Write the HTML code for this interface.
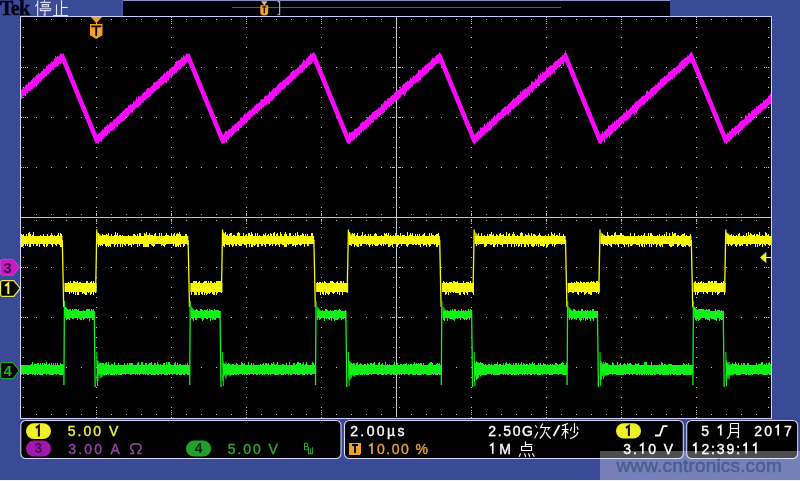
<!DOCTYPE html>
<html><head><meta charset="utf-8">
<style>
html,body{margin:0;padding:0;}
body{width:800px;height:481px;overflow:hidden;background:#3b4a96;position:relative;font-family:"Liberation Sans",sans-serif;}
svg{position:absolute;left:0;top:0;will-change:transform;}
.t{position:absolute;white-space:nowrap;font-size:14px;line-height:14px;letter-spacing:1.5px;}
</style></head><body>
<svg width="800" height="481" viewBox="0 0 800 481" shape-rendering="crispEdges">
<!-- record bar -->
<rect x="122" y="0" width="548" height="16" fill="#000"/>
<rect x="122" y="0" width="548" height="1" fill="#8890c4"/>
<rect x="122" y="0" width="1" height="16" fill="#5050a0"/>
<rect x="123" y="1" width="547" height="15" fill="#000008"/>
<rect x="232" y="7" width="329" height="1" fill="#8c3a8c"/>
<!-- graticule -->
<rect x="21" y="17" width="750" height="401" fill="#000"/>
<rect x="96" y="17" width="1" height="1" fill="#c4c4c4"/>
<rect x="96" y="27" width="1" height="1" fill="#c4c4c4"/>
<rect x="96" y="37" width="1" height="1" fill="#c4c4c4"/>
<rect x="96" y="47" width="1" height="1" fill="#c4c4c4"/>
<rect x="96" y="57" width="1" height="1" fill="#c4c4c4"/>
<rect x="96" y="67" width="1" height="1" fill="#c4c4c4"/>
<rect x="96" y="77" width="1" height="1" fill="#c4c4c4"/>
<rect x="96" y="87" width="1" height="1" fill="#c4c4c4"/>
<rect x="96" y="97" width="1" height="1" fill="#c4c4c4"/>
<rect x="96" y="107" width="1" height="1" fill="#c4c4c4"/>
<rect x="96" y="117" width="1" height="1" fill="#c4c4c4"/>
<rect x="96" y="127" width="1" height="1" fill="#c4c4c4"/>
<rect x="96" y="137" width="1" height="1" fill="#c4c4c4"/>
<rect x="96" y="147" width="1" height="1" fill="#c4c4c4"/>
<rect x="96" y="157" width="1" height="1" fill="#c4c4c4"/>
<rect x="96" y="167" width="1" height="1" fill="#c4c4c4"/>
<rect x="96" y="177" width="1" height="1" fill="#c4c4c4"/>
<rect x="96" y="187" width="1" height="1" fill="#c4c4c4"/>
<rect x="96" y="197" width="1" height="1" fill="#c4c4c4"/>
<rect x="96" y="207" width="1" height="1" fill="#c4c4c4"/>
<rect x="96" y="217" width="1" height="1" fill="#c4c4c4"/>
<rect x="96" y="227" width="1" height="1" fill="#c4c4c4"/>
<rect x="96" y="237" width="1" height="1" fill="#c4c4c4"/>
<rect x="96" y="247" width="1" height="1" fill="#c4c4c4"/>
<rect x="96" y="257" width="1" height="1" fill="#c4c4c4"/>
<rect x="96" y="267" width="1" height="1" fill="#c4c4c4"/>
<rect x="96" y="277" width="1" height="1" fill="#c4c4c4"/>
<rect x="96" y="287" width="1" height="1" fill="#c4c4c4"/>
<rect x="96" y="297" width="1" height="1" fill="#c4c4c4"/>
<rect x="96" y="307" width="1" height="1" fill="#c4c4c4"/>
<rect x="96" y="317" width="1" height="1" fill="#c4c4c4"/>
<rect x="96" y="327" width="1" height="1" fill="#c4c4c4"/>
<rect x="96" y="337" width="1" height="1" fill="#c4c4c4"/>
<rect x="96" y="347" width="1" height="1" fill="#c4c4c4"/>
<rect x="96" y="357" width="1" height="1" fill="#c4c4c4"/>
<rect x="96" y="367" width="1" height="1" fill="#c4c4c4"/>
<rect x="96" y="377" width="1" height="1" fill="#c4c4c4"/>
<rect x="96" y="387" width="1" height="1" fill="#c4c4c4"/>
<rect x="96" y="397" width="1" height="1" fill="#c4c4c4"/>
<rect x="96" y="407" width="1" height="1" fill="#c4c4c4"/>
<rect x="96" y="417" width="1" height="1" fill="#c4c4c4"/>
<rect x="171" y="17" width="1" height="1" fill="#c4c4c4"/>
<rect x="171" y="27" width="1" height="1" fill="#c4c4c4"/>
<rect x="171" y="37" width="1" height="1" fill="#c4c4c4"/>
<rect x="171" y="47" width="1" height="1" fill="#c4c4c4"/>
<rect x="171" y="57" width="1" height="1" fill="#c4c4c4"/>
<rect x="171" y="67" width="1" height="1" fill="#c4c4c4"/>
<rect x="171" y="77" width="1" height="1" fill="#c4c4c4"/>
<rect x="171" y="87" width="1" height="1" fill="#c4c4c4"/>
<rect x="171" y="97" width="1" height="1" fill="#c4c4c4"/>
<rect x="171" y="107" width="1" height="1" fill="#c4c4c4"/>
<rect x="171" y="117" width="1" height="1" fill="#c4c4c4"/>
<rect x="171" y="127" width="1" height="1" fill="#c4c4c4"/>
<rect x="171" y="137" width="1" height="1" fill="#c4c4c4"/>
<rect x="171" y="147" width="1" height="1" fill="#c4c4c4"/>
<rect x="171" y="157" width="1" height="1" fill="#c4c4c4"/>
<rect x="171" y="167" width="1" height="1" fill="#c4c4c4"/>
<rect x="171" y="177" width="1" height="1" fill="#c4c4c4"/>
<rect x="171" y="187" width="1" height="1" fill="#c4c4c4"/>
<rect x="171" y="197" width="1" height="1" fill="#c4c4c4"/>
<rect x="171" y="207" width="1" height="1" fill="#c4c4c4"/>
<rect x="171" y="217" width="1" height="1" fill="#c4c4c4"/>
<rect x="171" y="227" width="1" height="1" fill="#c4c4c4"/>
<rect x="171" y="237" width="1" height="1" fill="#c4c4c4"/>
<rect x="171" y="247" width="1" height="1" fill="#c4c4c4"/>
<rect x="171" y="257" width="1" height="1" fill="#c4c4c4"/>
<rect x="171" y="267" width="1" height="1" fill="#c4c4c4"/>
<rect x="171" y="277" width="1" height="1" fill="#c4c4c4"/>
<rect x="171" y="287" width="1" height="1" fill="#c4c4c4"/>
<rect x="171" y="297" width="1" height="1" fill="#c4c4c4"/>
<rect x="171" y="307" width="1" height="1" fill="#c4c4c4"/>
<rect x="171" y="317" width="1" height="1" fill="#c4c4c4"/>
<rect x="171" y="327" width="1" height="1" fill="#c4c4c4"/>
<rect x="171" y="337" width="1" height="1" fill="#c4c4c4"/>
<rect x="171" y="347" width="1" height="1" fill="#c4c4c4"/>
<rect x="171" y="357" width="1" height="1" fill="#c4c4c4"/>
<rect x="171" y="367" width="1" height="1" fill="#c4c4c4"/>
<rect x="171" y="377" width="1" height="1" fill="#c4c4c4"/>
<rect x="171" y="387" width="1" height="1" fill="#c4c4c4"/>
<rect x="171" y="397" width="1" height="1" fill="#c4c4c4"/>
<rect x="171" y="407" width="1" height="1" fill="#c4c4c4"/>
<rect x="171" y="417" width="1" height="1" fill="#c4c4c4"/>
<rect x="246" y="17" width="1" height="1" fill="#c4c4c4"/>
<rect x="246" y="27" width="1" height="1" fill="#c4c4c4"/>
<rect x="246" y="37" width="1" height="1" fill="#c4c4c4"/>
<rect x="246" y="47" width="1" height="1" fill="#c4c4c4"/>
<rect x="246" y="57" width="1" height="1" fill="#c4c4c4"/>
<rect x="246" y="67" width="1" height="1" fill="#c4c4c4"/>
<rect x="246" y="77" width="1" height="1" fill="#c4c4c4"/>
<rect x="246" y="87" width="1" height="1" fill="#c4c4c4"/>
<rect x="246" y="97" width="1" height="1" fill="#c4c4c4"/>
<rect x="246" y="107" width="1" height="1" fill="#c4c4c4"/>
<rect x="246" y="117" width="1" height="1" fill="#c4c4c4"/>
<rect x="246" y="127" width="1" height="1" fill="#c4c4c4"/>
<rect x="246" y="137" width="1" height="1" fill="#c4c4c4"/>
<rect x="246" y="147" width="1" height="1" fill="#c4c4c4"/>
<rect x="246" y="157" width="1" height="1" fill="#c4c4c4"/>
<rect x="246" y="167" width="1" height="1" fill="#c4c4c4"/>
<rect x="246" y="177" width="1" height="1" fill="#c4c4c4"/>
<rect x="246" y="187" width="1" height="1" fill="#c4c4c4"/>
<rect x="246" y="197" width="1" height="1" fill="#c4c4c4"/>
<rect x="246" y="207" width="1" height="1" fill="#c4c4c4"/>
<rect x="246" y="217" width="1" height="1" fill="#c4c4c4"/>
<rect x="246" y="227" width="1" height="1" fill="#c4c4c4"/>
<rect x="246" y="237" width="1" height="1" fill="#c4c4c4"/>
<rect x="246" y="247" width="1" height="1" fill="#c4c4c4"/>
<rect x="246" y="257" width="1" height="1" fill="#c4c4c4"/>
<rect x="246" y="267" width="1" height="1" fill="#c4c4c4"/>
<rect x="246" y="277" width="1" height="1" fill="#c4c4c4"/>
<rect x="246" y="287" width="1" height="1" fill="#c4c4c4"/>
<rect x="246" y="297" width="1" height="1" fill="#c4c4c4"/>
<rect x="246" y="307" width="1" height="1" fill="#c4c4c4"/>
<rect x="246" y="317" width="1" height="1" fill="#c4c4c4"/>
<rect x="246" y="327" width="1" height="1" fill="#c4c4c4"/>
<rect x="246" y="337" width="1" height="1" fill="#c4c4c4"/>
<rect x="246" y="347" width="1" height="1" fill="#c4c4c4"/>
<rect x="246" y="357" width="1" height="1" fill="#c4c4c4"/>
<rect x="246" y="367" width="1" height="1" fill="#c4c4c4"/>
<rect x="246" y="377" width="1" height="1" fill="#c4c4c4"/>
<rect x="246" y="387" width="1" height="1" fill="#c4c4c4"/>
<rect x="246" y="397" width="1" height="1" fill="#c4c4c4"/>
<rect x="246" y="407" width="1" height="1" fill="#c4c4c4"/>
<rect x="246" y="417" width="1" height="1" fill="#c4c4c4"/>
<rect x="321" y="17" width="1" height="1" fill="#c4c4c4"/>
<rect x="321" y="27" width="1" height="1" fill="#c4c4c4"/>
<rect x="321" y="37" width="1" height="1" fill="#c4c4c4"/>
<rect x="321" y="47" width="1" height="1" fill="#c4c4c4"/>
<rect x="321" y="57" width="1" height="1" fill="#c4c4c4"/>
<rect x="321" y="67" width="1" height="1" fill="#c4c4c4"/>
<rect x="321" y="77" width="1" height="1" fill="#c4c4c4"/>
<rect x="321" y="87" width="1" height="1" fill="#c4c4c4"/>
<rect x="321" y="97" width="1" height="1" fill="#c4c4c4"/>
<rect x="321" y="107" width="1" height="1" fill="#c4c4c4"/>
<rect x="321" y="117" width="1" height="1" fill="#c4c4c4"/>
<rect x="321" y="127" width="1" height="1" fill="#c4c4c4"/>
<rect x="321" y="137" width="1" height="1" fill="#c4c4c4"/>
<rect x="321" y="147" width="1" height="1" fill="#c4c4c4"/>
<rect x="321" y="157" width="1" height="1" fill="#c4c4c4"/>
<rect x="321" y="167" width="1" height="1" fill="#c4c4c4"/>
<rect x="321" y="177" width="1" height="1" fill="#c4c4c4"/>
<rect x="321" y="187" width="1" height="1" fill="#c4c4c4"/>
<rect x="321" y="197" width="1" height="1" fill="#c4c4c4"/>
<rect x="321" y="207" width="1" height="1" fill="#c4c4c4"/>
<rect x="321" y="217" width="1" height="1" fill="#c4c4c4"/>
<rect x="321" y="227" width="1" height="1" fill="#c4c4c4"/>
<rect x="321" y="237" width="1" height="1" fill="#c4c4c4"/>
<rect x="321" y="247" width="1" height="1" fill="#c4c4c4"/>
<rect x="321" y="257" width="1" height="1" fill="#c4c4c4"/>
<rect x="321" y="267" width="1" height="1" fill="#c4c4c4"/>
<rect x="321" y="277" width="1" height="1" fill="#c4c4c4"/>
<rect x="321" y="287" width="1" height="1" fill="#c4c4c4"/>
<rect x="321" y="297" width="1" height="1" fill="#c4c4c4"/>
<rect x="321" y="307" width="1" height="1" fill="#c4c4c4"/>
<rect x="321" y="317" width="1" height="1" fill="#c4c4c4"/>
<rect x="321" y="327" width="1" height="1" fill="#c4c4c4"/>
<rect x="321" y="337" width="1" height="1" fill="#c4c4c4"/>
<rect x="321" y="347" width="1" height="1" fill="#c4c4c4"/>
<rect x="321" y="357" width="1" height="1" fill="#c4c4c4"/>
<rect x="321" y="367" width="1" height="1" fill="#c4c4c4"/>
<rect x="321" y="377" width="1" height="1" fill="#c4c4c4"/>
<rect x="321" y="387" width="1" height="1" fill="#c4c4c4"/>
<rect x="321" y="397" width="1" height="1" fill="#c4c4c4"/>
<rect x="321" y="407" width="1" height="1" fill="#c4c4c4"/>
<rect x="321" y="417" width="1" height="1" fill="#c4c4c4"/>
<rect x="471" y="17" width="1" height="1" fill="#c4c4c4"/>
<rect x="471" y="27" width="1" height="1" fill="#c4c4c4"/>
<rect x="471" y="37" width="1" height="1" fill="#c4c4c4"/>
<rect x="471" y="47" width="1" height="1" fill="#c4c4c4"/>
<rect x="471" y="57" width="1" height="1" fill="#c4c4c4"/>
<rect x="471" y="67" width="1" height="1" fill="#c4c4c4"/>
<rect x="471" y="77" width="1" height="1" fill="#c4c4c4"/>
<rect x="471" y="87" width="1" height="1" fill="#c4c4c4"/>
<rect x="471" y="97" width="1" height="1" fill="#c4c4c4"/>
<rect x="471" y="107" width="1" height="1" fill="#c4c4c4"/>
<rect x="471" y="117" width="1" height="1" fill="#c4c4c4"/>
<rect x="471" y="127" width="1" height="1" fill="#c4c4c4"/>
<rect x="471" y="137" width="1" height="1" fill="#c4c4c4"/>
<rect x="471" y="147" width="1" height="1" fill="#c4c4c4"/>
<rect x="471" y="157" width="1" height="1" fill="#c4c4c4"/>
<rect x="471" y="167" width="1" height="1" fill="#c4c4c4"/>
<rect x="471" y="177" width="1" height="1" fill="#c4c4c4"/>
<rect x="471" y="187" width="1" height="1" fill="#c4c4c4"/>
<rect x="471" y="197" width="1" height="1" fill="#c4c4c4"/>
<rect x="471" y="207" width="1" height="1" fill="#c4c4c4"/>
<rect x="471" y="217" width="1" height="1" fill="#c4c4c4"/>
<rect x="471" y="227" width="1" height="1" fill="#c4c4c4"/>
<rect x="471" y="237" width="1" height="1" fill="#c4c4c4"/>
<rect x="471" y="247" width="1" height="1" fill="#c4c4c4"/>
<rect x="471" y="257" width="1" height="1" fill="#c4c4c4"/>
<rect x="471" y="267" width="1" height="1" fill="#c4c4c4"/>
<rect x="471" y="277" width="1" height="1" fill="#c4c4c4"/>
<rect x="471" y="287" width="1" height="1" fill="#c4c4c4"/>
<rect x="471" y="297" width="1" height="1" fill="#c4c4c4"/>
<rect x="471" y="307" width="1" height="1" fill="#c4c4c4"/>
<rect x="471" y="317" width="1" height="1" fill="#c4c4c4"/>
<rect x="471" y="327" width="1" height="1" fill="#c4c4c4"/>
<rect x="471" y="337" width="1" height="1" fill="#c4c4c4"/>
<rect x="471" y="347" width="1" height="1" fill="#c4c4c4"/>
<rect x="471" y="357" width="1" height="1" fill="#c4c4c4"/>
<rect x="471" y="367" width="1" height="1" fill="#c4c4c4"/>
<rect x="471" y="377" width="1" height="1" fill="#c4c4c4"/>
<rect x="471" y="387" width="1" height="1" fill="#c4c4c4"/>
<rect x="471" y="397" width="1" height="1" fill="#c4c4c4"/>
<rect x="471" y="407" width="1" height="1" fill="#c4c4c4"/>
<rect x="471" y="417" width="1" height="1" fill="#c4c4c4"/>
<rect x="546" y="17" width="1" height="1" fill="#c4c4c4"/>
<rect x="546" y="27" width="1" height="1" fill="#c4c4c4"/>
<rect x="546" y="37" width="1" height="1" fill="#c4c4c4"/>
<rect x="546" y="47" width="1" height="1" fill="#c4c4c4"/>
<rect x="546" y="57" width="1" height="1" fill="#c4c4c4"/>
<rect x="546" y="67" width="1" height="1" fill="#c4c4c4"/>
<rect x="546" y="77" width="1" height="1" fill="#c4c4c4"/>
<rect x="546" y="87" width="1" height="1" fill="#c4c4c4"/>
<rect x="546" y="97" width="1" height="1" fill="#c4c4c4"/>
<rect x="546" y="107" width="1" height="1" fill="#c4c4c4"/>
<rect x="546" y="117" width="1" height="1" fill="#c4c4c4"/>
<rect x="546" y="127" width="1" height="1" fill="#c4c4c4"/>
<rect x="546" y="137" width="1" height="1" fill="#c4c4c4"/>
<rect x="546" y="147" width="1" height="1" fill="#c4c4c4"/>
<rect x="546" y="157" width="1" height="1" fill="#c4c4c4"/>
<rect x="546" y="167" width="1" height="1" fill="#c4c4c4"/>
<rect x="546" y="177" width="1" height="1" fill="#c4c4c4"/>
<rect x="546" y="187" width="1" height="1" fill="#c4c4c4"/>
<rect x="546" y="197" width="1" height="1" fill="#c4c4c4"/>
<rect x="546" y="207" width="1" height="1" fill="#c4c4c4"/>
<rect x="546" y="217" width="1" height="1" fill="#c4c4c4"/>
<rect x="546" y="227" width="1" height="1" fill="#c4c4c4"/>
<rect x="546" y="237" width="1" height="1" fill="#c4c4c4"/>
<rect x="546" y="247" width="1" height="1" fill="#c4c4c4"/>
<rect x="546" y="257" width="1" height="1" fill="#c4c4c4"/>
<rect x="546" y="267" width="1" height="1" fill="#c4c4c4"/>
<rect x="546" y="277" width="1" height="1" fill="#c4c4c4"/>
<rect x="546" y="287" width="1" height="1" fill="#c4c4c4"/>
<rect x="546" y="297" width="1" height="1" fill="#c4c4c4"/>
<rect x="546" y="307" width="1" height="1" fill="#c4c4c4"/>
<rect x="546" y="317" width="1" height="1" fill="#c4c4c4"/>
<rect x="546" y="327" width="1" height="1" fill="#c4c4c4"/>
<rect x="546" y="337" width="1" height="1" fill="#c4c4c4"/>
<rect x="546" y="347" width="1" height="1" fill="#c4c4c4"/>
<rect x="546" y="357" width="1" height="1" fill="#c4c4c4"/>
<rect x="546" y="367" width="1" height="1" fill="#c4c4c4"/>
<rect x="546" y="377" width="1" height="1" fill="#c4c4c4"/>
<rect x="546" y="387" width="1" height="1" fill="#c4c4c4"/>
<rect x="546" y="397" width="1" height="1" fill="#c4c4c4"/>
<rect x="546" y="407" width="1" height="1" fill="#c4c4c4"/>
<rect x="546" y="417" width="1" height="1" fill="#c4c4c4"/>
<rect x="621" y="17" width="1" height="1" fill="#c4c4c4"/>
<rect x="621" y="27" width="1" height="1" fill="#c4c4c4"/>
<rect x="621" y="37" width="1" height="1" fill="#c4c4c4"/>
<rect x="621" y="47" width="1" height="1" fill="#c4c4c4"/>
<rect x="621" y="57" width="1" height="1" fill="#c4c4c4"/>
<rect x="621" y="67" width="1" height="1" fill="#c4c4c4"/>
<rect x="621" y="77" width="1" height="1" fill="#c4c4c4"/>
<rect x="621" y="87" width="1" height="1" fill="#c4c4c4"/>
<rect x="621" y="97" width="1" height="1" fill="#c4c4c4"/>
<rect x="621" y="107" width="1" height="1" fill="#c4c4c4"/>
<rect x="621" y="117" width="1" height="1" fill="#c4c4c4"/>
<rect x="621" y="127" width="1" height="1" fill="#c4c4c4"/>
<rect x="621" y="137" width="1" height="1" fill="#c4c4c4"/>
<rect x="621" y="147" width="1" height="1" fill="#c4c4c4"/>
<rect x="621" y="157" width="1" height="1" fill="#c4c4c4"/>
<rect x="621" y="167" width="1" height="1" fill="#c4c4c4"/>
<rect x="621" y="177" width="1" height="1" fill="#c4c4c4"/>
<rect x="621" y="187" width="1" height="1" fill="#c4c4c4"/>
<rect x="621" y="197" width="1" height="1" fill="#c4c4c4"/>
<rect x="621" y="207" width="1" height="1" fill="#c4c4c4"/>
<rect x="621" y="217" width="1" height="1" fill="#c4c4c4"/>
<rect x="621" y="227" width="1" height="1" fill="#c4c4c4"/>
<rect x="621" y="237" width="1" height="1" fill="#c4c4c4"/>
<rect x="621" y="247" width="1" height="1" fill="#c4c4c4"/>
<rect x="621" y="257" width="1" height="1" fill="#c4c4c4"/>
<rect x="621" y="267" width="1" height="1" fill="#c4c4c4"/>
<rect x="621" y="277" width="1" height="1" fill="#c4c4c4"/>
<rect x="621" y="287" width="1" height="1" fill="#c4c4c4"/>
<rect x="621" y="297" width="1" height="1" fill="#c4c4c4"/>
<rect x="621" y="307" width="1" height="1" fill="#c4c4c4"/>
<rect x="621" y="317" width="1" height="1" fill="#c4c4c4"/>
<rect x="621" y="327" width="1" height="1" fill="#c4c4c4"/>
<rect x="621" y="337" width="1" height="1" fill="#c4c4c4"/>
<rect x="621" y="347" width="1" height="1" fill="#c4c4c4"/>
<rect x="621" y="357" width="1" height="1" fill="#c4c4c4"/>
<rect x="621" y="367" width="1" height="1" fill="#c4c4c4"/>
<rect x="621" y="377" width="1" height="1" fill="#c4c4c4"/>
<rect x="621" y="387" width="1" height="1" fill="#c4c4c4"/>
<rect x="621" y="397" width="1" height="1" fill="#c4c4c4"/>
<rect x="621" y="407" width="1" height="1" fill="#c4c4c4"/>
<rect x="621" y="417" width="1" height="1" fill="#c4c4c4"/>
<rect x="696" y="17" width="1" height="1" fill="#c4c4c4"/>
<rect x="696" y="27" width="1" height="1" fill="#c4c4c4"/>
<rect x="696" y="37" width="1" height="1" fill="#c4c4c4"/>
<rect x="696" y="47" width="1" height="1" fill="#c4c4c4"/>
<rect x="696" y="57" width="1" height="1" fill="#c4c4c4"/>
<rect x="696" y="67" width="1" height="1" fill="#c4c4c4"/>
<rect x="696" y="77" width="1" height="1" fill="#c4c4c4"/>
<rect x="696" y="87" width="1" height="1" fill="#c4c4c4"/>
<rect x="696" y="97" width="1" height="1" fill="#c4c4c4"/>
<rect x="696" y="107" width="1" height="1" fill="#c4c4c4"/>
<rect x="696" y="117" width="1" height="1" fill="#c4c4c4"/>
<rect x="696" y="127" width="1" height="1" fill="#c4c4c4"/>
<rect x="696" y="137" width="1" height="1" fill="#c4c4c4"/>
<rect x="696" y="147" width="1" height="1" fill="#c4c4c4"/>
<rect x="696" y="157" width="1" height="1" fill="#c4c4c4"/>
<rect x="696" y="167" width="1" height="1" fill="#c4c4c4"/>
<rect x="696" y="177" width="1" height="1" fill="#c4c4c4"/>
<rect x="696" y="187" width="1" height="1" fill="#c4c4c4"/>
<rect x="696" y="197" width="1" height="1" fill="#c4c4c4"/>
<rect x="696" y="207" width="1" height="1" fill="#c4c4c4"/>
<rect x="696" y="217" width="1" height="1" fill="#c4c4c4"/>
<rect x="696" y="227" width="1" height="1" fill="#c4c4c4"/>
<rect x="696" y="237" width="1" height="1" fill="#c4c4c4"/>
<rect x="696" y="247" width="1" height="1" fill="#c4c4c4"/>
<rect x="696" y="257" width="1" height="1" fill="#c4c4c4"/>
<rect x="696" y="267" width="1" height="1" fill="#c4c4c4"/>
<rect x="696" y="277" width="1" height="1" fill="#c4c4c4"/>
<rect x="696" y="287" width="1" height="1" fill="#c4c4c4"/>
<rect x="696" y="297" width="1" height="1" fill="#c4c4c4"/>
<rect x="696" y="307" width="1" height="1" fill="#c4c4c4"/>
<rect x="696" y="317" width="1" height="1" fill="#c4c4c4"/>
<rect x="696" y="327" width="1" height="1" fill="#c4c4c4"/>
<rect x="696" y="337" width="1" height="1" fill="#c4c4c4"/>
<rect x="696" y="347" width="1" height="1" fill="#c4c4c4"/>
<rect x="696" y="357" width="1" height="1" fill="#c4c4c4"/>
<rect x="696" y="367" width="1" height="1" fill="#c4c4c4"/>
<rect x="696" y="377" width="1" height="1" fill="#c4c4c4"/>
<rect x="696" y="387" width="1" height="1" fill="#c4c4c4"/>
<rect x="696" y="397" width="1" height="1" fill="#c4c4c4"/>
<rect x="696" y="407" width="1" height="1" fill="#c4c4c4"/>
<rect x="696" y="417" width="1" height="1" fill="#c4c4c4"/>
<rect x="21" y="67" width="1" height="1" fill="#c4c4c4"/>
<rect x="36" y="67" width="1" height="1" fill="#c4c4c4"/>
<rect x="51" y="67" width="1" height="1" fill="#c4c4c4"/>
<rect x="66" y="67" width="1" height="1" fill="#c4c4c4"/>
<rect x="81" y="67" width="1" height="1" fill="#c4c4c4"/>
<rect x="96" y="67" width="1" height="1" fill="#c4c4c4"/>
<rect x="111" y="67" width="1" height="1" fill="#c4c4c4"/>
<rect x="126" y="67" width="1" height="1" fill="#c4c4c4"/>
<rect x="141" y="67" width="1" height="1" fill="#c4c4c4"/>
<rect x="156" y="67" width="1" height="1" fill="#c4c4c4"/>
<rect x="171" y="67" width="1" height="1" fill="#c4c4c4"/>
<rect x="186" y="67" width="1" height="1" fill="#c4c4c4"/>
<rect x="201" y="67" width="1" height="1" fill="#c4c4c4"/>
<rect x="216" y="67" width="1" height="1" fill="#c4c4c4"/>
<rect x="231" y="67" width="1" height="1" fill="#c4c4c4"/>
<rect x="246" y="67" width="1" height="1" fill="#c4c4c4"/>
<rect x="261" y="67" width="1" height="1" fill="#c4c4c4"/>
<rect x="276" y="67" width="1" height="1" fill="#c4c4c4"/>
<rect x="291" y="67" width="1" height="1" fill="#c4c4c4"/>
<rect x="306" y="67" width="1" height="1" fill="#c4c4c4"/>
<rect x="321" y="67" width="1" height="1" fill="#c4c4c4"/>
<rect x="336" y="67" width="1" height="1" fill="#c4c4c4"/>
<rect x="351" y="67" width="1" height="1" fill="#c4c4c4"/>
<rect x="366" y="67" width="1" height="1" fill="#c4c4c4"/>
<rect x="381" y="67" width="1" height="1" fill="#c4c4c4"/>
<rect x="396" y="67" width="1" height="1" fill="#c4c4c4"/>
<rect x="411" y="67" width="1" height="1" fill="#c4c4c4"/>
<rect x="426" y="67" width="1" height="1" fill="#c4c4c4"/>
<rect x="441" y="67" width="1" height="1" fill="#c4c4c4"/>
<rect x="456" y="67" width="1" height="1" fill="#c4c4c4"/>
<rect x="471" y="67" width="1" height="1" fill="#c4c4c4"/>
<rect x="486" y="67" width="1" height="1" fill="#c4c4c4"/>
<rect x="501" y="67" width="1" height="1" fill="#c4c4c4"/>
<rect x="516" y="67" width="1" height="1" fill="#c4c4c4"/>
<rect x="531" y="67" width="1" height="1" fill="#c4c4c4"/>
<rect x="546" y="67" width="1" height="1" fill="#c4c4c4"/>
<rect x="561" y="67" width="1" height="1" fill="#c4c4c4"/>
<rect x="576" y="67" width="1" height="1" fill="#c4c4c4"/>
<rect x="591" y="67" width="1" height="1" fill="#c4c4c4"/>
<rect x="606" y="67" width="1" height="1" fill="#c4c4c4"/>
<rect x="621" y="67" width="1" height="1" fill="#c4c4c4"/>
<rect x="636" y="67" width="1" height="1" fill="#c4c4c4"/>
<rect x="651" y="67" width="1" height="1" fill="#c4c4c4"/>
<rect x="666" y="67" width="1" height="1" fill="#c4c4c4"/>
<rect x="681" y="67" width="1" height="1" fill="#c4c4c4"/>
<rect x="696" y="67" width="1" height="1" fill="#c4c4c4"/>
<rect x="711" y="67" width="1" height="1" fill="#c4c4c4"/>
<rect x="726" y="67" width="1" height="1" fill="#c4c4c4"/>
<rect x="741" y="67" width="1" height="1" fill="#c4c4c4"/>
<rect x="756" y="67" width="1" height="1" fill="#c4c4c4"/>
<rect x="771" y="67" width="1" height="1" fill="#c4c4c4"/>
<rect x="21" y="117" width="1" height="1" fill="#c4c4c4"/>
<rect x="36" y="117" width="1" height="1" fill="#c4c4c4"/>
<rect x="51" y="117" width="1" height="1" fill="#c4c4c4"/>
<rect x="66" y="117" width="1" height="1" fill="#c4c4c4"/>
<rect x="81" y="117" width="1" height="1" fill="#c4c4c4"/>
<rect x="96" y="117" width="1" height="1" fill="#c4c4c4"/>
<rect x="111" y="117" width="1" height="1" fill="#c4c4c4"/>
<rect x="126" y="117" width="1" height="1" fill="#c4c4c4"/>
<rect x="141" y="117" width="1" height="1" fill="#c4c4c4"/>
<rect x="156" y="117" width="1" height="1" fill="#c4c4c4"/>
<rect x="171" y="117" width="1" height="1" fill="#c4c4c4"/>
<rect x="186" y="117" width="1" height="1" fill="#c4c4c4"/>
<rect x="201" y="117" width="1" height="1" fill="#c4c4c4"/>
<rect x="216" y="117" width="1" height="1" fill="#c4c4c4"/>
<rect x="231" y="117" width="1" height="1" fill="#c4c4c4"/>
<rect x="246" y="117" width="1" height="1" fill="#c4c4c4"/>
<rect x="261" y="117" width="1" height="1" fill="#c4c4c4"/>
<rect x="276" y="117" width="1" height="1" fill="#c4c4c4"/>
<rect x="291" y="117" width="1" height="1" fill="#c4c4c4"/>
<rect x="306" y="117" width="1" height="1" fill="#c4c4c4"/>
<rect x="321" y="117" width="1" height="1" fill="#c4c4c4"/>
<rect x="336" y="117" width="1" height="1" fill="#c4c4c4"/>
<rect x="351" y="117" width="1" height="1" fill="#c4c4c4"/>
<rect x="366" y="117" width="1" height="1" fill="#c4c4c4"/>
<rect x="381" y="117" width="1" height="1" fill="#c4c4c4"/>
<rect x="396" y="117" width="1" height="1" fill="#c4c4c4"/>
<rect x="411" y="117" width="1" height="1" fill="#c4c4c4"/>
<rect x="426" y="117" width="1" height="1" fill="#c4c4c4"/>
<rect x="441" y="117" width="1" height="1" fill="#c4c4c4"/>
<rect x="456" y="117" width="1" height="1" fill="#c4c4c4"/>
<rect x="471" y="117" width="1" height="1" fill="#c4c4c4"/>
<rect x="486" y="117" width="1" height="1" fill="#c4c4c4"/>
<rect x="501" y="117" width="1" height="1" fill="#c4c4c4"/>
<rect x="516" y="117" width="1" height="1" fill="#c4c4c4"/>
<rect x="531" y="117" width="1" height="1" fill="#c4c4c4"/>
<rect x="546" y="117" width="1" height="1" fill="#c4c4c4"/>
<rect x="561" y="117" width="1" height="1" fill="#c4c4c4"/>
<rect x="576" y="117" width="1" height="1" fill="#c4c4c4"/>
<rect x="591" y="117" width="1" height="1" fill="#c4c4c4"/>
<rect x="606" y="117" width="1" height="1" fill="#c4c4c4"/>
<rect x="621" y="117" width="1" height="1" fill="#c4c4c4"/>
<rect x="636" y="117" width="1" height="1" fill="#c4c4c4"/>
<rect x="651" y="117" width="1" height="1" fill="#c4c4c4"/>
<rect x="666" y="117" width="1" height="1" fill="#c4c4c4"/>
<rect x="681" y="117" width="1" height="1" fill="#c4c4c4"/>
<rect x="696" y="117" width="1" height="1" fill="#c4c4c4"/>
<rect x="711" y="117" width="1" height="1" fill="#c4c4c4"/>
<rect x="726" y="117" width="1" height="1" fill="#c4c4c4"/>
<rect x="741" y="117" width="1" height="1" fill="#c4c4c4"/>
<rect x="756" y="117" width="1" height="1" fill="#c4c4c4"/>
<rect x="771" y="117" width="1" height="1" fill="#c4c4c4"/>
<rect x="21" y="167" width="1" height="1" fill="#c4c4c4"/>
<rect x="36" y="167" width="1" height="1" fill="#c4c4c4"/>
<rect x="51" y="167" width="1" height="1" fill="#c4c4c4"/>
<rect x="66" y="167" width="1" height="1" fill="#c4c4c4"/>
<rect x="81" y="167" width="1" height="1" fill="#c4c4c4"/>
<rect x="96" y="167" width="1" height="1" fill="#c4c4c4"/>
<rect x="111" y="167" width="1" height="1" fill="#c4c4c4"/>
<rect x="126" y="167" width="1" height="1" fill="#c4c4c4"/>
<rect x="141" y="167" width="1" height="1" fill="#c4c4c4"/>
<rect x="156" y="167" width="1" height="1" fill="#c4c4c4"/>
<rect x="171" y="167" width="1" height="1" fill="#c4c4c4"/>
<rect x="186" y="167" width="1" height="1" fill="#c4c4c4"/>
<rect x="201" y="167" width="1" height="1" fill="#c4c4c4"/>
<rect x="216" y="167" width="1" height="1" fill="#c4c4c4"/>
<rect x="231" y="167" width="1" height="1" fill="#c4c4c4"/>
<rect x="246" y="167" width="1" height="1" fill="#c4c4c4"/>
<rect x="261" y="167" width="1" height="1" fill="#c4c4c4"/>
<rect x="276" y="167" width="1" height="1" fill="#c4c4c4"/>
<rect x="291" y="167" width="1" height="1" fill="#c4c4c4"/>
<rect x="306" y="167" width="1" height="1" fill="#c4c4c4"/>
<rect x="321" y="167" width="1" height="1" fill="#c4c4c4"/>
<rect x="336" y="167" width="1" height="1" fill="#c4c4c4"/>
<rect x="351" y="167" width="1" height="1" fill="#c4c4c4"/>
<rect x="366" y="167" width="1" height="1" fill="#c4c4c4"/>
<rect x="381" y="167" width="1" height="1" fill="#c4c4c4"/>
<rect x="396" y="167" width="1" height="1" fill="#c4c4c4"/>
<rect x="411" y="167" width="1" height="1" fill="#c4c4c4"/>
<rect x="426" y="167" width="1" height="1" fill="#c4c4c4"/>
<rect x="441" y="167" width="1" height="1" fill="#c4c4c4"/>
<rect x="456" y="167" width="1" height="1" fill="#c4c4c4"/>
<rect x="471" y="167" width="1" height="1" fill="#c4c4c4"/>
<rect x="486" y="167" width="1" height="1" fill="#c4c4c4"/>
<rect x="501" y="167" width="1" height="1" fill="#c4c4c4"/>
<rect x="516" y="167" width="1" height="1" fill="#c4c4c4"/>
<rect x="531" y="167" width="1" height="1" fill="#c4c4c4"/>
<rect x="546" y="167" width="1" height="1" fill="#c4c4c4"/>
<rect x="561" y="167" width="1" height="1" fill="#c4c4c4"/>
<rect x="576" y="167" width="1" height="1" fill="#c4c4c4"/>
<rect x="591" y="167" width="1" height="1" fill="#c4c4c4"/>
<rect x="606" y="167" width="1" height="1" fill="#c4c4c4"/>
<rect x="621" y="167" width="1" height="1" fill="#c4c4c4"/>
<rect x="636" y="167" width="1" height="1" fill="#c4c4c4"/>
<rect x="651" y="167" width="1" height="1" fill="#c4c4c4"/>
<rect x="666" y="167" width="1" height="1" fill="#c4c4c4"/>
<rect x="681" y="167" width="1" height="1" fill="#c4c4c4"/>
<rect x="696" y="167" width="1" height="1" fill="#c4c4c4"/>
<rect x="711" y="167" width="1" height="1" fill="#c4c4c4"/>
<rect x="726" y="167" width="1" height="1" fill="#c4c4c4"/>
<rect x="741" y="167" width="1" height="1" fill="#c4c4c4"/>
<rect x="756" y="167" width="1" height="1" fill="#c4c4c4"/>
<rect x="771" y="167" width="1" height="1" fill="#c4c4c4"/>
<rect x="21" y="267" width="1" height="1" fill="#c4c4c4"/>
<rect x="36" y="267" width="1" height="1" fill="#c4c4c4"/>
<rect x="51" y="267" width="1" height="1" fill="#c4c4c4"/>
<rect x="66" y="267" width="1" height="1" fill="#c4c4c4"/>
<rect x="81" y="267" width="1" height="1" fill="#c4c4c4"/>
<rect x="96" y="267" width="1" height="1" fill="#c4c4c4"/>
<rect x="111" y="267" width="1" height="1" fill="#c4c4c4"/>
<rect x="126" y="267" width="1" height="1" fill="#c4c4c4"/>
<rect x="141" y="267" width="1" height="1" fill="#c4c4c4"/>
<rect x="156" y="267" width="1" height="1" fill="#c4c4c4"/>
<rect x="171" y="267" width="1" height="1" fill="#c4c4c4"/>
<rect x="186" y="267" width="1" height="1" fill="#c4c4c4"/>
<rect x="201" y="267" width="1" height="1" fill="#c4c4c4"/>
<rect x="216" y="267" width="1" height="1" fill="#c4c4c4"/>
<rect x="231" y="267" width="1" height="1" fill="#c4c4c4"/>
<rect x="246" y="267" width="1" height="1" fill="#c4c4c4"/>
<rect x="261" y="267" width="1" height="1" fill="#c4c4c4"/>
<rect x="276" y="267" width="1" height="1" fill="#c4c4c4"/>
<rect x="291" y="267" width="1" height="1" fill="#c4c4c4"/>
<rect x="306" y="267" width="1" height="1" fill="#c4c4c4"/>
<rect x="321" y="267" width="1" height="1" fill="#c4c4c4"/>
<rect x="336" y="267" width="1" height="1" fill="#c4c4c4"/>
<rect x="351" y="267" width="1" height="1" fill="#c4c4c4"/>
<rect x="366" y="267" width="1" height="1" fill="#c4c4c4"/>
<rect x="381" y="267" width="1" height="1" fill="#c4c4c4"/>
<rect x="396" y="267" width="1" height="1" fill="#c4c4c4"/>
<rect x="411" y="267" width="1" height="1" fill="#c4c4c4"/>
<rect x="426" y="267" width="1" height="1" fill="#c4c4c4"/>
<rect x="441" y="267" width="1" height="1" fill="#c4c4c4"/>
<rect x="456" y="267" width="1" height="1" fill="#c4c4c4"/>
<rect x="471" y="267" width="1" height="1" fill="#c4c4c4"/>
<rect x="486" y="267" width="1" height="1" fill="#c4c4c4"/>
<rect x="501" y="267" width="1" height="1" fill="#c4c4c4"/>
<rect x="516" y="267" width="1" height="1" fill="#c4c4c4"/>
<rect x="531" y="267" width="1" height="1" fill="#c4c4c4"/>
<rect x="546" y="267" width="1" height="1" fill="#c4c4c4"/>
<rect x="561" y="267" width="1" height="1" fill="#c4c4c4"/>
<rect x="576" y="267" width="1" height="1" fill="#c4c4c4"/>
<rect x="591" y="267" width="1" height="1" fill="#c4c4c4"/>
<rect x="606" y="267" width="1" height="1" fill="#c4c4c4"/>
<rect x="621" y="267" width="1" height="1" fill="#c4c4c4"/>
<rect x="636" y="267" width="1" height="1" fill="#c4c4c4"/>
<rect x="651" y="267" width="1" height="1" fill="#c4c4c4"/>
<rect x="666" y="267" width="1" height="1" fill="#c4c4c4"/>
<rect x="681" y="267" width="1" height="1" fill="#c4c4c4"/>
<rect x="696" y="267" width="1" height="1" fill="#c4c4c4"/>
<rect x="711" y="267" width="1" height="1" fill="#c4c4c4"/>
<rect x="726" y="267" width="1" height="1" fill="#c4c4c4"/>
<rect x="741" y="267" width="1" height="1" fill="#c4c4c4"/>
<rect x="756" y="267" width="1" height="1" fill="#c4c4c4"/>
<rect x="771" y="267" width="1" height="1" fill="#c4c4c4"/>
<rect x="21" y="317" width="1" height="1" fill="#c4c4c4"/>
<rect x="36" y="317" width="1" height="1" fill="#c4c4c4"/>
<rect x="51" y="317" width="1" height="1" fill="#c4c4c4"/>
<rect x="66" y="317" width="1" height="1" fill="#c4c4c4"/>
<rect x="81" y="317" width="1" height="1" fill="#c4c4c4"/>
<rect x="96" y="317" width="1" height="1" fill="#c4c4c4"/>
<rect x="111" y="317" width="1" height="1" fill="#c4c4c4"/>
<rect x="126" y="317" width="1" height="1" fill="#c4c4c4"/>
<rect x="141" y="317" width="1" height="1" fill="#c4c4c4"/>
<rect x="156" y="317" width="1" height="1" fill="#c4c4c4"/>
<rect x="171" y="317" width="1" height="1" fill="#c4c4c4"/>
<rect x="186" y="317" width="1" height="1" fill="#c4c4c4"/>
<rect x="201" y="317" width="1" height="1" fill="#c4c4c4"/>
<rect x="216" y="317" width="1" height="1" fill="#c4c4c4"/>
<rect x="231" y="317" width="1" height="1" fill="#c4c4c4"/>
<rect x="246" y="317" width="1" height="1" fill="#c4c4c4"/>
<rect x="261" y="317" width="1" height="1" fill="#c4c4c4"/>
<rect x="276" y="317" width="1" height="1" fill="#c4c4c4"/>
<rect x="291" y="317" width="1" height="1" fill="#c4c4c4"/>
<rect x="306" y="317" width="1" height="1" fill="#c4c4c4"/>
<rect x="321" y="317" width="1" height="1" fill="#c4c4c4"/>
<rect x="336" y="317" width="1" height="1" fill="#c4c4c4"/>
<rect x="351" y="317" width="1" height="1" fill="#c4c4c4"/>
<rect x="366" y="317" width="1" height="1" fill="#c4c4c4"/>
<rect x="381" y="317" width="1" height="1" fill="#c4c4c4"/>
<rect x="396" y="317" width="1" height="1" fill="#c4c4c4"/>
<rect x="411" y="317" width="1" height="1" fill="#c4c4c4"/>
<rect x="426" y="317" width="1" height="1" fill="#c4c4c4"/>
<rect x="441" y="317" width="1" height="1" fill="#c4c4c4"/>
<rect x="456" y="317" width="1" height="1" fill="#c4c4c4"/>
<rect x="471" y="317" width="1" height="1" fill="#c4c4c4"/>
<rect x="486" y="317" width="1" height="1" fill="#c4c4c4"/>
<rect x="501" y="317" width="1" height="1" fill="#c4c4c4"/>
<rect x="516" y="317" width="1" height="1" fill="#c4c4c4"/>
<rect x="531" y="317" width="1" height="1" fill="#c4c4c4"/>
<rect x="546" y="317" width="1" height="1" fill="#c4c4c4"/>
<rect x="561" y="317" width="1" height="1" fill="#c4c4c4"/>
<rect x="576" y="317" width="1" height="1" fill="#c4c4c4"/>
<rect x="591" y="317" width="1" height="1" fill="#c4c4c4"/>
<rect x="606" y="317" width="1" height="1" fill="#c4c4c4"/>
<rect x="621" y="317" width="1" height="1" fill="#c4c4c4"/>
<rect x="636" y="317" width="1" height="1" fill="#c4c4c4"/>
<rect x="651" y="317" width="1" height="1" fill="#c4c4c4"/>
<rect x="666" y="317" width="1" height="1" fill="#c4c4c4"/>
<rect x="681" y="317" width="1" height="1" fill="#c4c4c4"/>
<rect x="696" y="317" width="1" height="1" fill="#c4c4c4"/>
<rect x="711" y="317" width="1" height="1" fill="#c4c4c4"/>
<rect x="726" y="317" width="1" height="1" fill="#c4c4c4"/>
<rect x="741" y="317" width="1" height="1" fill="#c4c4c4"/>
<rect x="756" y="317" width="1" height="1" fill="#c4c4c4"/>
<rect x="771" y="317" width="1" height="1" fill="#c4c4c4"/>
<rect x="21" y="367" width="1" height="1" fill="#c4c4c4"/>
<rect x="36" y="367" width="1" height="1" fill="#c4c4c4"/>
<rect x="51" y="367" width="1" height="1" fill="#c4c4c4"/>
<rect x="66" y="367" width="1" height="1" fill="#c4c4c4"/>
<rect x="81" y="367" width="1" height="1" fill="#c4c4c4"/>
<rect x="96" y="367" width="1" height="1" fill="#c4c4c4"/>
<rect x="111" y="367" width="1" height="1" fill="#c4c4c4"/>
<rect x="126" y="367" width="1" height="1" fill="#c4c4c4"/>
<rect x="141" y="367" width="1" height="1" fill="#c4c4c4"/>
<rect x="156" y="367" width="1" height="1" fill="#c4c4c4"/>
<rect x="171" y="367" width="1" height="1" fill="#c4c4c4"/>
<rect x="186" y="367" width="1" height="1" fill="#c4c4c4"/>
<rect x="201" y="367" width="1" height="1" fill="#c4c4c4"/>
<rect x="216" y="367" width="1" height="1" fill="#c4c4c4"/>
<rect x="231" y="367" width="1" height="1" fill="#c4c4c4"/>
<rect x="246" y="367" width="1" height="1" fill="#c4c4c4"/>
<rect x="261" y="367" width="1" height="1" fill="#c4c4c4"/>
<rect x="276" y="367" width="1" height="1" fill="#c4c4c4"/>
<rect x="291" y="367" width="1" height="1" fill="#c4c4c4"/>
<rect x="306" y="367" width="1" height="1" fill="#c4c4c4"/>
<rect x="321" y="367" width="1" height="1" fill="#c4c4c4"/>
<rect x="336" y="367" width="1" height="1" fill="#c4c4c4"/>
<rect x="351" y="367" width="1" height="1" fill="#c4c4c4"/>
<rect x="366" y="367" width="1" height="1" fill="#c4c4c4"/>
<rect x="381" y="367" width="1" height="1" fill="#c4c4c4"/>
<rect x="396" y="367" width="1" height="1" fill="#c4c4c4"/>
<rect x="411" y="367" width="1" height="1" fill="#c4c4c4"/>
<rect x="426" y="367" width="1" height="1" fill="#c4c4c4"/>
<rect x="441" y="367" width="1" height="1" fill="#c4c4c4"/>
<rect x="456" y="367" width="1" height="1" fill="#c4c4c4"/>
<rect x="471" y="367" width="1" height="1" fill="#c4c4c4"/>
<rect x="486" y="367" width="1" height="1" fill="#c4c4c4"/>
<rect x="501" y="367" width="1" height="1" fill="#c4c4c4"/>
<rect x="516" y="367" width="1" height="1" fill="#c4c4c4"/>
<rect x="531" y="367" width="1" height="1" fill="#c4c4c4"/>
<rect x="546" y="367" width="1" height="1" fill="#c4c4c4"/>
<rect x="561" y="367" width="1" height="1" fill="#c4c4c4"/>
<rect x="576" y="367" width="1" height="1" fill="#c4c4c4"/>
<rect x="591" y="367" width="1" height="1" fill="#c4c4c4"/>
<rect x="606" y="367" width="1" height="1" fill="#c4c4c4"/>
<rect x="621" y="367" width="1" height="1" fill="#c4c4c4"/>
<rect x="636" y="367" width="1" height="1" fill="#c4c4c4"/>
<rect x="651" y="367" width="1" height="1" fill="#c4c4c4"/>
<rect x="666" y="367" width="1" height="1" fill="#c4c4c4"/>
<rect x="681" y="367" width="1" height="1" fill="#c4c4c4"/>
<rect x="696" y="367" width="1" height="1" fill="#c4c4c4"/>
<rect x="711" y="367" width="1" height="1" fill="#c4c4c4"/>
<rect x="726" y="367" width="1" height="1" fill="#c4c4c4"/>
<rect x="741" y="367" width="1" height="1" fill="#c4c4c4"/>
<rect x="756" y="367" width="1" height="1" fill="#c4c4c4"/>
<rect x="771" y="367" width="1" height="1" fill="#c4c4c4"/>
<rect x="36" y="19" width="1" height="1" fill="#c4c4c4"/>
<rect x="36" y="414" width="1" height="1" fill="#c4c4c4"/>
<rect x="51" y="19" width="1" height="1" fill="#c4c4c4"/>
<rect x="51" y="414" width="1" height="1" fill="#c4c4c4"/>
<rect x="66" y="19" width="1" height="1" fill="#c4c4c4"/>
<rect x="66" y="414" width="1" height="1" fill="#c4c4c4"/>
<rect x="81" y="19" width="1" height="1" fill="#c4c4c4"/>
<rect x="81" y="414" width="1" height="1" fill="#c4c4c4"/>
<rect x="96" y="19" width="1" height="1" fill="#c4c4c4"/>
<rect x="96" y="414" width="1" height="1" fill="#c4c4c4"/>
<rect x="111" y="19" width="1" height="1" fill="#c4c4c4"/>
<rect x="111" y="414" width="1" height="1" fill="#c4c4c4"/>
<rect x="126" y="19" width="1" height="1" fill="#c4c4c4"/>
<rect x="126" y="414" width="1" height="1" fill="#c4c4c4"/>
<rect x="141" y="19" width="1" height="1" fill="#c4c4c4"/>
<rect x="141" y="414" width="1" height="1" fill="#c4c4c4"/>
<rect x="156" y="19" width="1" height="1" fill="#c4c4c4"/>
<rect x="156" y="414" width="1" height="1" fill="#c4c4c4"/>
<rect x="171" y="19" width="1" height="1" fill="#c4c4c4"/>
<rect x="171" y="414" width="1" height="1" fill="#c4c4c4"/>
<rect x="186" y="19" width="1" height="1" fill="#c4c4c4"/>
<rect x="186" y="414" width="1" height="1" fill="#c4c4c4"/>
<rect x="201" y="19" width="1" height="1" fill="#c4c4c4"/>
<rect x="201" y="414" width="1" height="1" fill="#c4c4c4"/>
<rect x="216" y="19" width="1" height="1" fill="#c4c4c4"/>
<rect x="216" y="414" width="1" height="1" fill="#c4c4c4"/>
<rect x="231" y="19" width="1" height="1" fill="#c4c4c4"/>
<rect x="231" y="414" width="1" height="1" fill="#c4c4c4"/>
<rect x="246" y="19" width="1" height="1" fill="#c4c4c4"/>
<rect x="246" y="414" width="1" height="1" fill="#c4c4c4"/>
<rect x="261" y="19" width="1" height="1" fill="#c4c4c4"/>
<rect x="261" y="414" width="1" height="1" fill="#c4c4c4"/>
<rect x="276" y="19" width="1" height="1" fill="#c4c4c4"/>
<rect x="276" y="414" width="1" height="1" fill="#c4c4c4"/>
<rect x="291" y="19" width="1" height="1" fill="#c4c4c4"/>
<rect x="291" y="414" width="1" height="1" fill="#c4c4c4"/>
<rect x="306" y="19" width="1" height="1" fill="#c4c4c4"/>
<rect x="306" y="414" width="1" height="1" fill="#c4c4c4"/>
<rect x="321" y="19" width="1" height="1" fill="#c4c4c4"/>
<rect x="321" y="414" width="1" height="1" fill="#c4c4c4"/>
<rect x="336" y="19" width="1" height="1" fill="#c4c4c4"/>
<rect x="336" y="414" width="1" height="1" fill="#c4c4c4"/>
<rect x="351" y="19" width="1" height="1" fill="#c4c4c4"/>
<rect x="351" y="414" width="1" height="1" fill="#c4c4c4"/>
<rect x="366" y="19" width="1" height="1" fill="#c4c4c4"/>
<rect x="366" y="414" width="1" height="1" fill="#c4c4c4"/>
<rect x="381" y="19" width="1" height="1" fill="#c4c4c4"/>
<rect x="381" y="414" width="1" height="1" fill="#c4c4c4"/>
<rect x="396" y="19" width="1" height="1" fill="#c4c4c4"/>
<rect x="396" y="414" width="1" height="1" fill="#c4c4c4"/>
<rect x="411" y="19" width="1" height="1" fill="#c4c4c4"/>
<rect x="411" y="414" width="1" height="1" fill="#c4c4c4"/>
<rect x="426" y="19" width="1" height="1" fill="#c4c4c4"/>
<rect x="426" y="414" width="1" height="1" fill="#c4c4c4"/>
<rect x="441" y="19" width="1" height="1" fill="#c4c4c4"/>
<rect x="441" y="414" width="1" height="1" fill="#c4c4c4"/>
<rect x="456" y="19" width="1" height="1" fill="#c4c4c4"/>
<rect x="456" y="414" width="1" height="1" fill="#c4c4c4"/>
<rect x="471" y="19" width="1" height="1" fill="#c4c4c4"/>
<rect x="471" y="414" width="1" height="1" fill="#c4c4c4"/>
<rect x="486" y="19" width="1" height="1" fill="#c4c4c4"/>
<rect x="486" y="414" width="1" height="1" fill="#c4c4c4"/>
<rect x="501" y="19" width="1" height="1" fill="#c4c4c4"/>
<rect x="501" y="414" width="1" height="1" fill="#c4c4c4"/>
<rect x="516" y="19" width="1" height="1" fill="#c4c4c4"/>
<rect x="516" y="414" width="1" height="1" fill="#c4c4c4"/>
<rect x="531" y="19" width="1" height="1" fill="#c4c4c4"/>
<rect x="531" y="414" width="1" height="1" fill="#c4c4c4"/>
<rect x="546" y="19" width="1" height="1" fill="#c4c4c4"/>
<rect x="546" y="414" width="1" height="1" fill="#c4c4c4"/>
<rect x="561" y="19" width="1" height="1" fill="#c4c4c4"/>
<rect x="561" y="414" width="1" height="1" fill="#c4c4c4"/>
<rect x="576" y="19" width="1" height="1" fill="#c4c4c4"/>
<rect x="576" y="414" width="1" height="1" fill="#c4c4c4"/>
<rect x="591" y="19" width="1" height="1" fill="#c4c4c4"/>
<rect x="591" y="414" width="1" height="1" fill="#c4c4c4"/>
<rect x="606" y="19" width="1" height="1" fill="#c4c4c4"/>
<rect x="606" y="414" width="1" height="1" fill="#c4c4c4"/>
<rect x="621" y="19" width="1" height="1" fill="#c4c4c4"/>
<rect x="621" y="414" width="1" height="1" fill="#c4c4c4"/>
<rect x="636" y="19" width="1" height="1" fill="#c4c4c4"/>
<rect x="636" y="414" width="1" height="1" fill="#c4c4c4"/>
<rect x="651" y="19" width="1" height="1" fill="#c4c4c4"/>
<rect x="651" y="414" width="1" height="1" fill="#c4c4c4"/>
<rect x="666" y="19" width="1" height="1" fill="#c4c4c4"/>
<rect x="666" y="414" width="1" height="1" fill="#c4c4c4"/>
<rect x="681" y="19" width="1" height="1" fill="#c4c4c4"/>
<rect x="681" y="414" width="1" height="1" fill="#c4c4c4"/>
<rect x="696" y="19" width="1" height="1" fill="#c4c4c4"/>
<rect x="696" y="414" width="1" height="1" fill="#c4c4c4"/>
<rect x="711" y="19" width="1" height="1" fill="#c4c4c4"/>
<rect x="711" y="414" width="1" height="1" fill="#c4c4c4"/>
<rect x="726" y="19" width="1" height="1" fill="#c4c4c4"/>
<rect x="726" y="414" width="1" height="1" fill="#c4c4c4"/>
<rect x="741" y="19" width="1" height="1" fill="#c4c4c4"/>
<rect x="741" y="414" width="1" height="1" fill="#c4c4c4"/>
<rect x="756" y="19" width="1" height="1" fill="#c4c4c4"/>
<rect x="756" y="414" width="1" height="1" fill="#c4c4c4"/>
<rect x="23" y="27" width="1" height="1" fill="#c4c4c4"/>
<rect x="768" y="27" width="1" height="1" fill="#c4c4c4"/>
<rect x="23" y="37" width="1" height="1" fill="#c4c4c4"/>
<rect x="768" y="37" width="1" height="1" fill="#c4c4c4"/>
<rect x="23" y="47" width="1" height="1" fill="#c4c4c4"/>
<rect x="768" y="47" width="1" height="1" fill="#c4c4c4"/>
<rect x="23" y="57" width="1" height="1" fill="#c4c4c4"/>
<rect x="768" y="57" width="1" height="1" fill="#c4c4c4"/>
<rect x="23" y="67" width="1" height="1" fill="#c4c4c4"/>
<rect x="768" y="67" width="1" height="1" fill="#c4c4c4"/>
<rect x="23" y="77" width="1" height="1" fill="#c4c4c4"/>
<rect x="768" y="77" width="1" height="1" fill="#c4c4c4"/>
<rect x="23" y="87" width="1" height="1" fill="#c4c4c4"/>
<rect x="768" y="87" width="1" height="1" fill="#c4c4c4"/>
<rect x="23" y="97" width="1" height="1" fill="#c4c4c4"/>
<rect x="768" y="97" width="1" height="1" fill="#c4c4c4"/>
<rect x="23" y="107" width="1" height="1" fill="#c4c4c4"/>
<rect x="768" y="107" width="1" height="1" fill="#c4c4c4"/>
<rect x="23" y="117" width="1" height="1" fill="#c4c4c4"/>
<rect x="768" y="117" width="1" height="1" fill="#c4c4c4"/>
<rect x="23" y="127" width="1" height="1" fill="#c4c4c4"/>
<rect x="768" y="127" width="1" height="1" fill="#c4c4c4"/>
<rect x="23" y="137" width="1" height="1" fill="#c4c4c4"/>
<rect x="768" y="137" width="1" height="1" fill="#c4c4c4"/>
<rect x="23" y="147" width="1" height="1" fill="#c4c4c4"/>
<rect x="768" y="147" width="1" height="1" fill="#c4c4c4"/>
<rect x="23" y="157" width="1" height="1" fill="#c4c4c4"/>
<rect x="768" y="157" width="1" height="1" fill="#c4c4c4"/>
<rect x="23" y="167" width="1" height="1" fill="#c4c4c4"/>
<rect x="768" y="167" width="1" height="1" fill="#c4c4c4"/>
<rect x="23" y="177" width="1" height="1" fill="#c4c4c4"/>
<rect x="768" y="177" width="1" height="1" fill="#c4c4c4"/>
<rect x="23" y="187" width="1" height="1" fill="#c4c4c4"/>
<rect x="768" y="187" width="1" height="1" fill="#c4c4c4"/>
<rect x="23" y="197" width="1" height="1" fill="#c4c4c4"/>
<rect x="768" y="197" width="1" height="1" fill="#c4c4c4"/>
<rect x="23" y="207" width="1" height="1" fill="#c4c4c4"/>
<rect x="768" y="207" width="1" height="1" fill="#c4c4c4"/>
<rect x="23" y="217" width="1" height="1" fill="#c4c4c4"/>
<rect x="768" y="217" width="1" height="1" fill="#c4c4c4"/>
<rect x="23" y="227" width="1" height="1" fill="#c4c4c4"/>
<rect x="768" y="227" width="1" height="1" fill="#c4c4c4"/>
<rect x="23" y="237" width="1" height="1" fill="#c4c4c4"/>
<rect x="768" y="237" width="1" height="1" fill="#c4c4c4"/>
<rect x="23" y="247" width="1" height="1" fill="#c4c4c4"/>
<rect x="768" y="247" width="1" height="1" fill="#c4c4c4"/>
<rect x="23" y="257" width="1" height="1" fill="#c4c4c4"/>
<rect x="768" y="257" width="1" height="1" fill="#c4c4c4"/>
<rect x="23" y="267" width="1" height="1" fill="#c4c4c4"/>
<rect x="768" y="267" width="1" height="1" fill="#c4c4c4"/>
<rect x="23" y="277" width="1" height="1" fill="#c4c4c4"/>
<rect x="768" y="277" width="1" height="1" fill="#c4c4c4"/>
<rect x="23" y="287" width="1" height="1" fill="#c4c4c4"/>
<rect x="768" y="287" width="1" height="1" fill="#c4c4c4"/>
<rect x="23" y="297" width="1" height="1" fill="#c4c4c4"/>
<rect x="768" y="297" width="1" height="1" fill="#c4c4c4"/>
<rect x="23" y="307" width="1" height="1" fill="#c4c4c4"/>
<rect x="768" y="307" width="1" height="1" fill="#c4c4c4"/>
<rect x="23" y="317" width="1" height="1" fill="#c4c4c4"/>
<rect x="768" y="317" width="1" height="1" fill="#c4c4c4"/>
<rect x="23" y="327" width="1" height="1" fill="#c4c4c4"/>
<rect x="768" y="327" width="1" height="1" fill="#c4c4c4"/>
<rect x="23" y="337" width="1" height="1" fill="#c4c4c4"/>
<rect x="768" y="337" width="1" height="1" fill="#c4c4c4"/>
<rect x="23" y="347" width="1" height="1" fill="#c4c4c4"/>
<rect x="768" y="347" width="1" height="1" fill="#c4c4c4"/>
<rect x="23" y="357" width="1" height="1" fill="#c4c4c4"/>
<rect x="768" y="357" width="1" height="1" fill="#c4c4c4"/>
<rect x="23" y="367" width="1" height="1" fill="#c4c4c4"/>
<rect x="768" y="367" width="1" height="1" fill="#c4c4c4"/>
<rect x="23" y="377" width="1" height="1" fill="#c4c4c4"/>
<rect x="768" y="377" width="1" height="1" fill="#c4c4c4"/>
<rect x="23" y="387" width="1" height="1" fill="#c4c4c4"/>
<rect x="768" y="387" width="1" height="1" fill="#c4c4c4"/>
<rect x="23" y="397" width="1" height="1" fill="#c4c4c4"/>
<rect x="768" y="397" width="1" height="1" fill="#c4c4c4"/>
<rect x="23" y="407" width="1" height="1" fill="#c4c4c4"/>
<rect x="768" y="407" width="1" height="1" fill="#c4c4c4"/>
<rect x="36" y="214" width="1" height="1" fill="#b0b0b0"/>
<rect x="36" y="220" width="1" height="1" fill="#b0b0b0"/>
<rect x="51" y="214" width="1" height="1" fill="#b0b0b0"/>
<rect x="51" y="220" width="1" height="1" fill="#b0b0b0"/>
<rect x="66" y="214" width="1" height="1" fill="#b0b0b0"/>
<rect x="66" y="220" width="1" height="1" fill="#b0b0b0"/>
<rect x="81" y="214" width="1" height="1" fill="#b0b0b0"/>
<rect x="81" y="220" width="1" height="1" fill="#b0b0b0"/>
<rect x="96" y="214" width="1" height="1" fill="#b0b0b0"/>
<rect x="96" y="220" width="1" height="1" fill="#b0b0b0"/>
<rect x="111" y="214" width="1" height="1" fill="#b0b0b0"/>
<rect x="111" y="220" width="1" height="1" fill="#b0b0b0"/>
<rect x="126" y="214" width="1" height="1" fill="#b0b0b0"/>
<rect x="126" y="220" width="1" height="1" fill="#b0b0b0"/>
<rect x="141" y="214" width="1" height="1" fill="#b0b0b0"/>
<rect x="141" y="220" width="1" height="1" fill="#b0b0b0"/>
<rect x="156" y="214" width="1" height="1" fill="#b0b0b0"/>
<rect x="156" y="220" width="1" height="1" fill="#b0b0b0"/>
<rect x="171" y="214" width="1" height="1" fill="#b0b0b0"/>
<rect x="171" y="220" width="1" height="1" fill="#b0b0b0"/>
<rect x="186" y="214" width="1" height="1" fill="#b0b0b0"/>
<rect x="186" y="220" width="1" height="1" fill="#b0b0b0"/>
<rect x="201" y="214" width="1" height="1" fill="#b0b0b0"/>
<rect x="201" y="220" width="1" height="1" fill="#b0b0b0"/>
<rect x="216" y="214" width="1" height="1" fill="#b0b0b0"/>
<rect x="216" y="220" width="1" height="1" fill="#b0b0b0"/>
<rect x="231" y="214" width="1" height="1" fill="#b0b0b0"/>
<rect x="231" y="220" width="1" height="1" fill="#b0b0b0"/>
<rect x="246" y="214" width="1" height="1" fill="#b0b0b0"/>
<rect x="246" y="220" width="1" height="1" fill="#b0b0b0"/>
<rect x="261" y="214" width="1" height="1" fill="#b0b0b0"/>
<rect x="261" y="220" width="1" height="1" fill="#b0b0b0"/>
<rect x="276" y="214" width="1" height="1" fill="#b0b0b0"/>
<rect x="276" y="220" width="1" height="1" fill="#b0b0b0"/>
<rect x="291" y="214" width="1" height="1" fill="#b0b0b0"/>
<rect x="291" y="220" width="1" height="1" fill="#b0b0b0"/>
<rect x="306" y="214" width="1" height="1" fill="#b0b0b0"/>
<rect x="306" y="220" width="1" height="1" fill="#b0b0b0"/>
<rect x="321" y="214" width="1" height="1" fill="#b0b0b0"/>
<rect x="321" y="220" width="1" height="1" fill="#b0b0b0"/>
<rect x="336" y="214" width="1" height="1" fill="#b0b0b0"/>
<rect x="336" y="220" width="1" height="1" fill="#b0b0b0"/>
<rect x="351" y="214" width="1" height="1" fill="#b0b0b0"/>
<rect x="351" y="220" width="1" height="1" fill="#b0b0b0"/>
<rect x="366" y="214" width="1" height="1" fill="#b0b0b0"/>
<rect x="366" y="220" width="1" height="1" fill="#b0b0b0"/>
<rect x="381" y="214" width="1" height="1" fill="#b0b0b0"/>
<rect x="381" y="220" width="1" height="1" fill="#b0b0b0"/>
<rect x="396" y="214" width="1" height="1" fill="#b0b0b0"/>
<rect x="396" y="220" width="1" height="1" fill="#b0b0b0"/>
<rect x="411" y="214" width="1" height="1" fill="#b0b0b0"/>
<rect x="411" y="220" width="1" height="1" fill="#b0b0b0"/>
<rect x="426" y="214" width="1" height="1" fill="#b0b0b0"/>
<rect x="426" y="220" width="1" height="1" fill="#b0b0b0"/>
<rect x="441" y="214" width="1" height="1" fill="#b0b0b0"/>
<rect x="441" y="220" width="1" height="1" fill="#b0b0b0"/>
<rect x="456" y="214" width="1" height="1" fill="#b0b0b0"/>
<rect x="456" y="220" width="1" height="1" fill="#b0b0b0"/>
<rect x="471" y="214" width="1" height="1" fill="#b0b0b0"/>
<rect x="471" y="220" width="1" height="1" fill="#b0b0b0"/>
<rect x="486" y="214" width="1" height="1" fill="#b0b0b0"/>
<rect x="486" y="220" width="1" height="1" fill="#b0b0b0"/>
<rect x="501" y="214" width="1" height="1" fill="#b0b0b0"/>
<rect x="501" y="220" width="1" height="1" fill="#b0b0b0"/>
<rect x="516" y="214" width="1" height="1" fill="#b0b0b0"/>
<rect x="516" y="220" width="1" height="1" fill="#b0b0b0"/>
<rect x="531" y="214" width="1" height="1" fill="#b0b0b0"/>
<rect x="531" y="220" width="1" height="1" fill="#b0b0b0"/>
<rect x="546" y="214" width="1" height="1" fill="#b0b0b0"/>
<rect x="546" y="220" width="1" height="1" fill="#b0b0b0"/>
<rect x="561" y="214" width="1" height="1" fill="#b0b0b0"/>
<rect x="561" y="220" width="1" height="1" fill="#b0b0b0"/>
<rect x="576" y="214" width="1" height="1" fill="#b0b0b0"/>
<rect x="576" y="220" width="1" height="1" fill="#b0b0b0"/>
<rect x="591" y="214" width="1" height="1" fill="#b0b0b0"/>
<rect x="591" y="220" width="1" height="1" fill="#b0b0b0"/>
<rect x="606" y="214" width="1" height="1" fill="#b0b0b0"/>
<rect x="606" y="220" width="1" height="1" fill="#b0b0b0"/>
<rect x="621" y="214" width="1" height="1" fill="#b0b0b0"/>
<rect x="621" y="220" width="1" height="1" fill="#b0b0b0"/>
<rect x="636" y="214" width="1" height="1" fill="#b0b0b0"/>
<rect x="636" y="220" width="1" height="1" fill="#b0b0b0"/>
<rect x="651" y="214" width="1" height="1" fill="#b0b0b0"/>
<rect x="651" y="220" width="1" height="1" fill="#b0b0b0"/>
<rect x="666" y="214" width="1" height="1" fill="#b0b0b0"/>
<rect x="666" y="220" width="1" height="1" fill="#b0b0b0"/>
<rect x="681" y="214" width="1" height="1" fill="#b0b0b0"/>
<rect x="681" y="220" width="1" height="1" fill="#b0b0b0"/>
<rect x="696" y="214" width="1" height="1" fill="#b0b0b0"/>
<rect x="696" y="220" width="1" height="1" fill="#b0b0b0"/>
<rect x="711" y="214" width="1" height="1" fill="#b0b0b0"/>
<rect x="711" y="220" width="1" height="1" fill="#b0b0b0"/>
<rect x="726" y="214" width="1" height="1" fill="#b0b0b0"/>
<rect x="726" y="220" width="1" height="1" fill="#b0b0b0"/>
<rect x="741" y="214" width="1" height="1" fill="#b0b0b0"/>
<rect x="741" y="220" width="1" height="1" fill="#b0b0b0"/>
<rect x="756" y="214" width="1" height="1" fill="#b0b0b0"/>
<rect x="756" y="220" width="1" height="1" fill="#b0b0b0"/>
<rect x="393" y="27" width="1" height="1" fill="#b0b0b0"/>
<rect x="399" y="27" width="1" height="1" fill="#b0b0b0"/>
<rect x="393" y="37" width="1" height="1" fill="#b0b0b0"/>
<rect x="399" y="37" width="1" height="1" fill="#b0b0b0"/>
<rect x="393" y="47" width="1" height="1" fill="#b0b0b0"/>
<rect x="399" y="47" width="1" height="1" fill="#b0b0b0"/>
<rect x="393" y="57" width="1" height="1" fill="#b0b0b0"/>
<rect x="399" y="57" width="1" height="1" fill="#b0b0b0"/>
<rect x="393" y="67" width="1" height="1" fill="#b0b0b0"/>
<rect x="399" y="67" width="1" height="1" fill="#b0b0b0"/>
<rect x="393" y="77" width="1" height="1" fill="#b0b0b0"/>
<rect x="399" y="77" width="1" height="1" fill="#b0b0b0"/>
<rect x="393" y="87" width="1" height="1" fill="#b0b0b0"/>
<rect x="399" y="87" width="1" height="1" fill="#b0b0b0"/>
<rect x="393" y="97" width="1" height="1" fill="#b0b0b0"/>
<rect x="399" y="97" width="1" height="1" fill="#b0b0b0"/>
<rect x="393" y="107" width="1" height="1" fill="#b0b0b0"/>
<rect x="399" y="107" width="1" height="1" fill="#b0b0b0"/>
<rect x="393" y="117" width="1" height="1" fill="#b0b0b0"/>
<rect x="399" y="117" width="1" height="1" fill="#b0b0b0"/>
<rect x="393" y="127" width="1" height="1" fill="#b0b0b0"/>
<rect x="399" y="127" width="1" height="1" fill="#b0b0b0"/>
<rect x="393" y="137" width="1" height="1" fill="#b0b0b0"/>
<rect x="399" y="137" width="1" height="1" fill="#b0b0b0"/>
<rect x="393" y="147" width="1" height="1" fill="#b0b0b0"/>
<rect x="399" y="147" width="1" height="1" fill="#b0b0b0"/>
<rect x="393" y="157" width="1" height="1" fill="#b0b0b0"/>
<rect x="399" y="157" width="1" height="1" fill="#b0b0b0"/>
<rect x="393" y="167" width="1" height="1" fill="#b0b0b0"/>
<rect x="399" y="167" width="1" height="1" fill="#b0b0b0"/>
<rect x="393" y="177" width="1" height="1" fill="#b0b0b0"/>
<rect x="399" y="177" width="1" height="1" fill="#b0b0b0"/>
<rect x="393" y="187" width="1" height="1" fill="#b0b0b0"/>
<rect x="399" y="187" width="1" height="1" fill="#b0b0b0"/>
<rect x="393" y="197" width="1" height="1" fill="#b0b0b0"/>
<rect x="399" y="197" width="1" height="1" fill="#b0b0b0"/>
<rect x="393" y="207" width="1" height="1" fill="#b0b0b0"/>
<rect x="399" y="207" width="1" height="1" fill="#b0b0b0"/>
<rect x="393" y="217" width="1" height="1" fill="#b0b0b0"/>
<rect x="399" y="217" width="1" height="1" fill="#b0b0b0"/>
<rect x="393" y="227" width="1" height="1" fill="#b0b0b0"/>
<rect x="399" y="227" width="1" height="1" fill="#b0b0b0"/>
<rect x="393" y="237" width="1" height="1" fill="#b0b0b0"/>
<rect x="399" y="237" width="1" height="1" fill="#b0b0b0"/>
<rect x="393" y="247" width="1" height="1" fill="#b0b0b0"/>
<rect x="399" y="247" width="1" height="1" fill="#b0b0b0"/>
<rect x="393" y="257" width="1" height="1" fill="#b0b0b0"/>
<rect x="399" y="257" width="1" height="1" fill="#b0b0b0"/>
<rect x="393" y="267" width="1" height="1" fill="#b0b0b0"/>
<rect x="399" y="267" width="1" height="1" fill="#b0b0b0"/>
<rect x="393" y="277" width="1" height="1" fill="#b0b0b0"/>
<rect x="399" y="277" width="1" height="1" fill="#b0b0b0"/>
<rect x="393" y="287" width="1" height="1" fill="#b0b0b0"/>
<rect x="399" y="287" width="1" height="1" fill="#b0b0b0"/>
<rect x="393" y="297" width="1" height="1" fill="#b0b0b0"/>
<rect x="399" y="297" width="1" height="1" fill="#b0b0b0"/>
<rect x="393" y="307" width="1" height="1" fill="#b0b0b0"/>
<rect x="399" y="307" width="1" height="1" fill="#b0b0b0"/>
<rect x="393" y="317" width="1" height="1" fill="#b0b0b0"/>
<rect x="399" y="317" width="1" height="1" fill="#b0b0b0"/>
<rect x="393" y="327" width="1" height="1" fill="#b0b0b0"/>
<rect x="399" y="327" width="1" height="1" fill="#b0b0b0"/>
<rect x="393" y="337" width="1" height="1" fill="#b0b0b0"/>
<rect x="399" y="337" width="1" height="1" fill="#b0b0b0"/>
<rect x="393" y="347" width="1" height="1" fill="#b0b0b0"/>
<rect x="399" y="347" width="1" height="1" fill="#b0b0b0"/>
<rect x="393" y="357" width="1" height="1" fill="#b0b0b0"/>
<rect x="399" y="357" width="1" height="1" fill="#b0b0b0"/>
<rect x="393" y="367" width="1" height="1" fill="#b0b0b0"/>
<rect x="399" y="367" width="1" height="1" fill="#b0b0b0"/>
<rect x="393" y="377" width="1" height="1" fill="#b0b0b0"/>
<rect x="399" y="377" width="1" height="1" fill="#b0b0b0"/>
<rect x="393" y="387" width="1" height="1" fill="#b0b0b0"/>
<rect x="399" y="387" width="1" height="1" fill="#b0b0b0"/>
<rect x="393" y="397" width="1" height="1" fill="#b0b0b0"/>
<rect x="399" y="397" width="1" height="1" fill="#b0b0b0"/>
<rect x="393" y="407" width="1" height="1" fill="#b0b0b0"/>
<rect x="399" y="407" width="1" height="1" fill="#b0b0b0"/>
<rect x="394" y="67" width="1" height="1" fill="#c4c4c4"/>
<rect x="398" y="67" width="1" height="1" fill="#c4c4c4"/>
<rect x="392" y="67" width="1" height="1" fill="#c4c4c4"/>
<rect x="400" y="67" width="1" height="1" fill="#c4c4c4"/>
<rect x="390" y="67" width="1" height="1" fill="#c4c4c4"/>
<rect x="402" y="67" width="1" height="1" fill="#c4c4c4"/>
<rect x="23" y="67" width="1" height="1" fill="#c4c4c4"/>
<rect x="25" y="67" width="1" height="1" fill="#c4c4c4"/>
<rect x="27" y="67" width="1" height="1" fill="#c4c4c4"/>
<rect x="768" y="67" width="1" height="1" fill="#c4c4c4"/>
<rect x="766" y="67" width="1" height="1" fill="#c4c4c4"/>
<rect x="764" y="67" width="1" height="1" fill="#c4c4c4"/>
<rect x="394" y="117" width="1" height="1" fill="#c4c4c4"/>
<rect x="398" y="117" width="1" height="1" fill="#c4c4c4"/>
<rect x="392" y="117" width="1" height="1" fill="#c4c4c4"/>
<rect x="400" y="117" width="1" height="1" fill="#c4c4c4"/>
<rect x="390" y="117" width="1" height="1" fill="#c4c4c4"/>
<rect x="402" y="117" width="1" height="1" fill="#c4c4c4"/>
<rect x="23" y="117" width="1" height="1" fill="#c4c4c4"/>
<rect x="25" y="117" width="1" height="1" fill="#c4c4c4"/>
<rect x="27" y="117" width="1" height="1" fill="#c4c4c4"/>
<rect x="768" y="117" width="1" height="1" fill="#c4c4c4"/>
<rect x="766" y="117" width="1" height="1" fill="#c4c4c4"/>
<rect x="764" y="117" width="1" height="1" fill="#c4c4c4"/>
<rect x="394" y="167" width="1" height="1" fill="#c4c4c4"/>
<rect x="398" y="167" width="1" height="1" fill="#c4c4c4"/>
<rect x="392" y="167" width="1" height="1" fill="#c4c4c4"/>
<rect x="400" y="167" width="1" height="1" fill="#c4c4c4"/>
<rect x="390" y="167" width="1" height="1" fill="#c4c4c4"/>
<rect x="402" y="167" width="1" height="1" fill="#c4c4c4"/>
<rect x="23" y="167" width="1" height="1" fill="#c4c4c4"/>
<rect x="25" y="167" width="1" height="1" fill="#c4c4c4"/>
<rect x="27" y="167" width="1" height="1" fill="#c4c4c4"/>
<rect x="768" y="167" width="1" height="1" fill="#c4c4c4"/>
<rect x="766" y="167" width="1" height="1" fill="#c4c4c4"/>
<rect x="764" y="167" width="1" height="1" fill="#c4c4c4"/>
<rect x="394" y="267" width="1" height="1" fill="#c4c4c4"/>
<rect x="398" y="267" width="1" height="1" fill="#c4c4c4"/>
<rect x="392" y="267" width="1" height="1" fill="#c4c4c4"/>
<rect x="400" y="267" width="1" height="1" fill="#c4c4c4"/>
<rect x="390" y="267" width="1" height="1" fill="#c4c4c4"/>
<rect x="402" y="267" width="1" height="1" fill="#c4c4c4"/>
<rect x="23" y="267" width="1" height="1" fill="#c4c4c4"/>
<rect x="25" y="267" width="1" height="1" fill="#c4c4c4"/>
<rect x="27" y="267" width="1" height="1" fill="#c4c4c4"/>
<rect x="768" y="267" width="1" height="1" fill="#c4c4c4"/>
<rect x="766" y="267" width="1" height="1" fill="#c4c4c4"/>
<rect x="764" y="267" width="1" height="1" fill="#c4c4c4"/>
<rect x="394" y="317" width="1" height="1" fill="#c4c4c4"/>
<rect x="398" y="317" width="1" height="1" fill="#c4c4c4"/>
<rect x="392" y="317" width="1" height="1" fill="#c4c4c4"/>
<rect x="400" y="317" width="1" height="1" fill="#c4c4c4"/>
<rect x="390" y="317" width="1" height="1" fill="#c4c4c4"/>
<rect x="402" y="317" width="1" height="1" fill="#c4c4c4"/>
<rect x="23" y="317" width="1" height="1" fill="#c4c4c4"/>
<rect x="25" y="317" width="1" height="1" fill="#c4c4c4"/>
<rect x="27" y="317" width="1" height="1" fill="#c4c4c4"/>
<rect x="768" y="317" width="1" height="1" fill="#c4c4c4"/>
<rect x="766" y="317" width="1" height="1" fill="#c4c4c4"/>
<rect x="764" y="317" width="1" height="1" fill="#c4c4c4"/>
<rect x="394" y="367" width="1" height="1" fill="#c4c4c4"/>
<rect x="398" y="367" width="1" height="1" fill="#c4c4c4"/>
<rect x="392" y="367" width="1" height="1" fill="#c4c4c4"/>
<rect x="400" y="367" width="1" height="1" fill="#c4c4c4"/>
<rect x="390" y="367" width="1" height="1" fill="#c4c4c4"/>
<rect x="402" y="367" width="1" height="1" fill="#c4c4c4"/>
<rect x="23" y="367" width="1" height="1" fill="#c4c4c4"/>
<rect x="25" y="367" width="1" height="1" fill="#c4c4c4"/>
<rect x="27" y="367" width="1" height="1" fill="#c4c4c4"/>
<rect x="768" y="367" width="1" height="1" fill="#c4c4c4"/>
<rect x="766" y="367" width="1" height="1" fill="#c4c4c4"/>
<rect x="764" y="367" width="1" height="1" fill="#c4c4c4"/>
<rect x="96" y="215" width="1" height="1" fill="#c4c4c4"/>
<rect x="96" y="219" width="1" height="1" fill="#c4c4c4"/>
<rect x="96" y="213" width="1" height="1" fill="#c4c4c4"/>
<rect x="96" y="221" width="1" height="1" fill="#c4c4c4"/>
<rect x="96" y="211" width="1" height="1" fill="#c4c4c4"/>
<rect x="96" y="223" width="1" height="1" fill="#c4c4c4"/>
<rect x="96" y="19" width="1" height="1" fill="#c4c4c4"/>
<rect x="96" y="21" width="1" height="1" fill="#c4c4c4"/>
<rect x="96" y="23" width="1" height="1" fill="#c4c4c4"/>
<rect x="96" y="414" width="1" height="1" fill="#c4c4c4"/>
<rect x="96" y="412" width="1" height="1" fill="#c4c4c4"/>
<rect x="96" y="410" width="1" height="1" fill="#c4c4c4"/>
<rect x="171" y="215" width="1" height="1" fill="#c4c4c4"/>
<rect x="171" y="219" width="1" height="1" fill="#c4c4c4"/>
<rect x="171" y="213" width="1" height="1" fill="#c4c4c4"/>
<rect x="171" y="221" width="1" height="1" fill="#c4c4c4"/>
<rect x="171" y="211" width="1" height="1" fill="#c4c4c4"/>
<rect x="171" y="223" width="1" height="1" fill="#c4c4c4"/>
<rect x="171" y="19" width="1" height="1" fill="#c4c4c4"/>
<rect x="171" y="21" width="1" height="1" fill="#c4c4c4"/>
<rect x="171" y="23" width="1" height="1" fill="#c4c4c4"/>
<rect x="171" y="414" width="1" height="1" fill="#c4c4c4"/>
<rect x="171" y="412" width="1" height="1" fill="#c4c4c4"/>
<rect x="171" y="410" width="1" height="1" fill="#c4c4c4"/>
<rect x="246" y="215" width="1" height="1" fill="#c4c4c4"/>
<rect x="246" y="219" width="1" height="1" fill="#c4c4c4"/>
<rect x="246" y="213" width="1" height="1" fill="#c4c4c4"/>
<rect x="246" y="221" width="1" height="1" fill="#c4c4c4"/>
<rect x="246" y="211" width="1" height="1" fill="#c4c4c4"/>
<rect x="246" y="223" width="1" height="1" fill="#c4c4c4"/>
<rect x="246" y="19" width="1" height="1" fill="#c4c4c4"/>
<rect x="246" y="21" width="1" height="1" fill="#c4c4c4"/>
<rect x="246" y="23" width="1" height="1" fill="#c4c4c4"/>
<rect x="246" y="414" width="1" height="1" fill="#c4c4c4"/>
<rect x="246" y="412" width="1" height="1" fill="#c4c4c4"/>
<rect x="246" y="410" width="1" height="1" fill="#c4c4c4"/>
<rect x="321" y="215" width="1" height="1" fill="#c4c4c4"/>
<rect x="321" y="219" width="1" height="1" fill="#c4c4c4"/>
<rect x="321" y="213" width="1" height="1" fill="#c4c4c4"/>
<rect x="321" y="221" width="1" height="1" fill="#c4c4c4"/>
<rect x="321" y="211" width="1" height="1" fill="#c4c4c4"/>
<rect x="321" y="223" width="1" height="1" fill="#c4c4c4"/>
<rect x="321" y="19" width="1" height="1" fill="#c4c4c4"/>
<rect x="321" y="21" width="1" height="1" fill="#c4c4c4"/>
<rect x="321" y="23" width="1" height="1" fill="#c4c4c4"/>
<rect x="321" y="414" width="1" height="1" fill="#c4c4c4"/>
<rect x="321" y="412" width="1" height="1" fill="#c4c4c4"/>
<rect x="321" y="410" width="1" height="1" fill="#c4c4c4"/>
<rect x="471" y="215" width="1" height="1" fill="#c4c4c4"/>
<rect x="471" y="219" width="1" height="1" fill="#c4c4c4"/>
<rect x="471" y="213" width="1" height="1" fill="#c4c4c4"/>
<rect x="471" y="221" width="1" height="1" fill="#c4c4c4"/>
<rect x="471" y="211" width="1" height="1" fill="#c4c4c4"/>
<rect x="471" y="223" width="1" height="1" fill="#c4c4c4"/>
<rect x="471" y="19" width="1" height="1" fill="#c4c4c4"/>
<rect x="471" y="21" width="1" height="1" fill="#c4c4c4"/>
<rect x="471" y="23" width="1" height="1" fill="#c4c4c4"/>
<rect x="471" y="414" width="1" height="1" fill="#c4c4c4"/>
<rect x="471" y="412" width="1" height="1" fill="#c4c4c4"/>
<rect x="471" y="410" width="1" height="1" fill="#c4c4c4"/>
<rect x="546" y="215" width="1" height="1" fill="#c4c4c4"/>
<rect x="546" y="219" width="1" height="1" fill="#c4c4c4"/>
<rect x="546" y="213" width="1" height="1" fill="#c4c4c4"/>
<rect x="546" y="221" width="1" height="1" fill="#c4c4c4"/>
<rect x="546" y="211" width="1" height="1" fill="#c4c4c4"/>
<rect x="546" y="223" width="1" height="1" fill="#c4c4c4"/>
<rect x="546" y="19" width="1" height="1" fill="#c4c4c4"/>
<rect x="546" y="21" width="1" height="1" fill="#c4c4c4"/>
<rect x="546" y="23" width="1" height="1" fill="#c4c4c4"/>
<rect x="546" y="414" width="1" height="1" fill="#c4c4c4"/>
<rect x="546" y="412" width="1" height="1" fill="#c4c4c4"/>
<rect x="546" y="410" width="1" height="1" fill="#c4c4c4"/>
<rect x="621" y="215" width="1" height="1" fill="#c4c4c4"/>
<rect x="621" y="219" width="1" height="1" fill="#c4c4c4"/>
<rect x="621" y="213" width="1" height="1" fill="#c4c4c4"/>
<rect x="621" y="221" width="1" height="1" fill="#c4c4c4"/>
<rect x="621" y="211" width="1" height="1" fill="#c4c4c4"/>
<rect x="621" y="223" width="1" height="1" fill="#c4c4c4"/>
<rect x="621" y="19" width="1" height="1" fill="#c4c4c4"/>
<rect x="621" y="21" width="1" height="1" fill="#c4c4c4"/>
<rect x="621" y="23" width="1" height="1" fill="#c4c4c4"/>
<rect x="621" y="414" width="1" height="1" fill="#c4c4c4"/>
<rect x="621" y="412" width="1" height="1" fill="#c4c4c4"/>
<rect x="621" y="410" width="1" height="1" fill="#c4c4c4"/>
<rect x="696" y="215" width="1" height="1" fill="#c4c4c4"/>
<rect x="696" y="219" width="1" height="1" fill="#c4c4c4"/>
<rect x="696" y="213" width="1" height="1" fill="#c4c4c4"/>
<rect x="696" y="221" width="1" height="1" fill="#c4c4c4"/>
<rect x="696" y="211" width="1" height="1" fill="#c4c4c4"/>
<rect x="696" y="223" width="1" height="1" fill="#c4c4c4"/>
<rect x="696" y="19" width="1" height="1" fill="#c4c4c4"/>
<rect x="696" y="21" width="1" height="1" fill="#c4c4c4"/>
<rect x="696" y="23" width="1" height="1" fill="#c4c4c4"/>
<rect x="696" y="414" width="1" height="1" fill="#c4c4c4"/>
<rect x="696" y="412" width="1" height="1" fill="#c4c4c4"/>
<rect x="696" y="410" width="1" height="1" fill="#c4c4c4"/>
<rect x="21" y="217" width="750" height="1" fill="#c8c8c8"/>
<rect x="396" y="17" width="1" height="400" fill="#c8c8c8"/>
<defs><clipPath id="gc"><rect x="21" y="17" width="750" height="400"/></clipPath></defs>
<g shape-rendering="auto" clip-path="url(#gc)">
<path d="M-189.10,56.80 L-155.00,139.80 L-63.30,56.80 L-29.20,139.80 L62.50,56.80 L96.60,139.80 L188.30,56.80 L222.40,139.80 L314.10,56.80 L348.20,139.80 L439.90,56.80 L474.00,139.80 L565.70,56.80 L599.80,139.80 L691.50,56.80 L725.60,139.80 L817.30,56.80 L851.40,139.80 L943.10,56.80 L977.20,139.80" fill="none" stroke="#fa0afa" stroke-width="4.6" stroke-linejoin="miter" stroke-miterlimit="10"/>
<rect x="21.00" y="89.69" width="1.00" height="9.41" fill="#fa0afa"/>
<rect x="22.00" y="88.71" width="1.00" height="9.16" fill="#fa0afa"/>
<rect x="23.00" y="88.37" width="1.00" height="7.51" fill="#fa0afa"/>
<rect x="24.00" y="87.36" width="1.00" height="7.86" fill="#fa0afa"/>
<rect x="25.00" y="85.59" width="1.00" height="10.84" fill="#fa0afa"/>
<rect x="26.00" y="84.27" width="1.00" height="8.99" fill="#fa0afa"/>
<rect x="27.00" y="84.54" width="1.00" height="8.65" fill="#fa0afa"/>
<rect x="28.00" y="82.12" width="1.00" height="9.17" fill="#fa0afa"/>
<rect x="29.00" y="82.26" width="1.00" height="8.61" fill="#fa0afa"/>
<rect x="30.00" y="81.59" width="1.00" height="9.28" fill="#fa0afa"/>
<rect x="31.00" y="80.17" width="1.00" height="9.29" fill="#fa0afa"/>
<rect x="32.00" y="78.68" width="1.00" height="10.74" fill="#fa0afa"/>
<rect x="33.00" y="77.66" width="1.00" height="9.92" fill="#fa0afa"/>
<rect x="34.00" y="77.45" width="1.00" height="9.95" fill="#fa0afa"/>
<rect x="35.00" y="76.51" width="1.00" height="9.43" fill="#fa0afa"/>
<rect x="36.00" y="74.94" width="1.00" height="11.45" fill="#fa0afa"/>
<rect x="37.00" y="74.60" width="1.00" height="10.32" fill="#fa0afa"/>
<rect x="38.00" y="73.00" width="1.00" height="10.40" fill="#fa0afa"/>
<rect x="39.00" y="73.80" width="1.00" height="7.53" fill="#fa0afa"/>
<rect x="40.00" y="72.64" width="1.00" height="9.59" fill="#fa0afa"/>
<rect x="41.00" y="71.16" width="1.00" height="9.92" fill="#fa0afa"/>
<rect x="42.00" y="70.77" width="1.00" height="8.52" fill="#fa0afa"/>
<rect x="43.00" y="68.58" width="1.00" height="9.31" fill="#fa0afa"/>
<rect x="44.00" y="69.05" width="1.00" height="8.56" fill="#fa0afa"/>
<rect x="45.00" y="68.58" width="1.00" height="8.00" fill="#fa0afa"/>
<rect x="46.00" y="65.87" width="1.00" height="10.32" fill="#fa0afa"/>
<rect x="47.00" y="65.49" width="1.00" height="8.59" fill="#fa0afa"/>
<rect x="48.00" y="64.21" width="1.00" height="10.38" fill="#fa0afa"/>
<rect x="49.00" y="64.17" width="1.00" height="9.20" fill="#fa0afa"/>
<rect x="50.00" y="63.25" width="1.00" height="8.65" fill="#fa0afa"/>
<rect x="51.00" y="61.15" width="1.00" height="9.90" fill="#fa0afa"/>
<rect x="52.00" y="61.97" width="1.00" height="7.96" fill="#fa0afa"/>
<rect x="53.00" y="61.11" width="1.00" height="9.05" fill="#fa0afa"/>
<rect x="54.00" y="58.51" width="1.00" height="9.30" fill="#fa0afa"/>
<rect x="55.00" y="56.03" width="1.00" height="11.01" fill="#fa0afa"/>
<rect x="56.00" y="57.06" width="1.00" height="9.80" fill="#fa0afa"/>
<rect x="57.00" y="56.09" width="1.00" height="10.16" fill="#fa0afa"/>
<rect x="58.00" y="56.50" width="1.00" height="8.98" fill="#fa0afa"/>
<rect x="59.00" y="55.29" width="1.00" height="8.25" fill="#fa0afa"/>
<rect x="60.00" y="53.39" width="1.00" height="10.35" fill="#fa0afa"/>
<rect x="61.00" y="53.67" width="1.00" height="9.16" fill="#fa0afa"/>
<rect x="97.00" y="134.85" width="1.00" height="8.22" fill="#fa0afa"/>
<rect x="98.00" y="133.63" width="1.00" height="9.83" fill="#fa0afa"/>
<rect x="99.00" y="132.88" width="1.00" height="8.31" fill="#fa0afa"/>
<rect x="100.00" y="132.28" width="1.00" height="8.77" fill="#fa0afa"/>
<rect x="101.00" y="130.85" width="1.00" height="10.84" fill="#fa0afa"/>
<rect x="102.00" y="129.13" width="1.00" height="10.41" fill="#fa0afa"/>
<rect x="103.00" y="129.62" width="1.00" height="9.04" fill="#fa0afa"/>
<rect x="104.00" y="127.20" width="1.00" height="9.80" fill="#fa0afa"/>
<rect x="105.00" y="126.77" width="1.00" height="8.90" fill="#fa0afa"/>
<rect x="106.00" y="125.52" width="1.00" height="10.45" fill="#fa0afa"/>
<rect x="107.00" y="124.47" width="1.00" height="10.31" fill="#fa0afa"/>
<rect x="108.00" y="125.18" width="1.00" height="7.48" fill="#fa0afa"/>
<rect x="109.00" y="123.52" width="1.00" height="9.97" fill="#fa0afa"/>
<rect x="110.00" y="122.05" width="1.00" height="9.17" fill="#fa0afa"/>
<rect x="111.00" y="122.26" width="1.00" height="8.77" fill="#fa0afa"/>
<rect x="112.00" y="121.56" width="1.00" height="9.18" fill="#fa0afa"/>
<rect x="113.00" y="119.80" width="1.00" height="10.03" fill="#fa0afa"/>
<rect x="114.00" y="119.05" width="1.00" height="10.32" fill="#fa0afa"/>
<rect x="115.00" y="118.75" width="1.00" height="7.56" fill="#fa0afa"/>
<rect x="116.00" y="117.29" width="1.00" height="9.48" fill="#fa0afa"/>
<rect x="117.00" y="116.30" width="1.00" height="10.58" fill="#fa0afa"/>
<rect x="118.00" y="115.91" width="1.00" height="8.20" fill="#fa0afa"/>
<rect x="119.00" y="114.41" width="1.00" height="9.71" fill="#fa0afa"/>
<rect x="120.00" y="113.40" width="1.00" height="9.32" fill="#fa0afa"/>
<rect x="121.00" y="112.80" width="1.00" height="9.07" fill="#fa0afa"/>
<rect x="122.00" y="111.43" width="1.00" height="10.19" fill="#fa0afa"/>
<rect x="123.00" y="110.79" width="1.00" height="10.06" fill="#fa0afa"/>
<rect x="124.00" y="109.85" width="1.00" height="10.64" fill="#fa0afa"/>
<rect x="125.00" y="108.55" width="1.00" height="10.39" fill="#fa0afa"/>
<rect x="126.00" y="107.88" width="1.00" height="8.73" fill="#fa0afa"/>
<rect x="127.00" y="107.81" width="1.00" height="9.43" fill="#fa0afa"/>
<rect x="128.00" y="105.45" width="1.00" height="10.66" fill="#fa0afa"/>
<rect x="129.00" y="105.44" width="1.00" height="8.82" fill="#fa0afa"/>
<rect x="130.00" y="104.14" width="1.00" height="8.61" fill="#fa0afa"/>
<rect x="131.00" y="104.58" width="1.00" height="7.86" fill="#fa0afa"/>
<rect x="132.00" y="103.58" width="1.00" height="9.19" fill="#fa0afa"/>
<rect x="133.00" y="100.93" width="1.00" height="9.57" fill="#fa0afa"/>
<rect x="134.00" y="101.65" width="1.00" height="8.25" fill="#fa0afa"/>
<rect x="135.00" y="100.50" width="1.00" height="7.98" fill="#fa0afa"/>
<rect x="136.00" y="97.22" width="1.00" height="10.23" fill="#fa0afa"/>
<rect x="137.00" y="99.04" width="1.00" height="9.12" fill="#fa0afa"/>
<rect x="138.00" y="96.32" width="1.00" height="10.78" fill="#fa0afa"/>
<rect x="139.00" y="96.73" width="1.00" height="8.90" fill="#fa0afa"/>
<rect x="140.00" y="96.22" width="1.00" height="9.19" fill="#fa0afa"/>
<rect x="141.00" y="95.46" width="1.00" height="7.68" fill="#fa0afa"/>
<rect x="142.00" y="93.21" width="1.00" height="9.19" fill="#fa0afa"/>
<rect x="143.00" y="93.09" width="1.00" height="9.49" fill="#fa0afa"/>
<rect x="144.00" y="91.80" width="1.00" height="8.61" fill="#fa0afa"/>
<rect x="145.00" y="91.74" width="1.00" height="8.96" fill="#fa0afa"/>
<rect x="146.00" y="89.45" width="1.00" height="9.53" fill="#fa0afa"/>
<rect x="147.00" y="88.26" width="1.00" height="9.72" fill="#fa0afa"/>
<rect x="148.00" y="88.02" width="1.00" height="9.87" fill="#fa0afa"/>
<rect x="149.00" y="88.18" width="1.00" height="8.74" fill="#fa0afa"/>
<rect x="150.00" y="87.25" width="1.00" height="8.96" fill="#fa0afa"/>
<rect x="151.00" y="85.97" width="1.00" height="8.20" fill="#fa0afa"/>
<rect x="152.00" y="85.30" width="1.00" height="8.35" fill="#fa0afa"/>
<rect x="153.00" y="82.85" width="1.00" height="10.09" fill="#fa0afa"/>
<rect x="154.00" y="82.13" width="1.00" height="9.54" fill="#fa0afa"/>
<rect x="155.00" y="81.93" width="1.00" height="9.43" fill="#fa0afa"/>
<rect x="156.00" y="81.28" width="1.00" height="8.66" fill="#fa0afa"/>
<rect x="157.00" y="80.64" width="1.00" height="8.75" fill="#fa0afa"/>
<rect x="158.00" y="78.92" width="1.00" height="9.81" fill="#fa0afa"/>
<rect x="159.00" y="78.65" width="1.00" height="9.69" fill="#fa0afa"/>
<rect x="160.00" y="77.14" width="1.00" height="8.51" fill="#fa0afa"/>
<rect x="161.00" y="76.27" width="1.00" height="9.79" fill="#fa0afa"/>
<rect x="162.00" y="75.56" width="1.00" height="9.15" fill="#fa0afa"/>
<rect x="163.00" y="74.08" width="1.00" height="9.88" fill="#fa0afa"/>
<rect x="164.00" y="72.73" width="1.00" height="9.65" fill="#fa0afa"/>
<rect x="165.00" y="73.64" width="1.00" height="8.99" fill="#fa0afa"/>
<rect x="166.00" y="71.74" width="1.00" height="11.38" fill="#fa0afa"/>
<rect x="167.00" y="70.60" width="1.00" height="9.58" fill="#fa0afa"/>
<rect x="168.00" y="71.00" width="1.00" height="9.62" fill="#fa0afa"/>
<rect x="169.00" y="68.83" width="1.00" height="8.98" fill="#fa0afa"/>
<rect x="170.00" y="68.37" width="1.00" height="8.87" fill="#fa0afa"/>
<rect x="171.00" y="66.95" width="1.00" height="10.55" fill="#fa0afa"/>
<rect x="172.00" y="67.02" width="1.00" height="9.09" fill="#fa0afa"/>
<rect x="173.00" y="66.57" width="1.00" height="7.34" fill="#fa0afa"/>
<rect x="174.00" y="64.38" width="1.00" height="9.80" fill="#fa0afa"/>
<rect x="175.00" y="62.06" width="1.00" height="10.81" fill="#fa0afa"/>
<rect x="176.00" y="60.83" width="1.00" height="12.03" fill="#fa0afa"/>
<rect x="177.00" y="61.14" width="1.00" height="9.89" fill="#fa0afa"/>
<rect x="178.00" y="60.27" width="1.00" height="9.40" fill="#fa0afa"/>
<rect x="179.00" y="60.17" width="1.00" height="10.01" fill="#fa0afa"/>
<rect x="180.00" y="59.29" width="1.00" height="9.85" fill="#fa0afa"/>
<rect x="181.00" y="57.14" width="1.00" height="10.33" fill="#fa0afa"/>
<rect x="182.00" y="57.59" width="1.00" height="8.63" fill="#fa0afa"/>
<rect x="183.00" y="55.32" width="1.00" height="11.02" fill="#fa0afa"/>
<rect x="184.00" y="56.41" width="1.00" height="9.19" fill="#fa0afa"/>
<rect x="185.00" y="55.18" width="1.00" height="8.46" fill="#fa0afa"/>
<rect x="186.00" y="53.71" width="1.00" height="9.00" fill="#fa0afa"/>
<rect x="187.00" y="53.83" width="1.00" height="7.48" fill="#fa0afa"/>
<rect x="222.00" y="134.33" width="1.00" height="9.45" fill="#fa0afa"/>
<rect x="223.00" y="134.84" width="1.00" height="8.27" fill="#fa0afa"/>
<rect x="224.00" y="132.76" width="1.00" height="9.94" fill="#fa0afa"/>
<rect x="225.00" y="130.75" width="1.00" height="11.21" fill="#fa0afa"/>
<rect x="226.00" y="131.06" width="1.00" height="11.74" fill="#fa0afa"/>
<rect x="227.00" y="131.34" width="1.00" height="8.34" fill="#fa0afa"/>
<rect x="228.00" y="129.27" width="1.00" height="10.46" fill="#fa0afa"/>
<rect x="229.00" y="129.20" width="1.00" height="8.83" fill="#fa0afa"/>
<rect x="230.00" y="128.56" width="1.00" height="7.90" fill="#fa0afa"/>
<rect x="231.00" y="127.55" width="1.00" height="9.34" fill="#fa0afa"/>
<rect x="232.00" y="125.78" width="1.00" height="9.70" fill="#fa0afa"/>
<rect x="233.00" y="125.66" width="1.00" height="8.77" fill="#fa0afa"/>
<rect x="234.00" y="124.46" width="1.00" height="8.77" fill="#fa0afa"/>
<rect x="235.00" y="123.70" width="1.00" height="7.96" fill="#fa0afa"/>
<rect x="236.00" y="123.20" width="1.00" height="8.40" fill="#fa0afa"/>
<rect x="237.00" y="122.12" width="1.00" height="8.13" fill="#fa0afa"/>
<rect x="238.00" y="120.78" width="1.00" height="9.86" fill="#fa0afa"/>
<rect x="239.00" y="120.68" width="1.00" height="7.30" fill="#fa0afa"/>
<rect x="240.00" y="117.83" width="1.00" height="10.30" fill="#fa0afa"/>
<rect x="241.00" y="117.34" width="1.00" height="10.39" fill="#fa0afa"/>
<rect x="242.00" y="117.80" width="1.00" height="7.70" fill="#fa0afa"/>
<rect x="243.00" y="115.31" width="1.00" height="10.36" fill="#fa0afa"/>
<rect x="244.00" y="113.65" width="1.00" height="10.79" fill="#fa0afa"/>
<rect x="245.00" y="113.54" width="1.00" height="10.17" fill="#fa0afa"/>
<rect x="246.00" y="113.91" width="1.00" height="9.49" fill="#fa0afa"/>
<rect x="247.00" y="112.48" width="1.00" height="9.30" fill="#fa0afa"/>
<rect x="248.00" y="111.43" width="1.00" height="8.36" fill="#fa0afa"/>
<rect x="249.00" y="109.85" width="1.00" height="10.25" fill="#fa0afa"/>
<rect x="250.00" y="110.32" width="1.00" height="8.12" fill="#fa0afa"/>
<rect x="251.00" y="109.28" width="1.00" height="7.83" fill="#fa0afa"/>
<rect x="252.00" y="108.16" width="1.00" height="8.49" fill="#fa0afa"/>
<rect x="253.00" y="107.62" width="1.00" height="7.70" fill="#fa0afa"/>
<rect x="254.00" y="105.85" width="1.00" height="8.87" fill="#fa0afa"/>
<rect x="255.00" y="105.28" width="1.00" height="8.55" fill="#fa0afa"/>
<rect x="256.00" y="103.78" width="1.00" height="9.20" fill="#fa0afa"/>
<rect x="257.00" y="103.87" width="1.00" height="9.57" fill="#fa0afa"/>
<rect x="258.00" y="103.10" width="1.00" height="8.42" fill="#fa0afa"/>
<rect x="259.00" y="102.34" width="1.00" height="8.23" fill="#fa0afa"/>
<rect x="260.00" y="100.36" width="1.00" height="8.66" fill="#fa0afa"/>
<rect x="261.00" y="99.13" width="1.00" height="10.27" fill="#fa0afa"/>
<rect x="262.00" y="99.28" width="1.00" height="8.18" fill="#fa0afa"/>
<rect x="263.00" y="98.94" width="1.00" height="8.52" fill="#fa0afa"/>
<rect x="264.00" y="96.54" width="1.00" height="9.07" fill="#fa0afa"/>
<rect x="265.00" y="95.37" width="1.00" height="9.25" fill="#fa0afa"/>
<rect x="266.00" y="95.61" width="1.00" height="9.44" fill="#fa0afa"/>
<rect x="267.00" y="95.29" width="1.00" height="8.19" fill="#fa0afa"/>
<rect x="268.00" y="94.11" width="1.00" height="9.38" fill="#fa0afa"/>
<rect x="269.00" y="91.47" width="1.00" height="12.63" fill="#fa0afa"/>
<rect x="270.00" y="92.18" width="1.00" height="9.11" fill="#fa0afa"/>
<rect x="271.00" y="91.24" width="1.00" height="9.54" fill="#fa0afa"/>
<rect x="272.00" y="89.49" width="1.00" height="10.80" fill="#fa0afa"/>
<rect x="273.00" y="88.21" width="1.00" height="11.00" fill="#fa0afa"/>
<rect x="274.00" y="88.14" width="1.00" height="9.92" fill="#fa0afa"/>
<rect x="275.00" y="87.66" width="1.00" height="8.49" fill="#fa0afa"/>
<rect x="276.00" y="86.89" width="1.00" height="9.07" fill="#fa0afa"/>
<rect x="277.00" y="84.86" width="1.00" height="9.82" fill="#fa0afa"/>
<rect x="278.00" y="83.94" width="1.00" height="10.17" fill="#fa0afa"/>
<rect x="279.00" y="82.72" width="1.00" height="9.12" fill="#fa0afa"/>
<rect x="280.00" y="81.75" width="1.00" height="10.74" fill="#fa0afa"/>
<rect x="281.00" y="82.55" width="1.00" height="7.54" fill="#fa0afa"/>
<rect x="282.00" y="80.95" width="1.00" height="8.49" fill="#fa0afa"/>
<rect x="283.00" y="79.62" width="1.00" height="9.90" fill="#fa0afa"/>
<rect x="284.00" y="79.76" width="1.00" height="9.03" fill="#fa0afa"/>
<rect x="285.00" y="78.38" width="1.00" height="9.31" fill="#fa0afa"/>
<rect x="286.00" y="77.72" width="1.00" height="7.96" fill="#fa0afa"/>
<rect x="287.00" y="76.66" width="1.00" height="8.57" fill="#fa0afa"/>
<rect x="288.00" y="75.93" width="1.00" height="9.18" fill="#fa0afa"/>
<rect x="289.00" y="75.27" width="1.00" height="8.30" fill="#fa0afa"/>
<rect x="290.00" y="72.82" width="1.00" height="9.80" fill="#fa0afa"/>
<rect x="291.00" y="71.81" width="1.00" height="10.16" fill="#fa0afa"/>
<rect x="292.00" y="71.11" width="1.00" height="9.70" fill="#fa0afa"/>
<rect x="293.00" y="70.05" width="1.00" height="9.20" fill="#fa0afa"/>
<rect x="294.00" y="70.53" width="1.00" height="8.31" fill="#fa0afa"/>
<rect x="295.00" y="69.55" width="1.00" height="8.82" fill="#fa0afa"/>
<rect x="296.00" y="69.11" width="1.00" height="7.84" fill="#fa0afa"/>
<rect x="297.00" y="67.63" width="1.00" height="8.18" fill="#fa0afa"/>
<rect x="298.00" y="67.20" width="1.00" height="7.51" fill="#fa0afa"/>
<rect x="299.00" y="65.20" width="1.00" height="8.59" fill="#fa0afa"/>
<rect x="300.00" y="64.73" width="1.00" height="8.52" fill="#fa0afa"/>
<rect x="301.00" y="64.01" width="1.00" height="8.87" fill="#fa0afa"/>
<rect x="302.00" y="62.06" width="1.00" height="10.74" fill="#fa0afa"/>
<rect x="303.00" y="59.56" width="1.00" height="10.82" fill="#fa0afa"/>
<rect x="304.00" y="60.33" width="1.00" height="9.53" fill="#fa0afa"/>
<rect x="305.00" y="60.68" width="1.00" height="7.54" fill="#fa0afa"/>
<rect x="306.00" y="58.35" width="1.00" height="9.10" fill="#fa0afa"/>
<rect x="307.00" y="58.22" width="1.00" height="8.44" fill="#fa0afa"/>
<rect x="308.00" y="56.51" width="1.00" height="9.17" fill="#fa0afa"/>
<rect x="309.00" y="55.53" width="1.00" height="9.41" fill="#fa0afa"/>
<rect x="310.00" y="52.72" width="1.00" height="11.86" fill="#fa0afa"/>
<rect x="311.00" y="53.84" width="1.00" height="10.10" fill="#fa0afa"/>
<rect x="312.00" y="53.16" width="1.00" height="9.12" fill="#fa0afa"/>
<rect x="313.00" y="52.17" width="1.00" height="9.12" fill="#fa0afa"/>
<rect x="348.00" y="134.94" width="1.00" height="8.91" fill="#fa0afa"/>
<rect x="349.00" y="132.30" width="1.00" height="11.63" fill="#fa0afa"/>
<rect x="350.00" y="132.65" width="1.00" height="10.26" fill="#fa0afa"/>
<rect x="351.00" y="132.02" width="1.00" height="8.97" fill="#fa0afa"/>
<rect x="352.00" y="131.50" width="1.00" height="9.26" fill="#fa0afa"/>
<rect x="353.00" y="131.36" width="1.00" height="8.42" fill="#fa0afa"/>
<rect x="354.00" y="129.05" width="1.00" height="10.13" fill="#fa0afa"/>
<rect x="355.00" y="128.69" width="1.00" height="8.30" fill="#fa0afa"/>
<rect x="356.00" y="128.51" width="1.00" height="9.67" fill="#fa0afa"/>
<rect x="357.00" y="127.63" width="1.00" height="8.75" fill="#fa0afa"/>
<rect x="358.00" y="126.77" width="1.00" height="8.26" fill="#fa0afa"/>
<rect x="359.00" y="125.71" width="1.00" height="9.09" fill="#fa0afa"/>
<rect x="360.00" y="123.52" width="1.00" height="9.12" fill="#fa0afa"/>
<rect x="361.00" y="122.34" width="1.00" height="10.76" fill="#fa0afa"/>
<rect x="362.00" y="121.49" width="1.00" height="9.09" fill="#fa0afa"/>
<rect x="363.00" y="122.05" width="1.00" height="9.21" fill="#fa0afa"/>
<rect x="364.00" y="121.17" width="1.00" height="8.43" fill="#fa0afa"/>
<rect x="365.00" y="120.04" width="1.00" height="9.43" fill="#fa0afa"/>
<rect x="366.00" y="119.33" width="1.00" height="9.29" fill="#fa0afa"/>
<rect x="367.00" y="117.11" width="1.00" height="10.31" fill="#fa0afa"/>
<rect x="368.00" y="117.14" width="1.00" height="9.54" fill="#fa0afa"/>
<rect x="369.00" y="115.24" width="1.00" height="9.08" fill="#fa0afa"/>
<rect x="370.00" y="115.27" width="1.00" height="9.46" fill="#fa0afa"/>
<rect x="371.00" y="114.01" width="1.00" height="8.98" fill="#fa0afa"/>
<rect x="372.00" y="112.14" width="1.00" height="10.68" fill="#fa0afa"/>
<rect x="373.00" y="112.09" width="1.00" height="10.28" fill="#fa0afa"/>
<rect x="374.00" y="111.08" width="1.00" height="8.52" fill="#fa0afa"/>
<rect x="375.00" y="110.67" width="1.00" height="9.00" fill="#fa0afa"/>
<rect x="376.00" y="109.65" width="1.00" height="9.38" fill="#fa0afa"/>
<rect x="377.00" y="109.48" width="1.00" height="8.08" fill="#fa0afa"/>
<rect x="378.00" y="107.66" width="1.00" height="8.71" fill="#fa0afa"/>
<rect x="379.00" y="107.61" width="1.00" height="9.24" fill="#fa0afa"/>
<rect x="380.00" y="106.78" width="1.00" height="8.59" fill="#fa0afa"/>
<rect x="381.00" y="103.83" width="1.00" height="9.93" fill="#fa0afa"/>
<rect x="382.00" y="104.49" width="1.00" height="9.09" fill="#fa0afa"/>
<rect x="383.00" y="102.86" width="1.00" height="10.36" fill="#fa0afa"/>
<rect x="384.00" y="100.90" width="1.00" height="11.42" fill="#fa0afa"/>
<rect x="385.00" y="100.65" width="1.00" height="9.26" fill="#fa0afa"/>
<rect x="386.00" y="100.57" width="1.00" height="9.38" fill="#fa0afa"/>
<rect x="387.00" y="98.21" width="1.00" height="10.19" fill="#fa0afa"/>
<rect x="388.00" y="98.36" width="1.00" height="8.57" fill="#fa0afa"/>
<rect x="389.00" y="97.93" width="1.00" height="9.49" fill="#fa0afa"/>
<rect x="390.00" y="96.71" width="1.00" height="8.84" fill="#fa0afa"/>
<rect x="391.00" y="95.69" width="1.00" height="10.13" fill="#fa0afa"/>
<rect x="392.00" y="95.05" width="1.00" height="9.08" fill="#fa0afa"/>
<rect x="393.00" y="94.69" width="1.00" height="8.92" fill="#fa0afa"/>
<rect x="394.00" y="92.62" width="1.00" height="8.90" fill="#fa0afa"/>
<rect x="395.00" y="91.97" width="1.00" height="10.41" fill="#fa0afa"/>
<rect x="396.00" y="90.81" width="1.00" height="9.50" fill="#fa0afa"/>
<rect x="397.00" y="90.38" width="1.00" height="9.71" fill="#fa0afa"/>
<rect x="398.00" y="89.78" width="1.00" height="9.69" fill="#fa0afa"/>
<rect x="399.00" y="88.94" width="1.00" height="9.41" fill="#fa0afa"/>
<rect x="400.00" y="86.59" width="1.00" height="10.65" fill="#fa0afa"/>
<rect x="401.00" y="87.91" width="1.00" height="7.45" fill="#fa0afa"/>
<rect x="402.00" y="85.24" width="1.00" height="9.06" fill="#fa0afa"/>
<rect x="403.00" y="83.44" width="1.00" height="11.31" fill="#fa0afa"/>
<rect x="404.00" y="83.69" width="1.00" height="12.11" fill="#fa0afa"/>
<rect x="405.00" y="81.79" width="1.00" height="12.09" fill="#fa0afa"/>
<rect x="406.00" y="81.82" width="1.00" height="10.35" fill="#fa0afa"/>
<rect x="407.00" y="80.68" width="1.00" height="9.59" fill="#fa0afa"/>
<rect x="408.00" y="81.23" width="1.00" height="9.08" fill="#fa0afa"/>
<rect x="409.00" y="80.18" width="1.00" height="9.10" fill="#fa0afa"/>
<rect x="410.00" y="77.98" width="1.00" height="9.99" fill="#fa0afa"/>
<rect x="411.00" y="78.85" width="1.00" height="8.04" fill="#fa0afa"/>
<rect x="412.00" y="77.34" width="1.00" height="9.20" fill="#fa0afa"/>
<rect x="413.00" y="75.46" width="1.00" height="9.01" fill="#fa0afa"/>
<rect x="414.00" y="76.19" width="1.00" height="7.59" fill="#fa0afa"/>
<rect x="415.00" y="75.28" width="1.00" height="8.14" fill="#fa0afa"/>
<rect x="416.00" y="74.03" width="1.00" height="8.49" fill="#fa0afa"/>
<rect x="417.00" y="72.98" width="1.00" height="9.49" fill="#fa0afa"/>
<rect x="418.00" y="69.79" width="1.00" height="12.61" fill="#fa0afa"/>
<rect x="419.00" y="70.34" width="1.00" height="10.02" fill="#fa0afa"/>
<rect x="420.00" y="70.00" width="1.00" height="10.54" fill="#fa0afa"/>
<rect x="421.00" y="69.81" width="1.00" height="7.64" fill="#fa0afa"/>
<rect x="422.00" y="68.00" width="1.00" height="8.87" fill="#fa0afa"/>
<rect x="423.00" y="67.17" width="1.00" height="9.09" fill="#fa0afa"/>
<rect x="424.00" y="65.91" width="1.00" height="9.09" fill="#fa0afa"/>
<rect x="425.00" y="64.63" width="1.00" height="10.06" fill="#fa0afa"/>
<rect x="426.00" y="64.49" width="1.00" height="9.50" fill="#fa0afa"/>
<rect x="427.00" y="63.55" width="1.00" height="9.76" fill="#fa0afa"/>
<rect x="428.00" y="62.95" width="1.00" height="9.11" fill="#fa0afa"/>
<rect x="429.00" y="62.32" width="1.00" height="7.97" fill="#fa0afa"/>
<rect x="430.00" y="61.40" width="1.00" height="8.13" fill="#fa0afa"/>
<rect x="431.00" y="59.42" width="1.00" height="9.85" fill="#fa0afa"/>
<rect x="432.00" y="58.03" width="1.00" height="10.58" fill="#fa0afa"/>
<rect x="433.00" y="57.81" width="1.00" height="9.59" fill="#fa0afa"/>
<rect x="434.00" y="58.02" width="1.00" height="8.02" fill="#fa0afa"/>
<rect x="435.00" y="56.23" width="1.00" height="9.35" fill="#fa0afa"/>
<rect x="436.00" y="55.13" width="1.00" height="9.12" fill="#fa0afa"/>
<rect x="437.00" y="54.56" width="1.00" height="9.11" fill="#fa0afa"/>
<rect x="438.00" y="54.03" width="1.00" height="9.01" fill="#fa0afa"/>
<rect x="439.00" y="52.23" width="1.00" height="10.15" fill="#fa0afa"/>
<rect x="474.00" y="134.89" width="1.00" height="9.79" fill="#fa0afa"/>
<rect x="475.00" y="133.36" width="1.00" height="10.04" fill="#fa0afa"/>
<rect x="476.00" y="133.13" width="1.00" height="8.87" fill="#fa0afa"/>
<rect x="477.00" y="131.75" width="1.00" height="10.25" fill="#fa0afa"/>
<rect x="478.00" y="130.65" width="1.00" height="9.42" fill="#fa0afa"/>
<rect x="479.00" y="131.15" width="1.00" height="8.30" fill="#fa0afa"/>
<rect x="480.00" y="127.17" width="1.00" height="11.34" fill="#fa0afa"/>
<rect x="481.00" y="128.05" width="1.00" height="9.54" fill="#fa0afa"/>
<rect x="482.00" y="127.52" width="1.00" height="8.97" fill="#fa0afa"/>
<rect x="483.00" y="126.30" width="1.00" height="9.25" fill="#fa0afa"/>
<rect x="484.00" y="123.91" width="1.00" height="10.66" fill="#fa0afa"/>
<rect x="485.00" y="125.77" width="1.00" height="8.02" fill="#fa0afa"/>
<rect x="486.00" y="124.22" width="1.00" height="8.37" fill="#fa0afa"/>
<rect x="487.00" y="122.19" width="1.00" height="9.99" fill="#fa0afa"/>
<rect x="488.00" y="122.33" width="1.00" height="8.35" fill="#fa0afa"/>
<rect x="489.00" y="120.63" width="1.00" height="9.94" fill="#fa0afa"/>
<rect x="490.00" y="120.84" width="1.00" height="9.46" fill="#fa0afa"/>
<rect x="491.00" y="118.80" width="1.00" height="10.31" fill="#fa0afa"/>
<rect x="492.00" y="118.41" width="1.00" height="8.48" fill="#fa0afa"/>
<rect x="493.00" y="116.93" width="1.00" height="9.32" fill="#fa0afa"/>
<rect x="494.00" y="115.25" width="1.00" height="9.95" fill="#fa0afa"/>
<rect x="495.00" y="116.27" width="1.00" height="8.24" fill="#fa0afa"/>
<rect x="496.00" y="114.62" width="1.00" height="9.66" fill="#fa0afa"/>
<rect x="497.00" y="113.31" width="1.00" height="8.93" fill="#fa0afa"/>
<rect x="498.00" y="112.53" width="1.00" height="8.96" fill="#fa0afa"/>
<rect x="499.00" y="113.09" width="1.00" height="7.25" fill="#fa0afa"/>
<rect x="500.00" y="111.74" width="1.00" height="7.87" fill="#fa0afa"/>
<rect x="501.00" y="109.83" width="1.00" height="9.33" fill="#fa0afa"/>
<rect x="502.00" y="108.90" width="1.00" height="9.02" fill="#fa0afa"/>
<rect x="503.00" y="108.01" width="1.00" height="9.95" fill="#fa0afa"/>
<rect x="504.00" y="107.00" width="1.00" height="9.17" fill="#fa0afa"/>
<rect x="505.00" y="106.28" width="1.00" height="9.44" fill="#fa0afa"/>
<rect x="506.00" y="106.28" width="1.00" height="8.15" fill="#fa0afa"/>
<rect x="507.00" y="105.77" width="1.00" height="8.20" fill="#fa0afa"/>
<rect x="508.00" y="104.03" width="1.00" height="10.93" fill="#fa0afa"/>
<rect x="509.00" y="103.18" width="1.00" height="9.16" fill="#fa0afa"/>
<rect x="510.00" y="102.45" width="1.00" height="10.16" fill="#fa0afa"/>
<rect x="511.00" y="101.05" width="1.00" height="8.46" fill="#fa0afa"/>
<rect x="512.00" y="99.58" width="1.00" height="9.60" fill="#fa0afa"/>
<rect x="513.00" y="97.95" width="1.00" height="11.40" fill="#fa0afa"/>
<rect x="514.00" y="98.90" width="1.00" height="9.48" fill="#fa0afa"/>
<rect x="515.00" y="97.64" width="1.00" height="9.66" fill="#fa0afa"/>
<rect x="516.00" y="96.93" width="1.00" height="9.06" fill="#fa0afa"/>
<rect x="517.00" y="95.25" width="1.00" height="9.54" fill="#fa0afa"/>
<rect x="518.00" y="94.96" width="1.00" height="10.01" fill="#fa0afa"/>
<rect x="519.00" y="94.39" width="1.00" height="8.43" fill="#fa0afa"/>
<rect x="520.00" y="91.32" width="1.00" height="11.48" fill="#fa0afa"/>
<rect x="521.00" y="92.17" width="1.00" height="9.12" fill="#fa0afa"/>
<rect x="522.00" y="90.55" width="1.00" height="10.11" fill="#fa0afa"/>
<rect x="523.00" y="89.67" width="1.00" height="10.09" fill="#fa0afa"/>
<rect x="524.00" y="89.17" width="1.00" height="9.66" fill="#fa0afa"/>
<rect x="525.00" y="88.32" width="1.00" height="10.11" fill="#fa0afa"/>
<rect x="526.00" y="88.61" width="1.00" height="8.74" fill="#fa0afa"/>
<rect x="527.00" y="87.07" width="1.00" height="9.46" fill="#fa0afa"/>
<rect x="528.00" y="86.38" width="1.00" height="8.26" fill="#fa0afa"/>
<rect x="529.00" y="85.15" width="1.00" height="10.59" fill="#fa0afa"/>
<rect x="530.00" y="84.99" width="1.00" height="7.50" fill="#fa0afa"/>
<rect x="531.00" y="81.33" width="1.00" height="10.87" fill="#fa0afa"/>
<rect x="532.00" y="81.47" width="1.00" height="10.85" fill="#fa0afa"/>
<rect x="533.00" y="82.15" width="1.00" height="8.62" fill="#fa0afa"/>
<rect x="534.00" y="81.41" width="1.00" height="7.24" fill="#fa0afa"/>
<rect x="535.00" y="78.70" width="1.00" height="9.20" fill="#fa0afa"/>
<rect x="536.00" y="79.60" width="1.00" height="8.60" fill="#fa0afa"/>
<rect x="537.00" y="78.37" width="1.00" height="7.65" fill="#fa0afa"/>
<rect x="538.00" y="74.75" width="1.00" height="11.65" fill="#fa0afa"/>
<rect x="539.00" y="76.04" width="1.00" height="9.85" fill="#fa0afa"/>
<rect x="540.00" y="73.17" width="1.00" height="10.06" fill="#fa0afa"/>
<rect x="541.00" y="74.95" width="1.00" height="7.94" fill="#fa0afa"/>
<rect x="542.00" y="71.51" width="1.00" height="10.81" fill="#fa0afa"/>
<rect x="543.00" y="72.46" width="1.00" height="9.32" fill="#fa0afa"/>
<rect x="544.00" y="71.70" width="1.00" height="9.12" fill="#fa0afa"/>
<rect x="545.00" y="70.75" width="1.00" height="9.43" fill="#fa0afa"/>
<rect x="546.00" y="67.54" width="1.00" height="10.79" fill="#fa0afa"/>
<rect x="547.00" y="68.10" width="1.00" height="9.40" fill="#fa0afa"/>
<rect x="548.00" y="67.19" width="1.00" height="9.92" fill="#fa0afa"/>
<rect x="549.00" y="66.18" width="1.00" height="9.60" fill="#fa0afa"/>
<rect x="550.00" y="65.26" width="1.00" height="11.33" fill="#fa0afa"/>
<rect x="551.00" y="65.25" width="1.00" height="9.12" fill="#fa0afa"/>
<rect x="552.00" y="65.07" width="1.00" height="8.86" fill="#fa0afa"/>
<rect x="553.00" y="63.16" width="1.00" height="8.81" fill="#fa0afa"/>
<rect x="554.00" y="62.04" width="1.00" height="11.57" fill="#fa0afa"/>
<rect x="555.00" y="60.92" width="1.00" height="9.10" fill="#fa0afa"/>
<rect x="556.00" y="61.08" width="1.00" height="8.80" fill="#fa0afa"/>
<rect x="557.00" y="60.23" width="1.00" height="8.08" fill="#fa0afa"/>
<rect x="558.00" y="58.84" width="1.00" height="8.24" fill="#fa0afa"/>
<rect x="559.00" y="58.37" width="1.00" height="8.74" fill="#fa0afa"/>
<rect x="560.00" y="56.92" width="1.00" height="9.10" fill="#fa0afa"/>
<rect x="561.00" y="56.64" width="1.00" height="7.91" fill="#fa0afa"/>
<rect x="562.00" y="55.02" width="1.00" height="9.04" fill="#fa0afa"/>
<rect x="563.00" y="55.11" width="1.00" height="10.63" fill="#fa0afa"/>
<rect x="564.00" y="52.79" width="1.00" height="8.99" fill="#fa0afa"/>
<rect x="565.00" y="50.41" width="1.00" height="10.21" fill="#fa0afa"/>
<rect x="600.00" y="134.64" width="1.00" height="9.20" fill="#fa0afa"/>
<rect x="601.00" y="133.85" width="1.00" height="9.81" fill="#fa0afa"/>
<rect x="602.00" y="131.12" width="1.00" height="10.31" fill="#fa0afa"/>
<rect x="603.00" y="132.69" width="1.00" height="7.46" fill="#fa0afa"/>
<rect x="604.00" y="131.08" width="1.00" height="11.27" fill="#fa0afa"/>
<rect x="605.00" y="130.29" width="1.00" height="8.18" fill="#fa0afa"/>
<rect x="606.00" y="129.06" width="1.00" height="9.49" fill="#fa0afa"/>
<rect x="607.00" y="128.48" width="1.00" height="8.80" fill="#fa0afa"/>
<rect x="608.00" y="125.56" width="1.00" height="10.39" fill="#fa0afa"/>
<rect x="609.00" y="125.71" width="1.00" height="12.31" fill="#fa0afa"/>
<rect x="610.00" y="125.17" width="1.00" height="10.49" fill="#fa0afa"/>
<rect x="611.00" y="124.18" width="1.00" height="10.42" fill="#fa0afa"/>
<rect x="612.00" y="122.60" width="1.00" height="10.75" fill="#fa0afa"/>
<rect x="613.00" y="123.56" width="1.00" height="8.35" fill="#fa0afa"/>
<rect x="614.00" y="121.05" width="1.00" height="10.34" fill="#fa0afa"/>
<rect x="615.00" y="121.92" width="1.00" height="9.03" fill="#fa0afa"/>
<rect x="616.00" y="119.44" width="1.00" height="10.54" fill="#fa0afa"/>
<rect x="617.00" y="120.00" width="1.00" height="9.15" fill="#fa0afa"/>
<rect x="618.00" y="118.41" width="1.00" height="8.71" fill="#fa0afa"/>
<rect x="619.00" y="117.18" width="1.00" height="10.24" fill="#fa0afa"/>
<rect x="620.00" y="116.41" width="1.00" height="8.53" fill="#fa0afa"/>
<rect x="621.00" y="115.78" width="1.00" height="8.28" fill="#fa0afa"/>
<rect x="622.00" y="115.02" width="1.00" height="8.15" fill="#fa0afa"/>
<rect x="623.00" y="113.03" width="1.00" height="10.98" fill="#fa0afa"/>
<rect x="624.00" y="112.57" width="1.00" height="8.87" fill="#fa0afa"/>
<rect x="625.00" y="112.45" width="1.00" height="8.07" fill="#fa0afa"/>
<rect x="626.00" y="109.20" width="1.00" height="11.79" fill="#fa0afa"/>
<rect x="627.00" y="111.02" width="1.00" height="8.69" fill="#fa0afa"/>
<rect x="628.00" y="110.19" width="1.00" height="8.76" fill="#fa0afa"/>
<rect x="629.00" y="109.31" width="1.00" height="8.78" fill="#fa0afa"/>
<rect x="630.00" y="107.59" width="1.00" height="9.76" fill="#fa0afa"/>
<rect x="631.00" y="107.25" width="1.00" height="7.80" fill="#fa0afa"/>
<rect x="632.00" y="104.82" width="1.00" height="9.14" fill="#fa0afa"/>
<rect x="633.00" y="105.18" width="1.00" height="8.11" fill="#fa0afa"/>
<rect x="634.00" y="103.25" width="1.00" height="11.45" fill="#fa0afa"/>
<rect x="635.00" y="101.40" width="1.00" height="11.06" fill="#fa0afa"/>
<rect x="636.00" y="101.38" width="1.00" height="12.31" fill="#fa0afa"/>
<rect x="637.00" y="101.17" width="1.00" height="9.76" fill="#fa0afa"/>
<rect x="638.00" y="99.59" width="1.00" height="9.48" fill="#fa0afa"/>
<rect x="639.00" y="99.14" width="1.00" height="8.34" fill="#fa0afa"/>
<rect x="640.00" y="98.38" width="1.00" height="8.41" fill="#fa0afa"/>
<rect x="641.00" y="96.81" width="1.00" height="9.45" fill="#fa0afa"/>
<rect x="642.00" y="96.12" width="1.00" height="8.74" fill="#fa0afa"/>
<rect x="643.00" y="95.71" width="1.00" height="9.12" fill="#fa0afa"/>
<rect x="644.00" y="95.70" width="1.00" height="9.08" fill="#fa0afa"/>
<rect x="645.00" y="94.64" width="1.00" height="8.52" fill="#fa0afa"/>
<rect x="646.00" y="91.20" width="1.00" height="10.30" fill="#fa0afa"/>
<rect x="647.00" y="90.23" width="1.00" height="11.33" fill="#fa0afa"/>
<rect x="648.00" y="92.03" width="1.00" height="7.52" fill="#fa0afa"/>
<rect x="649.00" y="90.68" width="1.00" height="7.96" fill="#fa0afa"/>
<rect x="650.00" y="89.19" width="1.00" height="9.96" fill="#fa0afa"/>
<rect x="651.00" y="87.99" width="1.00" height="8.93" fill="#fa0afa"/>
<rect x="652.00" y="87.76" width="1.00" height="8.74" fill="#fa0afa"/>
<rect x="653.00" y="86.84" width="1.00" height="9.74" fill="#fa0afa"/>
<rect x="654.00" y="86.23" width="1.00" height="8.29" fill="#fa0afa"/>
<rect x="655.00" y="84.26" width="1.00" height="10.46" fill="#fa0afa"/>
<rect x="656.00" y="84.78" width="1.00" height="8.28" fill="#fa0afa"/>
<rect x="657.00" y="83.50" width="1.00" height="8.48" fill="#fa0afa"/>
<rect x="658.00" y="82.06" width="1.00" height="8.34" fill="#fa0afa"/>
<rect x="659.00" y="82.12" width="1.00" height="7.50" fill="#fa0afa"/>
<rect x="660.00" y="79.48" width="1.00" height="10.18" fill="#fa0afa"/>
<rect x="661.00" y="78.67" width="1.00" height="8.95" fill="#fa0afa"/>
<rect x="662.00" y="78.16" width="1.00" height="9.01" fill="#fa0afa"/>
<rect x="663.00" y="77.36" width="1.00" height="8.86" fill="#fa0afa"/>
<rect x="664.00" y="75.83" width="1.00" height="9.55" fill="#fa0afa"/>
<rect x="665.00" y="76.50" width="1.00" height="8.56" fill="#fa0afa"/>
<rect x="666.00" y="75.32" width="1.00" height="8.60" fill="#fa0afa"/>
<rect x="667.00" y="74.69" width="1.00" height="7.69" fill="#fa0afa"/>
<rect x="668.00" y="72.15" width="1.00" height="9.53" fill="#fa0afa"/>
<rect x="669.00" y="71.95" width="1.00" height="9.44" fill="#fa0afa"/>
<rect x="670.00" y="70.86" width="1.00" height="9.43" fill="#fa0afa"/>
<rect x="671.00" y="70.41" width="1.00" height="8.68" fill="#fa0afa"/>
<rect x="672.00" y="69.42" width="1.00" height="9.93" fill="#fa0afa"/>
<rect x="673.00" y="67.85" width="1.00" height="9.29" fill="#fa0afa"/>
<rect x="674.00" y="68.05" width="1.00" height="9.62" fill="#fa0afa"/>
<rect x="675.00" y="67.38" width="1.00" height="7.63" fill="#fa0afa"/>
<rect x="676.00" y="66.66" width="1.00" height="8.05" fill="#fa0afa"/>
<rect x="677.00" y="65.66" width="1.00" height="7.84" fill="#fa0afa"/>
<rect x="678.00" y="64.67" width="1.00" height="8.13" fill="#fa0afa"/>
<rect x="679.00" y="62.89" width="1.00" height="9.99" fill="#fa0afa"/>
<rect x="680.00" y="61.75" width="1.00" height="10.02" fill="#fa0afa"/>
<rect x="681.00" y="60.76" width="1.00" height="10.04" fill="#fa0afa"/>
<rect x="682.00" y="59.69" width="1.00" height="8.86" fill="#fa0afa"/>
<rect x="683.00" y="59.50" width="1.00" height="9.98" fill="#fa0afa"/>
<rect x="684.00" y="58.05" width="1.00" height="10.35" fill="#fa0afa"/>
<rect x="685.00" y="57.77" width="1.00" height="8.93" fill="#fa0afa"/>
<rect x="686.00" y="56.98" width="1.00" height="9.00" fill="#fa0afa"/>
<rect x="687.00" y="55.33" width="1.00" height="10.31" fill="#fa0afa"/>
<rect x="688.00" y="55.57" width="1.00" height="8.13" fill="#fa0afa"/>
<rect x="689.00" y="53.91" width="1.00" height="8.47" fill="#fa0afa"/>
<rect x="690.00" y="52.50" width="1.00" height="10.39" fill="#fa0afa"/>
<rect x="691.00" y="51.82" width="1.00" height="10.31" fill="#fa0afa"/>
<rect x="726.00" y="134.44" width="1.00" height="9.89" fill="#fa0afa"/>
<rect x="727.00" y="132.58" width="1.00" height="10.08" fill="#fa0afa"/>
<rect x="728.00" y="132.84" width="1.00" height="8.62" fill="#fa0afa"/>
<rect x="729.00" y="130.87" width="1.00" height="11.35" fill="#fa0afa"/>
<rect x="730.00" y="131.00" width="1.00" height="9.03" fill="#fa0afa"/>
<rect x="731.00" y="129.03" width="1.00" height="9.96" fill="#fa0afa"/>
<rect x="732.00" y="128.06" width="1.00" height="9.74" fill="#fa0afa"/>
<rect x="733.00" y="128.73" width="1.00" height="8.13" fill="#fa0afa"/>
<rect x="734.00" y="127.17" width="1.00" height="8.38" fill="#fa0afa"/>
<rect x="735.00" y="125.68" width="1.00" height="10.64" fill="#fa0afa"/>
<rect x="736.00" y="126.04" width="1.00" height="8.05" fill="#fa0afa"/>
<rect x="737.00" y="125.07" width="1.00" height="7.90" fill="#fa0afa"/>
<rect x="738.00" y="123.85" width="1.00" height="10.88" fill="#fa0afa"/>
<rect x="739.00" y="122.12" width="1.00" height="10.24" fill="#fa0afa"/>
<rect x="740.00" y="121.11" width="1.00" height="9.91" fill="#fa0afa"/>
<rect x="741.00" y="120.86" width="1.00" height="9.20" fill="#fa0afa"/>
<rect x="742.00" y="119.89" width="1.00" height="10.10" fill="#fa0afa"/>
<rect x="743.00" y="119.77" width="1.00" height="8.38" fill="#fa0afa"/>
<rect x="744.00" y="118.77" width="1.00" height="8.52" fill="#fa0afa"/>
<rect x="745.00" y="115.00" width="1.00" height="10.51" fill="#fa0afa"/>
<rect x="746.00" y="115.92" width="1.00" height="9.23" fill="#fa0afa"/>
<rect x="747.00" y="116.19" width="1.00" height="9.11" fill="#fa0afa"/>
<rect x="748.00" y="112.78" width="1.00" height="10.62" fill="#fa0afa"/>
<rect x="749.00" y="112.74" width="1.00" height="9.86" fill="#fa0afa"/>
<rect x="750.00" y="113.58" width="1.00" height="9.05" fill="#fa0afa"/>
<rect x="751.00" y="111.05" width="1.00" height="10.46" fill="#fa0afa"/>
<rect x="752.00" y="110.03" width="1.00" height="9.97" fill="#fa0afa"/>
<rect x="753.00" y="110.21" width="1.00" height="9.31" fill="#fa0afa"/>
<rect x="754.00" y="108.38" width="1.00" height="9.78" fill="#fa0afa"/>
<rect x="755.00" y="108.81" width="1.00" height="8.21" fill="#fa0afa"/>
<rect x="756.00" y="106.38" width="1.00" height="10.12" fill="#fa0afa"/>
<rect x="757.00" y="106.56" width="1.00" height="8.09" fill="#fa0afa"/>
<rect x="758.00" y="105.75" width="1.00" height="8.33" fill="#fa0afa"/>
<rect x="759.00" y="105.07" width="1.00" height="7.72" fill="#fa0afa"/>
<rect x="760.00" y="103.41" width="1.00" height="9.74" fill="#fa0afa"/>
<rect x="761.00" y="103.46" width="1.00" height="8.29" fill="#fa0afa"/>
<rect x="762.00" y="102.50" width="1.00" height="8.17" fill="#fa0afa"/>
<rect x="763.00" y="100.07" width="1.00" height="9.42" fill="#fa0afa"/>
<rect x="764.00" y="100.56" width="1.00" height="8.49" fill="#fa0afa"/>
<rect x="765.00" y="99.59" width="1.00" height="9.40" fill="#fa0afa"/>
<rect x="766.00" y="98.71" width="1.00" height="8.82" fill="#fa0afa"/>
<rect x="767.00" y="98.04" width="1.00" height="8.41" fill="#fa0afa"/>
<rect x="768.00" y="95.90" width="1.00" height="9.40" fill="#fa0afa"/>
<rect x="769.00" y="95.11" width="1.00" height="9.30" fill="#fa0afa"/>
<rect x="770.00" y="93.61" width="1.00" height="10.41" fill="#fa0afa"/>
<rect x="21.00" y="236.00" width="41.50" height="8.00" fill="#f8f808"/>
<rect x="21.00" y="234.00" width="1.00" height="2.00" fill="#f8f808"/>
<rect x="21.00" y="244.00" width="1.00" height="3.00" fill="#f8f808"/>
<rect x="22.00" y="235.00" width="1.00" height="1.00" fill="#f8f808"/>
<rect x="22.00" y="244.00" width="1.00" height="3.00" fill="#f8f808"/>
<rect x="23.00" y="234.00" width="1.00" height="2.00" fill="#f8f808"/>
<rect x="23.00" y="244.00" width="1.00" height="2.00" fill="#f8f808"/>
<rect x="25.00" y="244.00" width="1.00" height="2.00" fill="#f8f808"/>
<rect x="26.00" y="234.00" width="1.00" height="2.00" fill="#f8f808"/>
<rect x="27.00" y="244.00" width="1.00" height="2.00" fill="#f8f808"/>
<rect x="28.00" y="233.00" width="1.00" height="3.00" fill="#f8f808"/>
<rect x="29.00" y="232.00" width="1.00" height="4.00" fill="#f8f808"/>
<rect x="29.00" y="244.00" width="1.00" height="3.00" fill="#f8f808"/>
<rect x="30.00" y="234.00" width="1.00" height="2.00" fill="#f8f808"/>
<rect x="30.00" y="244.00" width="1.00" height="3.00" fill="#f8f808"/>
<rect x="32.00" y="235.00" width="1.00" height="1.00" fill="#f8f808"/>
<rect x="33.00" y="232.00" width="1.00" height="4.00" fill="#f8f808"/>
<rect x="33.00" y="244.00" width="1.00" height="2.00" fill="#f8f808"/>
<rect x="36.00" y="244.00" width="1.00" height="2.00" fill="#f8f808"/>
<rect x="37.00" y="244.00" width="1.00" height="2.00" fill="#f8f808"/>
<rect x="39.00" y="244.00" width="1.00" height="3.00" fill="#f8f808"/>
<rect x="40.00" y="235.00" width="1.00" height="1.00" fill="#f8f808"/>
<rect x="43.00" y="234.00" width="1.00" height="2.00" fill="#f8f808"/>
<rect x="43.00" y="244.00" width="1.00" height="2.00" fill="#f8f808"/>
<rect x="44.00" y="244.00" width="1.00" height="3.00" fill="#f8f808"/>
<rect x="46.00" y="244.00" width="1.00" height="3.00" fill="#f8f808"/>
<rect x="47.00" y="234.00" width="1.00" height="2.00" fill="#f8f808"/>
<rect x="47.00" y="244.00" width="1.00" height="2.00" fill="#f8f808"/>
<rect x="50.00" y="235.00" width="1.00" height="1.00" fill="#f8f808"/>
<rect x="51.00" y="233.00" width="1.00" height="3.00" fill="#f8f808"/>
<rect x="51.00" y="244.00" width="1.00" height="1.00" fill="#f8f808"/>
<rect x="52.00" y="235.00" width="1.00" height="1.00" fill="#f8f808"/>
<rect x="52.00" y="244.00" width="1.00" height="3.00" fill="#f8f808"/>
<rect x="54.00" y="235.00" width="1.00" height="1.00" fill="#f8f808"/>
<rect x="55.00" y="244.00" width="1.00" height="1.00" fill="#f8f808"/>
<rect x="56.00" y="244.00" width="1.00" height="2.00" fill="#f8f808"/>
<rect x="57.00" y="235.00" width="1.00" height="1.00" fill="#f8f808"/>
<rect x="58.00" y="233.00" width="1.00" height="3.00" fill="#f8f808"/>
<rect x="59.00" y="244.00" width="1.00" height="1.00" fill="#f8f808"/>
<rect x="60.00" y="233.00" width="1.00" height="3.00" fill="#f8f808"/>
<rect x="60.00" y="244.00" width="1.00" height="3.00" fill="#f8f808"/>
<rect x="61.00" y="234.00" width="1.00" height="2.00" fill="#f8f808"/>
<rect x="61.00" y="244.00" width="1.00" height="3.00" fill="#f8f808"/>
<rect x="97.20" y="236.00" width="91.10" height="8.00" fill="#f8f808"/>
<rect x="98.00" y="233.00" width="1.00" height="3.00" fill="#f8f808"/>
<rect x="98.00" y="244.00" width="1.00" height="3.00" fill="#f8f808"/>
<rect x="99.00" y="244.00" width="1.00" height="1.00" fill="#f8f808"/>
<rect x="100.00" y="244.00" width="1.00" height="2.00" fill="#f8f808"/>
<rect x="101.00" y="244.00" width="1.00" height="1.00" fill="#f8f808"/>
<rect x="102.00" y="234.00" width="1.00" height="2.00" fill="#f8f808"/>
<rect x="102.00" y="244.00" width="1.00" height="2.00" fill="#f8f808"/>
<rect x="103.00" y="235.00" width="1.00" height="1.00" fill="#f8f808"/>
<rect x="104.00" y="235.00" width="1.00" height="1.00" fill="#f8f808"/>
<rect x="105.00" y="235.00" width="1.00" height="1.00" fill="#f8f808"/>
<rect x="105.00" y="244.00" width="1.00" height="2.00" fill="#f8f808"/>
<rect x="106.00" y="234.00" width="1.00" height="2.00" fill="#f8f808"/>
<rect x="106.00" y="244.00" width="1.00" height="3.00" fill="#f8f808"/>
<rect x="107.00" y="235.00" width="1.00" height="1.00" fill="#f8f808"/>
<rect x="107.00" y="244.00" width="1.00" height="2.00" fill="#f8f808"/>
<rect x="108.00" y="233.00" width="1.00" height="3.00" fill="#f8f808"/>
<rect x="108.00" y="244.00" width="1.00" height="3.00" fill="#f8f808"/>
<rect x="109.00" y="244.00" width="1.00" height="2.00" fill="#f8f808"/>
<rect x="110.00" y="244.00" width="1.00" height="3.00" fill="#f8f808"/>
<rect x="111.00" y="234.00" width="1.00" height="2.00" fill="#f8f808"/>
<rect x="114.00" y="235.00" width="1.00" height="1.00" fill="#f8f808"/>
<rect x="114.00" y="244.00" width="1.00" height="3.00" fill="#f8f808"/>
<rect x="115.00" y="232.00" width="1.00" height="4.00" fill="#f8f808"/>
<rect x="115.00" y="244.00" width="1.00" height="1.00" fill="#f8f808"/>
<rect x="116.00" y="235.00" width="1.00" height="1.00" fill="#f8f808"/>
<rect x="117.00" y="233.00" width="1.00" height="3.00" fill="#f8f808"/>
<rect x="117.00" y="244.00" width="1.00" height="3.00" fill="#f8f808"/>
<rect x="119.00" y="235.00" width="1.00" height="1.00" fill="#f8f808"/>
<rect x="120.00" y="235.00" width="1.00" height="1.00" fill="#f8f808"/>
<rect x="120.00" y="244.00" width="1.00" height="3.00" fill="#f8f808"/>
<rect x="122.00" y="235.00" width="1.00" height="1.00" fill="#f8f808"/>
<rect x="122.00" y="244.00" width="1.00" height="3.00" fill="#f8f808"/>
<rect x="124.00" y="244.00" width="1.00" height="1.00" fill="#f8f808"/>
<rect x="125.00" y="244.00" width="1.00" height="2.00" fill="#f8f808"/>
<rect x="128.00" y="235.00" width="1.00" height="1.00" fill="#f8f808"/>
<rect x="128.00" y="244.00" width="1.00" height="2.00" fill="#f8f808"/>
<rect x="129.00" y="244.00" width="1.00" height="1.00" fill="#f8f808"/>
<rect x="130.00" y="244.00" width="1.00" height="1.00" fill="#f8f808"/>
<rect x="131.00" y="244.00" width="1.00" height="3.00" fill="#f8f808"/>
<rect x="133.00" y="234.00" width="1.00" height="2.00" fill="#f8f808"/>
<rect x="133.00" y="244.00" width="1.00" height="1.00" fill="#f8f808"/>
<rect x="134.00" y="234.00" width="1.00" height="2.00" fill="#f8f808"/>
<rect x="135.00" y="235.00" width="1.00" height="1.00" fill="#f8f808"/>
<rect x="137.00" y="234.00" width="1.00" height="2.00" fill="#f8f808"/>
<rect x="137.00" y="244.00" width="1.00" height="3.00" fill="#f8f808"/>
<rect x="139.00" y="233.00" width="1.00" height="3.00" fill="#f8f808"/>
<rect x="139.00" y="244.00" width="1.00" height="2.00" fill="#f8f808"/>
<rect x="140.00" y="233.00" width="1.00" height="3.00" fill="#f8f808"/>
<rect x="143.00" y="244.00" width="1.00" height="3.00" fill="#f8f808"/>
<rect x="144.00" y="233.00" width="1.00" height="3.00" fill="#f8f808"/>
<rect x="144.00" y="244.00" width="1.00" height="3.00" fill="#f8f808"/>
<rect x="145.00" y="234.00" width="1.00" height="2.00" fill="#f8f808"/>
<rect x="145.00" y="244.00" width="1.00" height="3.00" fill="#f8f808"/>
<rect x="146.00" y="232.00" width="1.00" height="4.00" fill="#f8f808"/>
<rect x="146.00" y="244.00" width="1.00" height="3.00" fill="#f8f808"/>
<rect x="147.00" y="235.00" width="1.00" height="1.00" fill="#f8f808"/>
<rect x="147.00" y="244.00" width="1.00" height="3.00" fill="#f8f808"/>
<rect x="148.00" y="235.00" width="1.00" height="1.00" fill="#f8f808"/>
<rect x="148.00" y="244.00" width="1.00" height="3.00" fill="#f8f808"/>
<rect x="149.00" y="233.00" width="1.00" height="3.00" fill="#f8f808"/>
<rect x="150.00" y="235.00" width="1.00" height="1.00" fill="#f8f808"/>
<rect x="151.00" y="235.00" width="1.00" height="1.00" fill="#f8f808"/>
<rect x="151.00" y="244.00" width="1.00" height="1.00" fill="#f8f808"/>
<rect x="152.00" y="235.00" width="1.00" height="1.00" fill="#f8f808"/>
<rect x="152.00" y="244.00" width="1.00" height="2.00" fill="#f8f808"/>
<rect x="153.00" y="244.00" width="1.00" height="3.00" fill="#f8f808"/>
<rect x="154.00" y="234.00" width="1.00" height="2.00" fill="#f8f808"/>
<rect x="154.00" y="244.00" width="1.00" height="2.00" fill="#f8f808"/>
<rect x="155.00" y="233.00" width="1.00" height="3.00" fill="#f8f808"/>
<rect x="159.00" y="233.00" width="1.00" height="3.00" fill="#f8f808"/>
<rect x="161.00" y="233.00" width="1.00" height="3.00" fill="#f8f808"/>
<rect x="161.00" y="244.00" width="1.00" height="2.00" fill="#f8f808"/>
<rect x="162.00" y="244.00" width="1.00" height="1.00" fill="#f8f808"/>
<rect x="163.00" y="244.00" width="1.00" height="2.00" fill="#f8f808"/>
<rect x="164.00" y="244.00" width="1.00" height="3.00" fill="#f8f808"/>
<rect x="165.00" y="235.00" width="1.00" height="1.00" fill="#f8f808"/>
<rect x="165.00" y="244.00" width="1.00" height="1.00" fill="#f8f808"/>
<rect x="166.00" y="233.00" width="1.00" height="3.00" fill="#f8f808"/>
<rect x="167.00" y="235.00" width="1.00" height="1.00" fill="#f8f808"/>
<rect x="168.00" y="235.00" width="1.00" height="1.00" fill="#f8f808"/>
<rect x="171.00" y="233.00" width="1.00" height="3.00" fill="#f8f808"/>
<rect x="173.00" y="234.00" width="1.00" height="2.00" fill="#f8f808"/>
<rect x="173.00" y="244.00" width="1.00" height="2.00" fill="#f8f808"/>
<rect x="174.00" y="233.00" width="1.00" height="3.00" fill="#f8f808"/>
<rect x="175.00" y="244.00" width="1.00" height="3.00" fill="#f8f808"/>
<rect x="176.00" y="234.00" width="1.00" height="2.00" fill="#f8f808"/>
<rect x="176.00" y="244.00" width="1.00" height="3.00" fill="#f8f808"/>
<rect x="177.00" y="233.00" width="1.00" height="3.00" fill="#f8f808"/>
<rect x="177.00" y="244.00" width="1.00" height="2.00" fill="#f8f808"/>
<rect x="178.00" y="234.00" width="1.00" height="2.00" fill="#f8f808"/>
<rect x="178.00" y="244.00" width="1.00" height="3.00" fill="#f8f808"/>
<rect x="179.00" y="232.00" width="1.00" height="4.00" fill="#f8f808"/>
<rect x="179.00" y="244.00" width="1.00" height="1.00" fill="#f8f808"/>
<rect x="180.00" y="234.00" width="1.00" height="2.00" fill="#f8f808"/>
<rect x="180.00" y="244.00" width="1.00" height="3.00" fill="#f8f808"/>
<rect x="183.00" y="244.00" width="1.00" height="3.00" fill="#f8f808"/>
<rect x="184.00" y="244.00" width="1.00" height="2.00" fill="#f8f808"/>
<rect x="185.00" y="234.00" width="1.00" height="2.00" fill="#f8f808"/>
<rect x="186.00" y="234.00" width="1.00" height="2.00" fill="#f8f808"/>
<rect x="187.00" y="244.00" width="1.00" height="1.00" fill="#f8f808"/>
<rect x="64.50" y="283.00" width="32.10" height="9.00" fill="#f8f808"/>
<rect x="68.00" y="282.00" width="1.00" height="1.00" fill="#f8f808"/>
<rect x="69.00" y="292.00" width="1.00" height="2.00" fill="#f8f808"/>
<rect x="70.00" y="281.00" width="1.00" height="2.00" fill="#f8f808"/>
<rect x="71.00" y="292.00" width="1.00" height="1.00" fill="#f8f808"/>
<rect x="73.00" y="281.00" width="1.00" height="2.00" fill="#f8f808"/>
<rect x="73.00" y="292.00" width="1.00" height="2.00" fill="#f8f808"/>
<rect x="74.00" y="281.00" width="1.00" height="2.00" fill="#f8f808"/>
<rect x="75.00" y="282.00" width="1.00" height="1.00" fill="#f8f808"/>
<rect x="75.00" y="292.00" width="1.00" height="3.00" fill="#f8f808"/>
<rect x="76.00" y="282.00" width="1.00" height="1.00" fill="#f8f808"/>
<rect x="77.00" y="281.00" width="1.00" height="2.00" fill="#f8f808"/>
<rect x="77.00" y="292.00" width="1.00" height="3.00" fill="#f8f808"/>
<rect x="78.00" y="292.00" width="1.00" height="3.00" fill="#f8f808"/>
<rect x="79.00" y="282.00" width="1.00" height="1.00" fill="#f8f808"/>
<rect x="80.00" y="282.00" width="1.00" height="1.00" fill="#f8f808"/>
<rect x="82.00" y="292.00" width="1.00" height="2.00" fill="#f8f808"/>
<rect x="83.00" y="292.00" width="1.00" height="1.00" fill="#f8f808"/>
<rect x="84.00" y="292.00" width="1.00" height="2.00" fill="#f8f808"/>
<rect x="85.00" y="292.00" width="1.00" height="3.00" fill="#f8f808"/>
<rect x="86.00" y="281.00" width="1.00" height="2.00" fill="#f8f808"/>
<rect x="86.00" y="292.00" width="1.00" height="3.00" fill="#f8f808"/>
<rect x="87.00" y="281.00" width="1.00" height="2.00" fill="#f8f808"/>
<rect x="88.00" y="292.00" width="1.00" height="1.00" fill="#f8f808"/>
<rect x="90.00" y="282.00" width="1.00" height="1.00" fill="#f8f808"/>
<rect x="90.00" y="292.00" width="1.00" height="3.00" fill="#f8f808"/>
<rect x="91.00" y="281.00" width="1.00" height="2.00" fill="#f8f808"/>
<rect x="91.00" y="292.00" width="1.00" height="2.00" fill="#f8f808"/>
<rect x="93.00" y="281.00" width="1.00" height="2.00" fill="#f8f808"/>
<rect x="93.00" y="292.00" width="1.00" height="3.00" fill="#f8f808"/>
<rect x="95.00" y="282.00" width="1.00" height="1.00" fill="#f8f808"/>
<rect x="223.00" y="236.00" width="91.10" height="8.00" fill="#f8f808"/>
<rect x="223.00" y="235.00" width="1.00" height="1.00" fill="#f8f808"/>
<rect x="223.00" y="244.00" width="1.00" height="2.00" fill="#f8f808"/>
<rect x="224.00" y="244.00" width="1.00" height="3.00" fill="#f8f808"/>
<rect x="225.00" y="232.00" width="1.00" height="4.00" fill="#f8f808"/>
<rect x="226.00" y="244.00" width="1.00" height="1.00" fill="#f8f808"/>
<rect x="227.00" y="234.00" width="1.00" height="2.00" fill="#f8f808"/>
<rect x="227.00" y="244.00" width="1.00" height="1.00" fill="#f8f808"/>
<rect x="228.00" y="244.00" width="1.00" height="1.00" fill="#f8f808"/>
<rect x="229.00" y="234.00" width="1.00" height="2.00" fill="#f8f808"/>
<rect x="229.00" y="244.00" width="1.00" height="3.00" fill="#f8f808"/>
<rect x="230.00" y="233.00" width="1.00" height="3.00" fill="#f8f808"/>
<rect x="231.00" y="233.00" width="1.00" height="3.00" fill="#f8f808"/>
<rect x="231.00" y="244.00" width="1.00" height="1.00" fill="#f8f808"/>
<rect x="232.00" y="244.00" width="1.00" height="3.00" fill="#f8f808"/>
<rect x="233.00" y="235.00" width="1.00" height="1.00" fill="#f8f808"/>
<rect x="233.00" y="244.00" width="1.00" height="2.00" fill="#f8f808"/>
<rect x="234.00" y="235.00" width="1.00" height="1.00" fill="#f8f808"/>
<rect x="235.00" y="244.00" width="1.00" height="2.00" fill="#f8f808"/>
<rect x="236.00" y="244.00" width="1.00" height="2.00" fill="#f8f808"/>
<rect x="237.00" y="233.00" width="1.00" height="3.00" fill="#f8f808"/>
<rect x="238.00" y="232.00" width="1.00" height="4.00" fill="#f8f808"/>
<rect x="238.00" y="244.00" width="1.00" height="1.00" fill="#f8f808"/>
<rect x="239.00" y="233.00" width="1.00" height="3.00" fill="#f8f808"/>
<rect x="239.00" y="244.00" width="1.00" height="2.00" fill="#f8f808"/>
<rect x="240.00" y="244.00" width="1.00" height="2.00" fill="#f8f808"/>
<rect x="241.00" y="244.00" width="1.00" height="2.00" fill="#f8f808"/>
<rect x="243.00" y="233.00" width="1.00" height="3.00" fill="#f8f808"/>
<rect x="244.00" y="244.00" width="1.00" height="1.00" fill="#f8f808"/>
<rect x="245.00" y="235.00" width="1.00" height="1.00" fill="#f8f808"/>
<rect x="245.00" y="244.00" width="1.00" height="1.00" fill="#f8f808"/>
<rect x="246.00" y="234.00" width="1.00" height="2.00" fill="#f8f808"/>
<rect x="246.00" y="244.00" width="1.00" height="3.00" fill="#f8f808"/>
<rect x="248.00" y="233.00" width="1.00" height="3.00" fill="#f8f808"/>
<rect x="249.00" y="233.00" width="1.00" height="3.00" fill="#f8f808"/>
<rect x="249.00" y="244.00" width="1.00" height="3.00" fill="#f8f808"/>
<rect x="250.00" y="235.00" width="1.00" height="1.00" fill="#f8f808"/>
<rect x="251.00" y="232.00" width="1.00" height="4.00" fill="#f8f808"/>
<rect x="251.00" y="244.00" width="1.00" height="3.00" fill="#f8f808"/>
<rect x="252.00" y="234.00" width="1.00" height="2.00" fill="#f8f808"/>
<rect x="252.00" y="244.00" width="1.00" height="3.00" fill="#f8f808"/>
<rect x="253.00" y="244.00" width="1.00" height="1.00" fill="#f8f808"/>
<rect x="254.00" y="244.00" width="1.00" height="2.00" fill="#f8f808"/>
<rect x="255.00" y="233.00" width="1.00" height="3.00" fill="#f8f808"/>
<rect x="255.00" y="244.00" width="1.00" height="1.00" fill="#f8f808"/>
<rect x="257.00" y="233.00" width="1.00" height="3.00" fill="#f8f808"/>
<rect x="257.00" y="244.00" width="1.00" height="3.00" fill="#f8f808"/>
<rect x="258.00" y="244.00" width="1.00" height="3.00" fill="#f8f808"/>
<rect x="259.00" y="235.00" width="1.00" height="1.00" fill="#f8f808"/>
<rect x="261.00" y="244.00" width="1.00" height="2.00" fill="#f8f808"/>
<rect x="262.00" y="244.00" width="1.00" height="2.00" fill="#f8f808"/>
<rect x="263.00" y="234.00" width="1.00" height="2.00" fill="#f8f808"/>
<rect x="264.00" y="235.00" width="1.00" height="1.00" fill="#f8f808"/>
<rect x="264.00" y="244.00" width="1.00" height="1.00" fill="#f8f808"/>
<rect x="265.00" y="233.00" width="1.00" height="3.00" fill="#f8f808"/>
<rect x="265.00" y="244.00" width="1.00" height="3.00" fill="#f8f808"/>
<rect x="267.00" y="235.00" width="1.00" height="1.00" fill="#f8f808"/>
<rect x="268.00" y="234.00" width="1.00" height="2.00" fill="#f8f808"/>
<rect x="269.00" y="244.00" width="1.00" height="2.00" fill="#f8f808"/>
<rect x="270.00" y="233.00" width="1.00" height="3.00" fill="#f8f808"/>
<rect x="270.00" y="244.00" width="1.00" height="1.00" fill="#f8f808"/>
<rect x="271.00" y="234.00" width="1.00" height="2.00" fill="#f8f808"/>
<rect x="272.00" y="244.00" width="1.00" height="2.00" fill="#f8f808"/>
<rect x="273.00" y="233.00" width="1.00" height="3.00" fill="#f8f808"/>
<rect x="274.00" y="232.00" width="1.00" height="4.00" fill="#f8f808"/>
<rect x="275.00" y="244.00" width="1.00" height="2.00" fill="#f8f808"/>
<rect x="276.00" y="234.00" width="1.00" height="2.00" fill="#f8f808"/>
<rect x="276.00" y="244.00" width="1.00" height="1.00" fill="#f8f808"/>
<rect x="277.00" y="233.00" width="1.00" height="3.00" fill="#f8f808"/>
<rect x="278.00" y="244.00" width="1.00" height="1.00" fill="#f8f808"/>
<rect x="279.00" y="244.00" width="1.00" height="3.00" fill="#f8f808"/>
<rect x="280.00" y="232.00" width="1.00" height="4.00" fill="#f8f808"/>
<rect x="281.00" y="234.00" width="1.00" height="2.00" fill="#f8f808"/>
<rect x="282.00" y="244.00" width="1.00" height="1.00" fill="#f8f808"/>
<rect x="283.00" y="244.00" width="1.00" height="1.00" fill="#f8f808"/>
<rect x="284.00" y="234.00" width="1.00" height="2.00" fill="#f8f808"/>
<rect x="284.00" y="244.00" width="1.00" height="3.00" fill="#f8f808"/>
<rect x="285.00" y="232.00" width="1.00" height="4.00" fill="#f8f808"/>
<rect x="285.00" y="244.00" width="1.00" height="3.00" fill="#f8f808"/>
<rect x="286.00" y="234.00" width="1.00" height="2.00" fill="#f8f808"/>
<rect x="286.00" y="244.00" width="1.00" height="3.00" fill="#f8f808"/>
<rect x="288.00" y="244.00" width="1.00" height="1.00" fill="#f8f808"/>
<rect x="289.00" y="233.00" width="1.00" height="3.00" fill="#f8f808"/>
<rect x="290.00" y="233.00" width="1.00" height="3.00" fill="#f8f808"/>
<rect x="292.00" y="244.00" width="1.00" height="2.00" fill="#f8f808"/>
<rect x="293.00" y="235.00" width="1.00" height="1.00" fill="#f8f808"/>
<rect x="293.00" y="244.00" width="1.00" height="2.00" fill="#f8f808"/>
<rect x="294.00" y="244.00" width="1.00" height="1.00" fill="#f8f808"/>
<rect x="295.00" y="233.00" width="1.00" height="3.00" fill="#f8f808"/>
<rect x="295.00" y="244.00" width="1.00" height="3.00" fill="#f8f808"/>
<rect x="296.00" y="244.00" width="1.00" height="1.00" fill="#f8f808"/>
<rect x="297.00" y="232.00" width="1.00" height="4.00" fill="#f8f808"/>
<rect x="297.00" y="244.00" width="1.00" height="1.00" fill="#f8f808"/>
<rect x="298.00" y="235.00" width="1.00" height="1.00" fill="#f8f808"/>
<rect x="299.00" y="244.00" width="1.00" height="1.00" fill="#f8f808"/>
<rect x="300.00" y="235.00" width="1.00" height="1.00" fill="#f8f808"/>
<rect x="300.00" y="244.00" width="1.00" height="2.00" fill="#f8f808"/>
<rect x="301.00" y="235.00" width="1.00" height="1.00" fill="#f8f808"/>
<rect x="301.00" y="244.00" width="1.00" height="1.00" fill="#f8f808"/>
<rect x="302.00" y="233.00" width="1.00" height="3.00" fill="#f8f808"/>
<rect x="303.00" y="234.00" width="1.00" height="2.00" fill="#f8f808"/>
<rect x="304.00" y="244.00" width="1.00" height="3.00" fill="#f8f808"/>
<rect x="305.00" y="234.00" width="1.00" height="2.00" fill="#f8f808"/>
<rect x="307.00" y="234.00" width="1.00" height="2.00" fill="#f8f808"/>
<rect x="307.00" y="244.00" width="1.00" height="2.00" fill="#f8f808"/>
<rect x="308.00" y="244.00" width="1.00" height="2.00" fill="#f8f808"/>
<rect x="311.00" y="233.00" width="1.00" height="3.00" fill="#f8f808"/>
<rect x="312.00" y="233.00" width="1.00" height="3.00" fill="#f8f808"/>
<rect x="190.30" y="283.00" width="32.10" height="9.00" fill="#f8f808"/>
<rect x="191.00" y="292.00" width="1.00" height="3.00" fill="#f8f808"/>
<rect x="193.00" y="281.00" width="1.00" height="2.00" fill="#f8f808"/>
<rect x="194.00" y="281.00" width="1.00" height="2.00" fill="#f8f808"/>
<rect x="194.00" y="292.00" width="1.00" height="3.00" fill="#f8f808"/>
<rect x="195.00" y="281.00" width="1.00" height="2.00" fill="#f8f808"/>
<rect x="195.00" y="292.00" width="1.00" height="3.00" fill="#f8f808"/>
<rect x="196.00" y="281.00" width="1.00" height="2.00" fill="#f8f808"/>
<rect x="196.00" y="292.00" width="1.00" height="3.00" fill="#f8f808"/>
<rect x="198.00" y="282.00" width="1.00" height="1.00" fill="#f8f808"/>
<rect x="198.00" y="292.00" width="1.00" height="3.00" fill="#f8f808"/>
<rect x="199.00" y="281.00" width="1.00" height="2.00" fill="#f8f808"/>
<rect x="199.00" y="292.00" width="1.00" height="3.00" fill="#f8f808"/>
<rect x="201.00" y="292.00" width="1.00" height="2.00" fill="#f8f808"/>
<rect x="202.00" y="292.00" width="1.00" height="3.00" fill="#f8f808"/>
<rect x="203.00" y="282.00" width="1.00" height="1.00" fill="#f8f808"/>
<rect x="204.00" y="281.00" width="1.00" height="2.00" fill="#f8f808"/>
<rect x="204.00" y="292.00" width="1.00" height="3.00" fill="#f8f808"/>
<rect x="205.00" y="281.00" width="1.00" height="2.00" fill="#f8f808"/>
<rect x="205.00" y="292.00" width="1.00" height="1.00" fill="#f8f808"/>
<rect x="206.00" y="281.00" width="1.00" height="2.00" fill="#f8f808"/>
<rect x="206.00" y="292.00" width="1.00" height="3.00" fill="#f8f808"/>
<rect x="207.00" y="292.00" width="1.00" height="2.00" fill="#f8f808"/>
<rect x="208.00" y="281.00" width="1.00" height="2.00" fill="#f8f808"/>
<rect x="208.00" y="292.00" width="1.00" height="1.00" fill="#f8f808"/>
<rect x="209.00" y="292.00" width="1.00" height="2.00" fill="#f8f808"/>
<rect x="210.00" y="281.00" width="1.00" height="2.00" fill="#f8f808"/>
<rect x="210.00" y="292.00" width="1.00" height="1.00" fill="#f8f808"/>
<rect x="211.00" y="281.00" width="1.00" height="2.00" fill="#f8f808"/>
<rect x="212.00" y="292.00" width="1.00" height="2.00" fill="#f8f808"/>
<rect x="213.00" y="292.00" width="1.00" height="3.00" fill="#f8f808"/>
<rect x="214.00" y="282.00" width="1.00" height="1.00" fill="#f8f808"/>
<rect x="214.00" y="292.00" width="1.00" height="3.00" fill="#f8f808"/>
<rect x="216.00" y="281.00" width="1.00" height="2.00" fill="#f8f808"/>
<rect x="216.00" y="292.00" width="1.00" height="3.00" fill="#f8f808"/>
<rect x="217.00" y="281.00" width="1.00" height="2.00" fill="#f8f808"/>
<rect x="217.00" y="292.00" width="1.00" height="1.00" fill="#f8f808"/>
<rect x="218.00" y="281.00" width="1.00" height="2.00" fill="#f8f808"/>
<rect x="219.00" y="281.00" width="1.00" height="2.00" fill="#f8f808"/>
<rect x="220.00" y="281.00" width="1.00" height="2.00" fill="#f8f808"/>
<rect x="221.00" y="281.00" width="1.00" height="2.00" fill="#f8f808"/>
<rect x="348.80" y="236.00" width="91.10" height="8.00" fill="#f8f808"/>
<rect x="349.00" y="232.00" width="1.00" height="4.00" fill="#f8f808"/>
<rect x="349.00" y="244.00" width="1.00" height="1.00" fill="#f8f808"/>
<rect x="350.00" y="244.00" width="1.00" height="1.00" fill="#f8f808"/>
<rect x="351.00" y="244.00" width="1.00" height="2.00" fill="#f8f808"/>
<rect x="352.00" y="233.00" width="1.00" height="3.00" fill="#f8f808"/>
<rect x="353.00" y="234.00" width="1.00" height="2.00" fill="#f8f808"/>
<rect x="354.00" y="233.00" width="1.00" height="3.00" fill="#f8f808"/>
<rect x="354.00" y="244.00" width="1.00" height="3.00" fill="#f8f808"/>
<rect x="355.00" y="244.00" width="1.00" height="1.00" fill="#f8f808"/>
<rect x="356.00" y="235.00" width="1.00" height="1.00" fill="#f8f808"/>
<rect x="356.00" y="244.00" width="1.00" height="2.00" fill="#f8f808"/>
<rect x="357.00" y="233.00" width="1.00" height="3.00" fill="#f8f808"/>
<rect x="357.00" y="244.00" width="1.00" height="3.00" fill="#f8f808"/>
<rect x="358.00" y="244.00" width="1.00" height="3.00" fill="#f8f808"/>
<rect x="360.00" y="244.00" width="1.00" height="2.00" fill="#f8f808"/>
<rect x="361.00" y="235.00" width="1.00" height="1.00" fill="#f8f808"/>
<rect x="361.00" y="244.00" width="1.00" height="2.00" fill="#f8f808"/>
<rect x="362.00" y="232.00" width="1.00" height="4.00" fill="#f8f808"/>
<rect x="364.00" y="235.00" width="1.00" height="1.00" fill="#f8f808"/>
<rect x="365.00" y="234.00" width="1.00" height="2.00" fill="#f8f808"/>
<rect x="366.00" y="244.00" width="1.00" height="1.00" fill="#f8f808"/>
<rect x="368.00" y="234.00" width="1.00" height="2.00" fill="#f8f808"/>
<rect x="368.00" y="244.00" width="1.00" height="1.00" fill="#f8f808"/>
<rect x="369.00" y="244.00" width="1.00" height="3.00" fill="#f8f808"/>
<rect x="370.00" y="234.00" width="1.00" height="2.00" fill="#f8f808"/>
<rect x="370.00" y="244.00" width="1.00" height="1.00" fill="#f8f808"/>
<rect x="372.00" y="244.00" width="1.00" height="2.00" fill="#f8f808"/>
<rect x="374.00" y="234.00" width="1.00" height="2.00" fill="#f8f808"/>
<rect x="374.00" y="244.00" width="1.00" height="1.00" fill="#f8f808"/>
<rect x="375.00" y="233.00" width="1.00" height="3.00" fill="#f8f808"/>
<rect x="375.00" y="244.00" width="1.00" height="2.00" fill="#f8f808"/>
<rect x="376.00" y="234.00" width="1.00" height="2.00" fill="#f8f808"/>
<rect x="376.00" y="244.00" width="1.00" height="2.00" fill="#f8f808"/>
<rect x="377.00" y="244.00" width="1.00" height="2.00" fill="#f8f808"/>
<rect x="378.00" y="244.00" width="1.00" height="1.00" fill="#f8f808"/>
<rect x="380.00" y="244.00" width="1.00" height="1.00" fill="#f8f808"/>
<rect x="381.00" y="235.00" width="1.00" height="1.00" fill="#f8f808"/>
<rect x="381.00" y="244.00" width="1.00" height="2.00" fill="#f8f808"/>
<rect x="383.00" y="244.00" width="1.00" height="2.00" fill="#f8f808"/>
<rect x="384.00" y="233.00" width="1.00" height="3.00" fill="#f8f808"/>
<rect x="385.00" y="234.00" width="1.00" height="2.00" fill="#f8f808"/>
<rect x="385.00" y="244.00" width="1.00" height="1.00" fill="#f8f808"/>
<rect x="386.00" y="233.00" width="1.00" height="3.00" fill="#f8f808"/>
<rect x="387.00" y="235.00" width="1.00" height="1.00" fill="#f8f808"/>
<rect x="388.00" y="233.00" width="1.00" height="3.00" fill="#f8f808"/>
<rect x="388.00" y="244.00" width="1.00" height="3.00" fill="#f8f808"/>
<rect x="389.00" y="244.00" width="1.00" height="3.00" fill="#f8f808"/>
<rect x="390.00" y="235.00" width="1.00" height="1.00" fill="#f8f808"/>
<rect x="390.00" y="244.00" width="1.00" height="2.00" fill="#f8f808"/>
<rect x="391.00" y="244.00" width="1.00" height="1.00" fill="#f8f808"/>
<rect x="392.00" y="244.00" width="1.00" height="3.00" fill="#f8f808"/>
<rect x="393.00" y="235.00" width="1.00" height="1.00" fill="#f8f808"/>
<rect x="395.00" y="233.00" width="1.00" height="3.00" fill="#f8f808"/>
<rect x="397.00" y="235.00" width="1.00" height="1.00" fill="#f8f808"/>
<rect x="397.00" y="244.00" width="1.00" height="3.00" fill="#f8f808"/>
<rect x="398.00" y="235.00" width="1.00" height="1.00" fill="#f8f808"/>
<rect x="398.00" y="244.00" width="1.00" height="1.00" fill="#f8f808"/>
<rect x="400.00" y="233.00" width="1.00" height="3.00" fill="#f8f808"/>
<rect x="401.00" y="244.00" width="1.00" height="2.00" fill="#f8f808"/>
<rect x="402.00" y="235.00" width="1.00" height="1.00" fill="#f8f808"/>
<rect x="403.00" y="235.00" width="1.00" height="1.00" fill="#f8f808"/>
<rect x="404.00" y="235.00" width="1.00" height="1.00" fill="#f8f808"/>
<rect x="406.00" y="244.00" width="1.00" height="2.00" fill="#f8f808"/>
<rect x="407.00" y="232.00" width="1.00" height="4.00" fill="#f8f808"/>
<rect x="407.00" y="244.00" width="1.00" height="3.00" fill="#f8f808"/>
<rect x="408.00" y="244.00" width="1.00" height="1.00" fill="#f8f808"/>
<rect x="409.00" y="235.00" width="1.00" height="1.00" fill="#f8f808"/>
<rect x="410.00" y="233.00" width="1.00" height="3.00" fill="#f8f808"/>
<rect x="411.00" y="235.00" width="1.00" height="1.00" fill="#f8f808"/>
<rect x="412.00" y="233.00" width="1.00" height="3.00" fill="#f8f808"/>
<rect x="412.00" y="244.00" width="1.00" height="1.00" fill="#f8f808"/>
<rect x="413.00" y="244.00" width="1.00" height="1.00" fill="#f8f808"/>
<rect x="415.00" y="234.00" width="1.00" height="2.00" fill="#f8f808"/>
<rect x="415.00" y="244.00" width="1.00" height="1.00" fill="#f8f808"/>
<rect x="416.00" y="244.00" width="1.00" height="1.00" fill="#f8f808"/>
<rect x="417.00" y="234.00" width="1.00" height="2.00" fill="#f8f808"/>
<rect x="418.00" y="244.00" width="1.00" height="1.00" fill="#f8f808"/>
<rect x="419.00" y="234.00" width="1.00" height="2.00" fill="#f8f808"/>
<rect x="419.00" y="244.00" width="1.00" height="1.00" fill="#f8f808"/>
<rect x="420.00" y="244.00" width="1.00" height="3.00" fill="#f8f808"/>
<rect x="422.00" y="235.00" width="1.00" height="1.00" fill="#f8f808"/>
<rect x="423.00" y="234.00" width="1.00" height="2.00" fill="#f8f808"/>
<rect x="423.00" y="244.00" width="1.00" height="2.00" fill="#f8f808"/>
<rect x="424.00" y="233.00" width="1.00" height="3.00" fill="#f8f808"/>
<rect x="424.00" y="244.00" width="1.00" height="1.00" fill="#f8f808"/>
<rect x="425.00" y="244.00" width="1.00" height="1.00" fill="#f8f808"/>
<rect x="426.00" y="244.00" width="1.00" height="3.00" fill="#f8f808"/>
<rect x="428.00" y="244.00" width="1.00" height="1.00" fill="#f8f808"/>
<rect x="429.00" y="233.00" width="1.00" height="3.00" fill="#f8f808"/>
<rect x="429.00" y="244.00" width="1.00" height="3.00" fill="#f8f808"/>
<rect x="430.00" y="244.00" width="1.00" height="2.00" fill="#f8f808"/>
<rect x="431.00" y="233.00" width="1.00" height="3.00" fill="#f8f808"/>
<rect x="432.00" y="235.00" width="1.00" height="1.00" fill="#f8f808"/>
<rect x="433.00" y="235.00" width="1.00" height="1.00" fill="#f8f808"/>
<rect x="434.00" y="244.00" width="1.00" height="1.00" fill="#f8f808"/>
<rect x="435.00" y="235.00" width="1.00" height="1.00" fill="#f8f808"/>
<rect x="436.00" y="234.00" width="1.00" height="2.00" fill="#f8f808"/>
<rect x="436.00" y="244.00" width="1.00" height="3.00" fill="#f8f808"/>
<rect x="437.00" y="234.00" width="1.00" height="2.00" fill="#f8f808"/>
<rect x="437.00" y="244.00" width="1.00" height="3.00" fill="#f8f808"/>
<rect x="438.00" y="233.00" width="1.00" height="3.00" fill="#f8f808"/>
<rect x="438.00" y="244.00" width="1.00" height="1.00" fill="#f8f808"/>
<rect x="316.10" y="283.00" width="32.10" height="9.00" fill="#f8f808"/>
<rect x="317.00" y="282.00" width="1.00" height="1.00" fill="#f8f808"/>
<rect x="319.00" y="282.00" width="1.00" height="1.00" fill="#f8f808"/>
<rect x="320.00" y="282.00" width="1.00" height="1.00" fill="#f8f808"/>
<rect x="320.00" y="292.00" width="1.00" height="3.00" fill="#f8f808"/>
<rect x="322.00" y="282.00" width="1.00" height="1.00" fill="#f8f808"/>
<rect x="322.00" y="292.00" width="1.00" height="2.00" fill="#f8f808"/>
<rect x="323.00" y="292.00" width="1.00" height="3.00" fill="#f8f808"/>
<rect x="324.00" y="281.00" width="1.00" height="2.00" fill="#f8f808"/>
<rect x="325.00" y="282.00" width="1.00" height="1.00" fill="#f8f808"/>
<rect x="325.00" y="292.00" width="1.00" height="3.00" fill="#f8f808"/>
<rect x="326.00" y="292.00" width="1.00" height="1.00" fill="#f8f808"/>
<rect x="327.00" y="292.00" width="1.00" height="2.00" fill="#f8f808"/>
<rect x="328.00" y="292.00" width="1.00" height="3.00" fill="#f8f808"/>
<rect x="329.00" y="292.00" width="1.00" height="2.00" fill="#f8f808"/>
<rect x="330.00" y="281.00" width="1.00" height="2.00" fill="#f8f808"/>
<rect x="331.00" y="281.00" width="1.00" height="2.00" fill="#f8f808"/>
<rect x="332.00" y="281.00" width="1.00" height="2.00" fill="#f8f808"/>
<rect x="332.00" y="292.00" width="1.00" height="1.00" fill="#f8f808"/>
<rect x="333.00" y="282.00" width="1.00" height="1.00" fill="#f8f808"/>
<rect x="333.00" y="292.00" width="1.00" height="2.00" fill="#f8f808"/>
<rect x="334.00" y="292.00" width="1.00" height="1.00" fill="#f8f808"/>
<rect x="336.00" y="282.00" width="1.00" height="1.00" fill="#f8f808"/>
<rect x="337.00" y="281.00" width="1.00" height="2.00" fill="#f8f808"/>
<rect x="337.00" y="292.00" width="1.00" height="2.00" fill="#f8f808"/>
<rect x="339.00" y="292.00" width="1.00" height="3.00" fill="#f8f808"/>
<rect x="340.00" y="281.00" width="1.00" height="2.00" fill="#f8f808"/>
<rect x="341.00" y="281.00" width="1.00" height="2.00" fill="#f8f808"/>
<rect x="342.00" y="292.00" width="1.00" height="3.00" fill="#f8f808"/>
<rect x="343.00" y="281.00" width="1.00" height="2.00" fill="#f8f808"/>
<rect x="347.00" y="281.00" width="1.00" height="2.00" fill="#f8f808"/>
<rect x="474.60" y="236.00" width="91.10" height="8.00" fill="#f8f808"/>
<rect x="476.00" y="244.00" width="1.00" height="2.00" fill="#f8f808"/>
<rect x="478.00" y="233.00" width="1.00" height="3.00" fill="#f8f808"/>
<rect x="478.00" y="244.00" width="1.00" height="1.00" fill="#f8f808"/>
<rect x="481.00" y="233.00" width="1.00" height="3.00" fill="#f8f808"/>
<rect x="484.00" y="235.00" width="1.00" height="1.00" fill="#f8f808"/>
<rect x="484.00" y="244.00" width="1.00" height="3.00" fill="#f8f808"/>
<rect x="485.00" y="244.00" width="1.00" height="3.00" fill="#f8f808"/>
<rect x="486.00" y="244.00" width="1.00" height="2.00" fill="#f8f808"/>
<rect x="487.00" y="234.00" width="1.00" height="2.00" fill="#f8f808"/>
<rect x="489.00" y="234.00" width="1.00" height="2.00" fill="#f8f808"/>
<rect x="490.00" y="234.00" width="1.00" height="2.00" fill="#f8f808"/>
<rect x="490.00" y="244.00" width="1.00" height="1.00" fill="#f8f808"/>
<rect x="491.00" y="232.00" width="1.00" height="4.00" fill="#f8f808"/>
<rect x="491.00" y="244.00" width="1.00" height="1.00" fill="#f8f808"/>
<rect x="492.00" y="235.00" width="1.00" height="1.00" fill="#f8f808"/>
<rect x="493.00" y="234.00" width="1.00" height="2.00" fill="#f8f808"/>
<rect x="493.00" y="244.00" width="1.00" height="3.00" fill="#f8f808"/>
<rect x="494.00" y="244.00" width="1.00" height="3.00" fill="#f8f808"/>
<rect x="495.00" y="244.00" width="1.00" height="1.00" fill="#f8f808"/>
<rect x="496.00" y="234.00" width="1.00" height="2.00" fill="#f8f808"/>
<rect x="497.00" y="235.00" width="1.00" height="1.00" fill="#f8f808"/>
<rect x="497.00" y="244.00" width="1.00" height="3.00" fill="#f8f808"/>
<rect x="499.00" y="234.00" width="1.00" height="2.00" fill="#f8f808"/>
<rect x="500.00" y="233.00" width="1.00" height="3.00" fill="#f8f808"/>
<rect x="500.00" y="244.00" width="1.00" height="1.00" fill="#f8f808"/>
<rect x="501.00" y="235.00" width="1.00" height="1.00" fill="#f8f808"/>
<rect x="501.00" y="244.00" width="1.00" height="1.00" fill="#f8f808"/>
<rect x="502.00" y="235.00" width="1.00" height="1.00" fill="#f8f808"/>
<rect x="502.00" y="244.00" width="1.00" height="3.00" fill="#f8f808"/>
<rect x="503.00" y="234.00" width="1.00" height="2.00" fill="#f8f808"/>
<rect x="506.00" y="232.00" width="1.00" height="4.00" fill="#f8f808"/>
<rect x="507.00" y="244.00" width="1.00" height="3.00" fill="#f8f808"/>
<rect x="508.00" y="234.00" width="1.00" height="2.00" fill="#f8f808"/>
<rect x="509.00" y="233.00" width="1.00" height="3.00" fill="#f8f808"/>
<rect x="511.00" y="244.00" width="1.00" height="3.00" fill="#f8f808"/>
<rect x="512.00" y="234.00" width="1.00" height="2.00" fill="#f8f808"/>
<rect x="513.00" y="232.00" width="1.00" height="4.00" fill="#f8f808"/>
<rect x="514.00" y="234.00" width="1.00" height="2.00" fill="#f8f808"/>
<rect x="514.00" y="244.00" width="1.00" height="3.00" fill="#f8f808"/>
<rect x="516.00" y="244.00" width="1.00" height="2.00" fill="#f8f808"/>
<rect x="517.00" y="235.00" width="1.00" height="1.00" fill="#f8f808"/>
<rect x="518.00" y="244.00" width="1.00" height="3.00" fill="#f8f808"/>
<rect x="519.00" y="244.00" width="1.00" height="2.00" fill="#f8f808"/>
<rect x="520.00" y="233.00" width="1.00" height="3.00" fill="#f8f808"/>
<rect x="521.00" y="232.00" width="1.00" height="4.00" fill="#f8f808"/>
<rect x="521.00" y="244.00" width="1.00" height="3.00" fill="#f8f808"/>
<rect x="522.00" y="233.00" width="1.00" height="3.00" fill="#f8f808"/>
<rect x="524.00" y="244.00" width="1.00" height="3.00" fill="#f8f808"/>
<rect x="525.00" y="234.00" width="1.00" height="2.00" fill="#f8f808"/>
<rect x="525.00" y="244.00" width="1.00" height="3.00" fill="#f8f808"/>
<rect x="526.00" y="235.00" width="1.00" height="1.00" fill="#f8f808"/>
<rect x="527.00" y="235.00" width="1.00" height="1.00" fill="#f8f808"/>
<rect x="527.00" y="244.00" width="1.00" height="1.00" fill="#f8f808"/>
<rect x="528.00" y="233.00" width="1.00" height="3.00" fill="#f8f808"/>
<rect x="528.00" y="244.00" width="1.00" height="3.00" fill="#f8f808"/>
<rect x="529.00" y="235.00" width="1.00" height="1.00" fill="#f8f808"/>
<rect x="531.00" y="233.00" width="1.00" height="3.00" fill="#f8f808"/>
<rect x="531.00" y="244.00" width="1.00" height="2.00" fill="#f8f808"/>
<rect x="532.00" y="244.00" width="1.00" height="3.00" fill="#f8f808"/>
<rect x="533.00" y="234.00" width="1.00" height="2.00" fill="#f8f808"/>
<rect x="533.00" y="244.00" width="1.00" height="3.00" fill="#f8f808"/>
<rect x="534.00" y="234.00" width="1.00" height="2.00" fill="#f8f808"/>
<rect x="534.00" y="244.00" width="1.00" height="2.00" fill="#f8f808"/>
<rect x="535.00" y="235.00" width="1.00" height="1.00" fill="#f8f808"/>
<rect x="536.00" y="244.00" width="1.00" height="2.00" fill="#f8f808"/>
<rect x="538.00" y="235.00" width="1.00" height="1.00" fill="#f8f808"/>
<rect x="538.00" y="244.00" width="1.00" height="3.00" fill="#f8f808"/>
<rect x="539.00" y="233.00" width="1.00" height="3.00" fill="#f8f808"/>
<rect x="540.00" y="235.00" width="1.00" height="1.00" fill="#f8f808"/>
<rect x="540.00" y="244.00" width="1.00" height="2.00" fill="#f8f808"/>
<rect x="541.00" y="244.00" width="1.00" height="2.00" fill="#f8f808"/>
<rect x="542.00" y="244.00" width="1.00" height="2.00" fill="#f8f808"/>
<rect x="543.00" y="244.00" width="1.00" height="3.00" fill="#f8f808"/>
<rect x="544.00" y="244.00" width="1.00" height="2.00" fill="#f8f808"/>
<rect x="545.00" y="235.00" width="1.00" height="1.00" fill="#f8f808"/>
<rect x="546.00" y="244.00" width="1.00" height="3.00" fill="#f8f808"/>
<rect x="547.00" y="244.00" width="1.00" height="3.00" fill="#f8f808"/>
<rect x="548.00" y="234.00" width="1.00" height="2.00" fill="#f8f808"/>
<rect x="548.00" y="244.00" width="1.00" height="1.00" fill="#f8f808"/>
<rect x="551.00" y="232.00" width="1.00" height="4.00" fill="#f8f808"/>
<rect x="552.00" y="234.00" width="1.00" height="2.00" fill="#f8f808"/>
<rect x="552.00" y="244.00" width="1.00" height="2.00" fill="#f8f808"/>
<rect x="553.00" y="235.00" width="1.00" height="1.00" fill="#f8f808"/>
<rect x="554.00" y="233.00" width="1.00" height="3.00" fill="#f8f808"/>
<rect x="554.00" y="244.00" width="1.00" height="3.00" fill="#f8f808"/>
<rect x="555.00" y="244.00" width="1.00" height="1.00" fill="#f8f808"/>
<rect x="556.00" y="235.00" width="1.00" height="1.00" fill="#f8f808"/>
<rect x="557.00" y="235.00" width="1.00" height="1.00" fill="#f8f808"/>
<rect x="559.00" y="233.00" width="1.00" height="3.00" fill="#f8f808"/>
<rect x="561.00" y="244.00" width="1.00" height="1.00" fill="#f8f808"/>
<rect x="563.00" y="234.00" width="1.00" height="2.00" fill="#f8f808"/>
<rect x="441.90" y="283.00" width="32.10" height="9.00" fill="#f8f808"/>
<rect x="443.00" y="281.00" width="1.00" height="2.00" fill="#f8f808"/>
<rect x="444.00" y="282.00" width="1.00" height="1.00" fill="#f8f808"/>
<rect x="445.00" y="292.00" width="1.00" height="3.00" fill="#f8f808"/>
<rect x="446.00" y="282.00" width="1.00" height="1.00" fill="#f8f808"/>
<rect x="446.00" y="292.00" width="1.00" height="2.00" fill="#f8f808"/>
<rect x="448.00" y="292.00" width="1.00" height="3.00" fill="#f8f808"/>
<rect x="449.00" y="282.00" width="1.00" height="1.00" fill="#f8f808"/>
<rect x="450.00" y="282.00" width="1.00" height="1.00" fill="#f8f808"/>
<rect x="450.00" y="292.00" width="1.00" height="1.00" fill="#f8f808"/>
<rect x="451.00" y="282.00" width="1.00" height="1.00" fill="#f8f808"/>
<rect x="453.00" y="281.00" width="1.00" height="2.00" fill="#f8f808"/>
<rect x="453.00" y="292.00" width="1.00" height="1.00" fill="#f8f808"/>
<rect x="454.00" y="281.00" width="1.00" height="2.00" fill="#f8f808"/>
<rect x="455.00" y="282.00" width="1.00" height="1.00" fill="#f8f808"/>
<rect x="455.00" y="292.00" width="1.00" height="1.00" fill="#f8f808"/>
<rect x="456.00" y="282.00" width="1.00" height="1.00" fill="#f8f808"/>
<rect x="456.00" y="292.00" width="1.00" height="1.00" fill="#f8f808"/>
<rect x="457.00" y="281.00" width="1.00" height="2.00" fill="#f8f808"/>
<rect x="457.00" y="292.00" width="1.00" height="1.00" fill="#f8f808"/>
<rect x="458.00" y="292.00" width="1.00" height="1.00" fill="#f8f808"/>
<rect x="459.00" y="292.00" width="1.00" height="3.00" fill="#f8f808"/>
<rect x="460.00" y="292.00" width="1.00" height="3.00" fill="#f8f808"/>
<rect x="463.00" y="281.00" width="1.00" height="2.00" fill="#f8f808"/>
<rect x="463.00" y="292.00" width="1.00" height="2.00" fill="#f8f808"/>
<rect x="464.00" y="292.00" width="1.00" height="3.00" fill="#f8f808"/>
<rect x="466.00" y="282.00" width="1.00" height="1.00" fill="#f8f808"/>
<rect x="466.00" y="292.00" width="1.00" height="1.00" fill="#f8f808"/>
<rect x="467.00" y="282.00" width="1.00" height="1.00" fill="#f8f808"/>
<rect x="467.00" y="292.00" width="1.00" height="3.00" fill="#f8f808"/>
<rect x="468.00" y="282.00" width="1.00" height="1.00" fill="#f8f808"/>
<rect x="470.00" y="281.00" width="1.00" height="2.00" fill="#f8f808"/>
<rect x="473.00" y="282.00" width="1.00" height="1.00" fill="#f8f808"/>
<rect x="473.00" y="292.00" width="1.00" height="3.00" fill="#f8f808"/>
<rect x="600.40" y="236.00" width="91.10" height="8.00" fill="#f8f808"/>
<rect x="602.00" y="234.00" width="1.00" height="2.00" fill="#f8f808"/>
<rect x="603.00" y="244.00" width="1.00" height="2.00" fill="#f8f808"/>
<rect x="604.00" y="235.00" width="1.00" height="1.00" fill="#f8f808"/>
<rect x="605.00" y="244.00" width="1.00" height="1.00" fill="#f8f808"/>
<rect x="606.00" y="244.00" width="1.00" height="1.00" fill="#f8f808"/>
<rect x="607.00" y="232.00" width="1.00" height="4.00" fill="#f8f808"/>
<rect x="607.00" y="244.00" width="1.00" height="2.00" fill="#f8f808"/>
<rect x="608.00" y="235.00" width="1.00" height="1.00" fill="#f8f808"/>
<rect x="609.00" y="244.00" width="1.00" height="1.00" fill="#f8f808"/>
<rect x="610.00" y="244.00" width="1.00" height="2.00" fill="#f8f808"/>
<rect x="611.00" y="235.00" width="1.00" height="1.00" fill="#f8f808"/>
<rect x="611.00" y="244.00" width="1.00" height="3.00" fill="#f8f808"/>
<rect x="612.00" y="235.00" width="1.00" height="1.00" fill="#f8f808"/>
<rect x="614.00" y="233.00" width="1.00" height="3.00" fill="#f8f808"/>
<rect x="615.00" y="232.00" width="1.00" height="4.00" fill="#f8f808"/>
<rect x="615.00" y="244.00" width="1.00" height="1.00" fill="#f8f808"/>
<rect x="616.00" y="235.00" width="1.00" height="1.00" fill="#f8f808"/>
<rect x="617.00" y="235.00" width="1.00" height="1.00" fill="#f8f808"/>
<rect x="617.00" y="244.00" width="1.00" height="1.00" fill="#f8f808"/>
<rect x="618.00" y="235.00" width="1.00" height="1.00" fill="#f8f808"/>
<rect x="618.00" y="244.00" width="1.00" height="3.00" fill="#f8f808"/>
<rect x="619.00" y="235.00" width="1.00" height="1.00" fill="#f8f808"/>
<rect x="620.00" y="233.00" width="1.00" height="3.00" fill="#f8f808"/>
<rect x="621.00" y="233.00" width="1.00" height="3.00" fill="#f8f808"/>
<rect x="622.00" y="235.00" width="1.00" height="1.00" fill="#f8f808"/>
<rect x="623.00" y="235.00" width="1.00" height="1.00" fill="#f8f808"/>
<rect x="623.00" y="244.00" width="1.00" height="1.00" fill="#f8f808"/>
<rect x="624.00" y="244.00" width="1.00" height="3.00" fill="#f8f808"/>
<rect x="626.00" y="244.00" width="1.00" height="1.00" fill="#f8f808"/>
<rect x="628.00" y="244.00" width="1.00" height="3.00" fill="#f8f808"/>
<rect x="630.00" y="233.00" width="1.00" height="3.00" fill="#f8f808"/>
<rect x="630.00" y="244.00" width="1.00" height="2.00" fill="#f8f808"/>
<rect x="631.00" y="244.00" width="1.00" height="2.00" fill="#f8f808"/>
<rect x="632.00" y="244.00" width="1.00" height="1.00" fill="#f8f808"/>
<rect x="634.00" y="233.00" width="1.00" height="3.00" fill="#f8f808"/>
<rect x="636.00" y="244.00" width="1.00" height="1.00" fill="#f8f808"/>
<rect x="637.00" y="244.00" width="1.00" height="1.00" fill="#f8f808"/>
<rect x="638.00" y="235.00" width="1.00" height="1.00" fill="#f8f808"/>
<rect x="638.00" y="244.00" width="1.00" height="1.00" fill="#f8f808"/>
<rect x="639.00" y="244.00" width="1.00" height="3.00" fill="#f8f808"/>
<rect x="641.00" y="235.00" width="1.00" height="1.00" fill="#f8f808"/>
<rect x="641.00" y="244.00" width="1.00" height="2.00" fill="#f8f808"/>
<rect x="642.00" y="244.00" width="1.00" height="3.00" fill="#f8f808"/>
<rect x="643.00" y="235.00" width="1.00" height="1.00" fill="#f8f808"/>
<rect x="644.00" y="233.00" width="1.00" height="3.00" fill="#f8f808"/>
<rect x="644.00" y="244.00" width="1.00" height="3.00" fill="#f8f808"/>
<rect x="646.00" y="244.00" width="1.00" height="1.00" fill="#f8f808"/>
<rect x="648.00" y="233.00" width="1.00" height="3.00" fill="#f8f808"/>
<rect x="649.00" y="244.00" width="1.00" height="3.00" fill="#f8f808"/>
<rect x="650.00" y="233.00" width="1.00" height="3.00" fill="#f8f808"/>
<rect x="651.00" y="233.00" width="1.00" height="3.00" fill="#f8f808"/>
<rect x="651.00" y="244.00" width="1.00" height="3.00" fill="#f8f808"/>
<rect x="652.00" y="235.00" width="1.00" height="1.00" fill="#f8f808"/>
<rect x="653.00" y="244.00" width="1.00" height="1.00" fill="#f8f808"/>
<rect x="656.00" y="244.00" width="1.00" height="3.00" fill="#f8f808"/>
<rect x="657.00" y="235.00" width="1.00" height="1.00" fill="#f8f808"/>
<rect x="657.00" y="244.00" width="1.00" height="1.00" fill="#f8f808"/>
<rect x="659.00" y="234.00" width="1.00" height="2.00" fill="#f8f808"/>
<rect x="659.00" y="244.00" width="1.00" height="2.00" fill="#f8f808"/>
<rect x="660.00" y="244.00" width="1.00" height="3.00" fill="#f8f808"/>
<rect x="661.00" y="244.00" width="1.00" height="1.00" fill="#f8f808"/>
<rect x="662.00" y="235.00" width="1.00" height="1.00" fill="#f8f808"/>
<rect x="662.00" y="244.00" width="1.00" height="3.00" fill="#f8f808"/>
<rect x="664.00" y="234.00" width="1.00" height="2.00" fill="#f8f808"/>
<rect x="666.00" y="232.00" width="1.00" height="4.00" fill="#f8f808"/>
<rect x="669.00" y="233.00" width="1.00" height="3.00" fill="#f8f808"/>
<rect x="669.00" y="244.00" width="1.00" height="2.00" fill="#f8f808"/>
<rect x="670.00" y="244.00" width="1.00" height="3.00" fill="#f8f808"/>
<rect x="671.00" y="244.00" width="1.00" height="3.00" fill="#f8f808"/>
<rect x="672.00" y="232.00" width="1.00" height="4.00" fill="#f8f808"/>
<rect x="672.00" y="244.00" width="1.00" height="2.00" fill="#f8f808"/>
<rect x="673.00" y="234.00" width="1.00" height="2.00" fill="#f8f808"/>
<rect x="673.00" y="244.00" width="1.00" height="2.00" fill="#f8f808"/>
<rect x="674.00" y="233.00" width="1.00" height="3.00" fill="#f8f808"/>
<rect x="675.00" y="233.00" width="1.00" height="3.00" fill="#f8f808"/>
<rect x="677.00" y="235.00" width="1.00" height="1.00" fill="#f8f808"/>
<rect x="677.00" y="244.00" width="1.00" height="3.00" fill="#f8f808"/>
<rect x="678.00" y="235.00" width="1.00" height="1.00" fill="#f8f808"/>
<rect x="678.00" y="244.00" width="1.00" height="2.00" fill="#f8f808"/>
<rect x="679.00" y="244.00" width="1.00" height="1.00" fill="#f8f808"/>
<rect x="681.00" y="235.00" width="1.00" height="1.00" fill="#f8f808"/>
<rect x="681.00" y="244.00" width="1.00" height="2.00" fill="#f8f808"/>
<rect x="682.00" y="234.00" width="1.00" height="2.00" fill="#f8f808"/>
<rect x="682.00" y="244.00" width="1.00" height="3.00" fill="#f8f808"/>
<rect x="683.00" y="234.00" width="1.00" height="2.00" fill="#f8f808"/>
<rect x="683.00" y="244.00" width="1.00" height="3.00" fill="#f8f808"/>
<rect x="684.00" y="233.00" width="1.00" height="3.00" fill="#f8f808"/>
<rect x="684.00" y="244.00" width="1.00" height="2.00" fill="#f8f808"/>
<rect x="685.00" y="244.00" width="1.00" height="3.00" fill="#f8f808"/>
<rect x="686.00" y="235.00" width="1.00" height="1.00" fill="#f8f808"/>
<rect x="686.00" y="244.00" width="1.00" height="1.00" fill="#f8f808"/>
<rect x="687.00" y="244.00" width="1.00" height="1.00" fill="#f8f808"/>
<rect x="688.00" y="244.00" width="1.00" height="2.00" fill="#f8f808"/>
<rect x="689.00" y="244.00" width="1.00" height="3.00" fill="#f8f808"/>
<rect x="690.00" y="234.00" width="1.00" height="2.00" fill="#f8f808"/>
<rect x="690.00" y="244.00" width="1.00" height="2.00" fill="#f8f808"/>
<rect x="567.70" y="283.00" width="32.10" height="9.00" fill="#f8f808"/>
<rect x="568.00" y="292.00" width="1.00" height="1.00" fill="#f8f808"/>
<rect x="571.00" y="282.00" width="1.00" height="1.00" fill="#f8f808"/>
<rect x="572.00" y="292.00" width="1.00" height="1.00" fill="#f8f808"/>
<rect x="573.00" y="292.00" width="1.00" height="1.00" fill="#f8f808"/>
<rect x="574.00" y="282.00" width="1.00" height="1.00" fill="#f8f808"/>
<rect x="576.00" y="281.00" width="1.00" height="2.00" fill="#f8f808"/>
<rect x="577.00" y="282.00" width="1.00" height="1.00" fill="#f8f808"/>
<rect x="577.00" y="292.00" width="1.00" height="2.00" fill="#f8f808"/>
<rect x="578.00" y="282.00" width="1.00" height="1.00" fill="#f8f808"/>
<rect x="578.00" y="292.00" width="1.00" height="3.00" fill="#f8f808"/>
<rect x="580.00" y="281.00" width="1.00" height="2.00" fill="#f8f808"/>
<rect x="581.00" y="282.00" width="1.00" height="1.00" fill="#f8f808"/>
<rect x="581.00" y="292.00" width="1.00" height="1.00" fill="#f8f808"/>
<rect x="583.00" y="282.00" width="1.00" height="1.00" fill="#f8f808"/>
<rect x="584.00" y="282.00" width="1.00" height="1.00" fill="#f8f808"/>
<rect x="584.00" y="292.00" width="1.00" height="3.00" fill="#f8f808"/>
<rect x="585.00" y="292.00" width="1.00" height="2.00" fill="#f8f808"/>
<rect x="586.00" y="282.00" width="1.00" height="1.00" fill="#f8f808"/>
<rect x="586.00" y="292.00" width="1.00" height="1.00" fill="#f8f808"/>
<rect x="587.00" y="282.00" width="1.00" height="1.00" fill="#f8f808"/>
<rect x="588.00" y="282.00" width="1.00" height="1.00" fill="#f8f808"/>
<rect x="588.00" y="292.00" width="1.00" height="2.00" fill="#f8f808"/>
<rect x="589.00" y="292.00" width="1.00" height="2.00" fill="#f8f808"/>
<rect x="590.00" y="282.00" width="1.00" height="1.00" fill="#f8f808"/>
<rect x="590.00" y="292.00" width="1.00" height="3.00" fill="#f8f808"/>
<rect x="591.00" y="281.00" width="1.00" height="2.00" fill="#f8f808"/>
<rect x="591.00" y="292.00" width="1.00" height="3.00" fill="#f8f808"/>
<rect x="592.00" y="282.00" width="1.00" height="1.00" fill="#f8f808"/>
<rect x="593.00" y="281.00" width="1.00" height="2.00" fill="#f8f808"/>
<rect x="594.00" y="282.00" width="1.00" height="1.00" fill="#f8f808"/>
<rect x="596.00" y="281.00" width="1.00" height="2.00" fill="#f8f808"/>
<rect x="596.00" y="292.00" width="1.00" height="1.00" fill="#f8f808"/>
<rect x="597.00" y="281.00" width="1.00" height="2.00" fill="#f8f808"/>
<rect x="598.00" y="282.00" width="1.00" height="1.00" fill="#f8f808"/>
<rect x="598.00" y="292.00" width="1.00" height="2.00" fill="#f8f808"/>
<rect x="726.20" y="236.00" width="44.80" height="8.00" fill="#f8f808"/>
<rect x="727.00" y="234.00" width="1.00" height="2.00" fill="#f8f808"/>
<rect x="728.00" y="234.00" width="1.00" height="2.00" fill="#f8f808"/>
<rect x="728.00" y="244.00" width="1.00" height="2.00" fill="#f8f808"/>
<rect x="730.00" y="235.00" width="1.00" height="1.00" fill="#f8f808"/>
<rect x="730.00" y="244.00" width="1.00" height="1.00" fill="#f8f808"/>
<rect x="731.00" y="234.00" width="1.00" height="2.00" fill="#f8f808"/>
<rect x="731.00" y="244.00" width="1.00" height="2.00" fill="#f8f808"/>
<rect x="732.00" y="244.00" width="1.00" height="1.00" fill="#f8f808"/>
<rect x="733.00" y="235.00" width="1.00" height="1.00" fill="#f8f808"/>
<rect x="735.00" y="244.00" width="1.00" height="2.00" fill="#f8f808"/>
<rect x="736.00" y="235.00" width="1.00" height="1.00" fill="#f8f808"/>
<rect x="736.00" y="244.00" width="1.00" height="3.00" fill="#f8f808"/>
<rect x="737.00" y="244.00" width="1.00" height="1.00" fill="#f8f808"/>
<rect x="738.00" y="234.00" width="1.00" height="2.00" fill="#f8f808"/>
<rect x="739.00" y="233.00" width="1.00" height="3.00" fill="#f8f808"/>
<rect x="739.00" y="244.00" width="1.00" height="2.00" fill="#f8f808"/>
<rect x="740.00" y="244.00" width="1.00" height="2.00" fill="#f8f808"/>
<rect x="741.00" y="244.00" width="1.00" height="1.00" fill="#f8f808"/>
<rect x="742.00" y="244.00" width="1.00" height="2.00" fill="#f8f808"/>
<rect x="743.00" y="235.00" width="1.00" height="1.00" fill="#f8f808"/>
<rect x="746.00" y="233.00" width="1.00" height="3.00" fill="#f8f808"/>
<rect x="746.00" y="244.00" width="1.00" height="2.00" fill="#f8f808"/>
<rect x="747.00" y="244.00" width="1.00" height="2.00" fill="#f8f808"/>
<rect x="748.00" y="232.00" width="1.00" height="4.00" fill="#f8f808"/>
<rect x="749.00" y="235.00" width="1.00" height="1.00" fill="#f8f808"/>
<rect x="750.00" y="233.00" width="1.00" height="3.00" fill="#f8f808"/>
<rect x="750.00" y="244.00" width="1.00" height="1.00" fill="#f8f808"/>
<rect x="751.00" y="234.00" width="1.00" height="2.00" fill="#f8f808"/>
<rect x="752.00" y="235.00" width="1.00" height="1.00" fill="#f8f808"/>
<rect x="753.00" y="235.00" width="1.00" height="1.00" fill="#f8f808"/>
<rect x="754.00" y="234.00" width="1.00" height="2.00" fill="#f8f808"/>
<rect x="755.00" y="244.00" width="1.00" height="3.00" fill="#f8f808"/>
<rect x="756.00" y="234.00" width="1.00" height="2.00" fill="#f8f808"/>
<rect x="757.00" y="234.00" width="1.00" height="2.00" fill="#f8f808"/>
<rect x="757.00" y="244.00" width="1.00" height="3.00" fill="#f8f808"/>
<rect x="758.00" y="235.00" width="1.00" height="1.00" fill="#f8f808"/>
<rect x="759.00" y="232.00" width="1.00" height="4.00" fill="#f8f808"/>
<rect x="759.00" y="244.00" width="1.00" height="2.00" fill="#f8f808"/>
<rect x="760.00" y="244.00" width="1.00" height="1.00" fill="#f8f808"/>
<rect x="762.00" y="235.00" width="1.00" height="1.00" fill="#f8f808"/>
<rect x="762.00" y="244.00" width="1.00" height="3.00" fill="#f8f808"/>
<rect x="764.00" y="244.00" width="1.00" height="1.00" fill="#f8f808"/>
<rect x="765.00" y="232.00" width="1.00" height="4.00" fill="#f8f808"/>
<rect x="765.00" y="244.00" width="1.00" height="2.00" fill="#f8f808"/>
<rect x="766.00" y="233.00" width="1.00" height="3.00" fill="#f8f808"/>
<rect x="767.00" y="235.00" width="1.00" height="1.00" fill="#f8f808"/>
<rect x="768.00" y="234.00" width="1.00" height="2.00" fill="#f8f808"/>
<rect x="768.00" y="244.00" width="1.00" height="1.00" fill="#f8f808"/>
<rect x="769.00" y="244.00" width="1.00" height="2.00" fill="#f8f808"/>
<rect x="770.00" y="244.00" width="1.00" height="1.00" fill="#f8f808"/>
<rect x="693.50" y="283.00" width="32.10" height="9.00" fill="#f8f808"/>
<rect x="694.00" y="282.00" width="1.00" height="1.00" fill="#f8f808"/>
<rect x="695.00" y="281.00" width="1.00" height="2.00" fill="#f8f808"/>
<rect x="695.00" y="292.00" width="1.00" height="3.00" fill="#f8f808"/>
<rect x="697.00" y="292.00" width="1.00" height="3.00" fill="#f8f808"/>
<rect x="698.00" y="282.00" width="1.00" height="1.00" fill="#f8f808"/>
<rect x="698.00" y="292.00" width="1.00" height="1.00" fill="#f8f808"/>
<rect x="700.00" y="282.00" width="1.00" height="1.00" fill="#f8f808"/>
<rect x="701.00" y="281.00" width="1.00" height="2.00" fill="#f8f808"/>
<rect x="703.00" y="282.00" width="1.00" height="1.00" fill="#f8f808"/>
<rect x="703.00" y="292.00" width="1.00" height="2.00" fill="#f8f808"/>
<rect x="706.00" y="292.00" width="1.00" height="1.00" fill="#f8f808"/>
<rect x="707.00" y="292.00" width="1.00" height="2.00" fill="#f8f808"/>
<rect x="708.00" y="281.00" width="1.00" height="2.00" fill="#f8f808"/>
<rect x="709.00" y="281.00" width="1.00" height="2.00" fill="#f8f808"/>
<rect x="710.00" y="282.00" width="1.00" height="1.00" fill="#f8f808"/>
<rect x="711.00" y="281.00" width="1.00" height="2.00" fill="#f8f808"/>
<rect x="712.00" y="281.00" width="1.00" height="2.00" fill="#f8f808"/>
<rect x="712.00" y="292.00" width="1.00" height="3.00" fill="#f8f808"/>
<rect x="714.00" y="281.00" width="1.00" height="2.00" fill="#f8f808"/>
<rect x="715.00" y="281.00" width="1.00" height="2.00" fill="#f8f808"/>
<rect x="715.00" y="292.00" width="1.00" height="1.00" fill="#f8f808"/>
<rect x="716.00" y="281.00" width="1.00" height="2.00" fill="#f8f808"/>
<rect x="717.00" y="292.00" width="1.00" height="3.00" fill="#f8f808"/>
<rect x="718.00" y="292.00" width="1.00" height="2.00" fill="#f8f808"/>
<rect x="719.00" y="292.00" width="1.00" height="1.00" fill="#f8f808"/>
<rect x="721.00" y="282.00" width="1.00" height="1.00" fill="#f8f808"/>
<rect x="723.00" y="281.00" width="1.00" height="2.00" fill="#f8f808"/>
<rect x="724.00" y="292.00" width="1.00" height="3.00" fill="#f8f808"/>
<path d="M-63.50,240.00 L-62.10,307.00" stroke="#f8f808" stroke-width="1.3" fill="none"/>
<path d="M-30.20,293.00 L-29.00,229.50" stroke="#f8f808" stroke-width="1.3" fill="none"/>
<rect x="-28.60" y="232.40" width="1.00" height="3.60" fill="#f8f808"/>
<rect x="-27.60" y="233.30" width="1.00" height="2.70" fill="#f8f808"/>
<rect x="-26.60" y="234.20" width="1.00" height="1.80" fill="#f8f808"/>
<rect x="-25.60" y="235.10" width="1.00" height="0.90" fill="#f8f808"/>
<path d="M62.30,240.00 L63.70,307.00" stroke="#f8f808" stroke-width="1.3" fill="none"/>
<path d="M95.60,293.00 L96.80,229.50" stroke="#f8f808" stroke-width="1.3" fill="none"/>
<rect x="97.20" y="232.40" width="1.00" height="3.60" fill="#f8f808"/>
<rect x="98.20" y="233.30" width="1.00" height="2.70" fill="#f8f808"/>
<rect x="99.20" y="234.20" width="1.00" height="1.80" fill="#f8f808"/>
<rect x="100.20" y="235.10" width="1.00" height="0.90" fill="#f8f808"/>
<path d="M188.10,240.00 L189.50,307.00" stroke="#f8f808" stroke-width="1.3" fill="none"/>
<path d="M221.40,293.00 L222.60,229.50" stroke="#f8f808" stroke-width="1.3" fill="none"/>
<rect x="223.00" y="232.40" width="1.00" height="3.60" fill="#f8f808"/>
<rect x="224.00" y="233.30" width="1.00" height="2.70" fill="#f8f808"/>
<rect x="225.00" y="234.20" width="1.00" height="1.80" fill="#f8f808"/>
<rect x="226.00" y="235.10" width="1.00" height="0.90" fill="#f8f808"/>
<path d="M313.90,240.00 L315.30,307.00" stroke="#f8f808" stroke-width="1.3" fill="none"/>
<path d="M347.20,293.00 L348.40,229.50" stroke="#f8f808" stroke-width="1.3" fill="none"/>
<rect x="348.80" y="232.40" width="1.00" height="3.60" fill="#f8f808"/>
<rect x="349.80" y="233.30" width="1.00" height="2.70" fill="#f8f808"/>
<rect x="350.80" y="234.20" width="1.00" height="1.80" fill="#f8f808"/>
<rect x="351.80" y="235.10" width="1.00" height="0.90" fill="#f8f808"/>
<path d="M439.70,240.00 L441.10,307.00" stroke="#f8f808" stroke-width="1.3" fill="none"/>
<path d="M473.00,293.00 L474.20,229.50" stroke="#f8f808" stroke-width="1.3" fill="none"/>
<rect x="474.60" y="232.40" width="1.00" height="3.60" fill="#f8f808"/>
<rect x="475.60" y="233.30" width="1.00" height="2.70" fill="#f8f808"/>
<rect x="476.60" y="234.20" width="1.00" height="1.80" fill="#f8f808"/>
<rect x="477.60" y="235.10" width="1.00" height="0.90" fill="#f8f808"/>
<path d="M565.50,240.00 L566.90,307.00" stroke="#f8f808" stroke-width="1.3" fill="none"/>
<path d="M598.80,293.00 L600.00,229.50" stroke="#f8f808" stroke-width="1.3" fill="none"/>
<rect x="600.40" y="232.40" width="1.00" height="3.60" fill="#f8f808"/>
<rect x="601.40" y="233.30" width="1.00" height="2.70" fill="#f8f808"/>
<rect x="602.40" y="234.20" width="1.00" height="1.80" fill="#f8f808"/>
<rect x="603.40" y="235.10" width="1.00" height="0.90" fill="#f8f808"/>
<path d="M691.30,240.00 L692.70,307.00" stroke="#f8f808" stroke-width="1.3" fill="none"/>
<path d="M724.60,293.00 L725.80,229.50" stroke="#f8f808" stroke-width="1.3" fill="none"/>
<rect x="726.20" y="232.40" width="1.00" height="3.60" fill="#f8f808"/>
<rect x="727.20" y="233.30" width="1.00" height="2.70" fill="#f8f808"/>
<rect x="728.20" y="234.20" width="1.00" height="1.80" fill="#f8f808"/>
<rect x="729.20" y="235.10" width="1.00" height="0.90" fill="#f8f808"/>
<path d="M817.10,240.00 L818.50,307.00" stroke="#f8f808" stroke-width="1.3" fill="none"/>
<path d="M850.40,293.00 L851.60,229.50" stroke="#f8f808" stroke-width="1.3" fill="none"/>
<rect x="852.00" y="232.40" width="1.00" height="3.60" fill="#f8f808"/>
<rect x="853.00" y="233.30" width="1.00" height="2.70" fill="#f8f808"/>
<rect x="854.00" y="234.20" width="1.00" height="1.80" fill="#f8f808"/>
<rect x="855.00" y="235.10" width="1.00" height="0.90" fill="#f8f808"/>
<rect x="21.00" y="365.00" width="42.90" height="9.00" fill="#12f01a"/>
<rect x="21.00" y="374.00" width="1.00" height="1.00" fill="#12f01a"/>
<rect x="23.00" y="374.00" width="1.00" height="1.00" fill="#12f01a"/>
<rect x="27.00" y="374.00" width="1.00" height="1.00" fill="#12f01a"/>
<rect x="28.00" y="374.00" width="1.00" height="1.00" fill="#12f01a"/>
<rect x="31.00" y="364.00" width="1.00" height="1.00" fill="#12f01a"/>
<rect x="32.00" y="362.00" width="1.00" height="3.00" fill="#12f01a"/>
<rect x="32.00" y="374.00" width="1.00" height="1.00" fill="#12f01a"/>
<rect x="34.00" y="364.00" width="1.00" height="1.00" fill="#12f01a"/>
<rect x="34.00" y="374.00" width="1.00" height="1.00" fill="#12f01a"/>
<rect x="35.00" y="364.00" width="1.00" height="1.00" fill="#12f01a"/>
<rect x="35.00" y="374.00" width="1.00" height="1.00" fill="#12f01a"/>
<rect x="36.00" y="364.00" width="1.00" height="1.00" fill="#12f01a"/>
<rect x="37.00" y="363.00" width="1.00" height="2.00" fill="#12f01a"/>
<rect x="37.00" y="374.00" width="1.00" height="1.00" fill="#12f01a"/>
<rect x="38.00" y="363.00" width="1.00" height="2.00" fill="#12f01a"/>
<rect x="39.00" y="374.00" width="1.00" height="1.00" fill="#12f01a"/>
<rect x="40.00" y="363.00" width="1.00" height="2.00" fill="#12f01a"/>
<rect x="40.00" y="374.00" width="1.00" height="1.00" fill="#12f01a"/>
<rect x="41.00" y="374.00" width="1.00" height="1.00" fill="#12f01a"/>
<rect x="42.00" y="363.00" width="1.00" height="2.00" fill="#12f01a"/>
<rect x="42.00" y="374.00" width="1.00" height="1.00" fill="#12f01a"/>
<rect x="44.00" y="363.00" width="1.00" height="2.00" fill="#12f01a"/>
<rect x="45.00" y="364.00" width="1.00" height="1.00" fill="#12f01a"/>
<rect x="46.00" y="362.00" width="1.00" height="3.00" fill="#12f01a"/>
<rect x="46.00" y="374.00" width="1.00" height="1.00" fill="#12f01a"/>
<rect x="48.00" y="364.00" width="1.00" height="1.00" fill="#12f01a"/>
<rect x="49.00" y="363.00" width="1.00" height="2.00" fill="#12f01a"/>
<rect x="49.00" y="374.00" width="1.00" height="1.00" fill="#12f01a"/>
<rect x="50.00" y="374.00" width="1.00" height="1.00" fill="#12f01a"/>
<rect x="51.00" y="363.00" width="1.00" height="2.00" fill="#12f01a"/>
<rect x="51.00" y="374.00" width="1.00" height="1.00" fill="#12f01a"/>
<rect x="52.00" y="374.00" width="1.00" height="1.00" fill="#12f01a"/>
<rect x="53.00" y="363.00" width="1.00" height="2.00" fill="#12f01a"/>
<rect x="53.00" y="374.00" width="1.00" height="1.00" fill="#12f01a"/>
<rect x="55.00" y="363.00" width="1.00" height="2.00" fill="#12f01a"/>
<rect x="56.00" y="374.00" width="1.00" height="1.00" fill="#12f01a"/>
<rect x="57.00" y="363.00" width="1.00" height="2.00" fill="#12f01a"/>
<rect x="59.00" y="374.00" width="1.00" height="1.00" fill="#12f01a"/>
<rect x="60.00" y="363.00" width="1.00" height="2.00" fill="#12f01a"/>
<rect x="60.00" y="374.00" width="1.00" height="1.00" fill="#12f01a"/>
<rect x="61.00" y="364.00" width="1.00" height="1.00" fill="#12f01a"/>
<rect x="61.00" y="374.00" width="1.00" height="1.00" fill="#12f01a"/>
<rect x="62.00" y="364.00" width="1.00" height="1.00" fill="#12f01a"/>
<rect x="62.00" y="374.00" width="1.00" height="1.00" fill="#12f01a"/>
<rect x="97.00" y="365.00" width="92.70" height="9.00" fill="#12f01a"/>
<rect x="97.00" y="362.00" width="1.00" height="3.00" fill="#12f01a"/>
<rect x="99.00" y="363.00" width="1.00" height="2.00" fill="#12f01a"/>
<rect x="100.00" y="364.00" width="1.00" height="1.00" fill="#12f01a"/>
<rect x="101.00" y="364.00" width="1.00" height="1.00" fill="#12f01a"/>
<rect x="101.00" y="374.00" width="1.00" height="1.00" fill="#12f01a"/>
<rect x="102.00" y="363.00" width="1.00" height="2.00" fill="#12f01a"/>
<rect x="103.00" y="363.00" width="1.00" height="2.00" fill="#12f01a"/>
<rect x="103.00" y="374.00" width="1.00" height="1.00" fill="#12f01a"/>
<rect x="104.00" y="374.00" width="1.00" height="1.00" fill="#12f01a"/>
<rect x="105.00" y="363.00" width="1.00" height="2.00" fill="#12f01a"/>
<rect x="105.00" y="374.00" width="1.00" height="1.00" fill="#12f01a"/>
<rect x="106.00" y="362.00" width="1.00" height="3.00" fill="#12f01a"/>
<rect x="106.00" y="374.00" width="1.00" height="1.00" fill="#12f01a"/>
<rect x="108.00" y="362.00" width="1.00" height="3.00" fill="#12f01a"/>
<rect x="108.00" y="374.00" width="1.00" height="1.00" fill="#12f01a"/>
<rect x="110.00" y="374.00" width="1.00" height="1.00" fill="#12f01a"/>
<rect x="111.00" y="364.00" width="1.00" height="1.00" fill="#12f01a"/>
<rect x="111.00" y="374.00" width="1.00" height="1.00" fill="#12f01a"/>
<rect x="112.00" y="364.00" width="1.00" height="1.00" fill="#12f01a"/>
<rect x="112.00" y="374.00" width="1.00" height="1.00" fill="#12f01a"/>
<rect x="113.00" y="374.00" width="1.00" height="1.00" fill="#12f01a"/>
<rect x="114.00" y="362.00" width="1.00" height="3.00" fill="#12f01a"/>
<rect x="114.00" y="374.00" width="1.00" height="1.00" fill="#12f01a"/>
<rect x="116.00" y="374.00" width="1.00" height="1.00" fill="#12f01a"/>
<rect x="118.00" y="363.00" width="1.00" height="2.00" fill="#12f01a"/>
<rect x="118.00" y="374.00" width="1.00" height="1.00" fill="#12f01a"/>
<rect x="119.00" y="374.00" width="1.00" height="1.00" fill="#12f01a"/>
<rect x="120.00" y="374.00" width="1.00" height="1.00" fill="#12f01a"/>
<rect x="121.00" y="374.00" width="1.00" height="1.00" fill="#12f01a"/>
<rect x="124.00" y="363.00" width="1.00" height="2.00" fill="#12f01a"/>
<rect x="125.00" y="374.00" width="1.00" height="1.00" fill="#12f01a"/>
<rect x="127.00" y="363.00" width="1.00" height="2.00" fill="#12f01a"/>
<rect x="129.00" y="363.00" width="1.00" height="2.00" fill="#12f01a"/>
<rect x="130.00" y="363.00" width="1.00" height="2.00" fill="#12f01a"/>
<rect x="130.00" y="374.00" width="1.00" height="1.00" fill="#12f01a"/>
<rect x="131.00" y="363.00" width="1.00" height="2.00" fill="#12f01a"/>
<rect x="131.00" y="374.00" width="1.00" height="1.00" fill="#12f01a"/>
<rect x="132.00" y="363.00" width="1.00" height="2.00" fill="#12f01a"/>
<rect x="135.00" y="374.00" width="1.00" height="1.00" fill="#12f01a"/>
<rect x="137.00" y="363.00" width="1.00" height="2.00" fill="#12f01a"/>
<rect x="137.00" y="374.00" width="1.00" height="1.00" fill="#12f01a"/>
<rect x="138.00" y="362.00" width="1.00" height="3.00" fill="#12f01a"/>
<rect x="139.00" y="374.00" width="1.00" height="1.00" fill="#12f01a"/>
<rect x="141.00" y="362.00" width="1.00" height="3.00" fill="#12f01a"/>
<rect x="142.00" y="362.00" width="1.00" height="3.00" fill="#12f01a"/>
<rect x="143.00" y="374.00" width="1.00" height="1.00" fill="#12f01a"/>
<rect x="145.00" y="363.00" width="1.00" height="2.00" fill="#12f01a"/>
<rect x="145.00" y="374.00" width="1.00" height="1.00" fill="#12f01a"/>
<rect x="146.00" y="363.00" width="1.00" height="2.00" fill="#12f01a"/>
<rect x="147.00" y="374.00" width="1.00" height="1.00" fill="#12f01a"/>
<rect x="148.00" y="364.00" width="1.00" height="1.00" fill="#12f01a"/>
<rect x="148.00" y="374.00" width="1.00" height="1.00" fill="#12f01a"/>
<rect x="149.00" y="363.00" width="1.00" height="2.00" fill="#12f01a"/>
<rect x="150.00" y="363.00" width="1.00" height="2.00" fill="#12f01a"/>
<rect x="151.00" y="362.00" width="1.00" height="3.00" fill="#12f01a"/>
<rect x="151.00" y="374.00" width="1.00" height="1.00" fill="#12f01a"/>
<rect x="152.00" y="374.00" width="1.00" height="1.00" fill="#12f01a"/>
<rect x="153.00" y="374.00" width="1.00" height="1.00" fill="#12f01a"/>
<rect x="154.00" y="363.00" width="1.00" height="2.00" fill="#12f01a"/>
<rect x="154.00" y="374.00" width="1.00" height="1.00" fill="#12f01a"/>
<rect x="155.00" y="363.00" width="1.00" height="2.00" fill="#12f01a"/>
<rect x="155.00" y="374.00" width="1.00" height="1.00" fill="#12f01a"/>
<rect x="157.00" y="362.00" width="1.00" height="3.00" fill="#12f01a"/>
<rect x="157.00" y="374.00" width="1.00" height="1.00" fill="#12f01a"/>
<rect x="158.00" y="364.00" width="1.00" height="1.00" fill="#12f01a"/>
<rect x="158.00" y="374.00" width="1.00" height="1.00" fill="#12f01a"/>
<rect x="160.00" y="364.00" width="1.00" height="1.00" fill="#12f01a"/>
<rect x="161.00" y="374.00" width="1.00" height="1.00" fill="#12f01a"/>
<rect x="163.00" y="363.00" width="1.00" height="2.00" fill="#12f01a"/>
<rect x="164.00" y="363.00" width="1.00" height="2.00" fill="#12f01a"/>
<rect x="164.00" y="374.00" width="1.00" height="1.00" fill="#12f01a"/>
<rect x="165.00" y="374.00" width="1.00" height="1.00" fill="#12f01a"/>
<rect x="166.00" y="362.00" width="1.00" height="3.00" fill="#12f01a"/>
<rect x="166.00" y="374.00" width="1.00" height="1.00" fill="#12f01a"/>
<rect x="167.00" y="374.00" width="1.00" height="1.00" fill="#12f01a"/>
<rect x="168.00" y="362.00" width="1.00" height="3.00" fill="#12f01a"/>
<rect x="169.00" y="362.00" width="1.00" height="3.00" fill="#12f01a"/>
<rect x="169.00" y="374.00" width="1.00" height="1.00" fill="#12f01a"/>
<rect x="170.00" y="364.00" width="1.00" height="1.00" fill="#12f01a"/>
<rect x="172.00" y="374.00" width="1.00" height="1.00" fill="#12f01a"/>
<rect x="174.00" y="363.00" width="1.00" height="2.00" fill="#12f01a"/>
<rect x="175.00" y="362.00" width="1.00" height="3.00" fill="#12f01a"/>
<rect x="176.00" y="374.00" width="1.00" height="1.00" fill="#12f01a"/>
<rect x="177.00" y="363.00" width="1.00" height="2.00" fill="#12f01a"/>
<rect x="177.00" y="374.00" width="1.00" height="1.00" fill="#12f01a"/>
<rect x="179.00" y="364.00" width="1.00" height="1.00" fill="#12f01a"/>
<rect x="179.00" y="374.00" width="1.00" height="1.00" fill="#12f01a"/>
<rect x="180.00" y="364.00" width="1.00" height="1.00" fill="#12f01a"/>
<rect x="180.00" y="374.00" width="1.00" height="1.00" fill="#12f01a"/>
<rect x="181.00" y="374.00" width="1.00" height="1.00" fill="#12f01a"/>
<rect x="183.00" y="374.00" width="1.00" height="1.00" fill="#12f01a"/>
<rect x="184.00" y="374.00" width="1.00" height="1.00" fill="#12f01a"/>
<rect x="185.00" y="364.00" width="1.00" height="1.00" fill="#12f01a"/>
<rect x="187.00" y="363.00" width="1.00" height="2.00" fill="#12f01a"/>
<rect x="187.00" y="374.00" width="1.00" height="1.00" fill="#12f01a"/>
<rect x="188.00" y="374.00" width="1.00" height="1.00" fill="#12f01a"/>
<rect x="65.10" y="311.00" width="29.50" height="7.00" fill="#12f01a"/>
<rect x="66.00" y="318.00" width="1.00" height="2.00" fill="#12f01a"/>
<rect x="67.00" y="309.00" width="1.00" height="2.00" fill="#12f01a"/>
<rect x="67.00" y="318.00" width="1.00" height="1.00" fill="#12f01a"/>
<rect x="68.00" y="318.00" width="1.00" height="1.00" fill="#12f01a"/>
<rect x="69.00" y="309.00" width="1.00" height="2.00" fill="#12f01a"/>
<rect x="69.00" y="318.00" width="1.00" height="2.00" fill="#12f01a"/>
<rect x="70.00" y="309.00" width="1.00" height="2.00" fill="#12f01a"/>
<rect x="72.00" y="309.00" width="1.00" height="2.00" fill="#12f01a"/>
<rect x="72.00" y="318.00" width="1.00" height="1.00" fill="#12f01a"/>
<rect x="73.00" y="310.00" width="1.00" height="1.00" fill="#12f01a"/>
<rect x="73.00" y="318.00" width="1.00" height="1.00" fill="#12f01a"/>
<rect x="74.00" y="309.00" width="1.00" height="2.00" fill="#12f01a"/>
<rect x="75.00" y="309.00" width="1.00" height="2.00" fill="#12f01a"/>
<rect x="76.00" y="309.00" width="1.00" height="2.00" fill="#12f01a"/>
<rect x="77.00" y="310.00" width="1.00" height="1.00" fill="#12f01a"/>
<rect x="77.00" y="318.00" width="1.00" height="2.00" fill="#12f01a"/>
<rect x="78.00" y="309.00" width="1.00" height="2.00" fill="#12f01a"/>
<rect x="79.00" y="318.00" width="1.00" height="1.00" fill="#12f01a"/>
<rect x="80.00" y="318.00" width="1.00" height="2.00" fill="#12f01a"/>
<rect x="81.00" y="318.00" width="1.00" height="2.00" fill="#12f01a"/>
<rect x="83.00" y="310.00" width="1.00" height="1.00" fill="#12f01a"/>
<rect x="83.00" y="318.00" width="1.00" height="2.00" fill="#12f01a"/>
<rect x="84.00" y="318.00" width="1.00" height="1.00" fill="#12f01a"/>
<rect x="86.00" y="309.00" width="1.00" height="2.00" fill="#12f01a"/>
<rect x="87.00" y="309.00" width="1.00" height="2.00" fill="#12f01a"/>
<rect x="87.00" y="318.00" width="1.00" height="1.00" fill="#12f01a"/>
<rect x="88.00" y="309.00" width="1.00" height="2.00" fill="#12f01a"/>
<rect x="89.00" y="309.00" width="1.00" height="2.00" fill="#12f01a"/>
<rect x="89.00" y="318.00" width="1.00" height="3.00" fill="#12f01a"/>
<rect x="91.00" y="309.00" width="1.00" height="2.00" fill="#12f01a"/>
<rect x="92.00" y="310.00" width="1.00" height="1.00" fill="#12f01a"/>
<rect x="92.00" y="318.00" width="1.00" height="2.00" fill="#12f01a"/>
<rect x="93.00" y="309.00" width="1.00" height="2.00" fill="#12f01a"/>
<rect x="93.00" y="318.00" width="1.00" height="2.00" fill="#12f01a"/>
<rect x="222.80" y="365.00" width="92.70" height="9.00" fill="#12f01a"/>
<rect x="223.00" y="364.00" width="1.00" height="1.00" fill="#12f01a"/>
<rect x="223.00" y="374.00" width="1.00" height="1.00" fill="#12f01a"/>
<rect x="224.00" y="364.00" width="1.00" height="1.00" fill="#12f01a"/>
<rect x="224.00" y="374.00" width="1.00" height="1.00" fill="#12f01a"/>
<rect x="225.00" y="364.00" width="1.00" height="1.00" fill="#12f01a"/>
<rect x="227.00" y="364.00" width="1.00" height="1.00" fill="#12f01a"/>
<rect x="227.00" y="374.00" width="1.00" height="1.00" fill="#12f01a"/>
<rect x="228.00" y="363.00" width="1.00" height="2.00" fill="#12f01a"/>
<rect x="229.00" y="364.00" width="1.00" height="1.00" fill="#12f01a"/>
<rect x="230.00" y="374.00" width="1.00" height="1.00" fill="#12f01a"/>
<rect x="231.00" y="374.00" width="1.00" height="1.00" fill="#12f01a"/>
<rect x="232.00" y="364.00" width="1.00" height="1.00" fill="#12f01a"/>
<rect x="232.00" y="374.00" width="1.00" height="1.00" fill="#12f01a"/>
<rect x="233.00" y="364.00" width="1.00" height="1.00" fill="#12f01a"/>
<rect x="233.00" y="374.00" width="1.00" height="1.00" fill="#12f01a"/>
<rect x="235.00" y="374.00" width="1.00" height="1.00" fill="#12f01a"/>
<rect x="236.00" y="363.00" width="1.00" height="2.00" fill="#12f01a"/>
<rect x="236.00" y="374.00" width="1.00" height="1.00" fill="#12f01a"/>
<rect x="237.00" y="364.00" width="1.00" height="1.00" fill="#12f01a"/>
<rect x="238.00" y="374.00" width="1.00" height="1.00" fill="#12f01a"/>
<rect x="241.00" y="362.00" width="1.00" height="3.00" fill="#12f01a"/>
<rect x="242.00" y="363.00" width="1.00" height="2.00" fill="#12f01a"/>
<rect x="242.00" y="374.00" width="1.00" height="1.00" fill="#12f01a"/>
<rect x="243.00" y="364.00" width="1.00" height="1.00" fill="#12f01a"/>
<rect x="244.00" y="363.00" width="1.00" height="2.00" fill="#12f01a"/>
<rect x="244.00" y="374.00" width="1.00" height="1.00" fill="#12f01a"/>
<rect x="246.00" y="374.00" width="1.00" height="1.00" fill="#12f01a"/>
<rect x="247.00" y="374.00" width="1.00" height="1.00" fill="#12f01a"/>
<rect x="248.00" y="362.00" width="1.00" height="3.00" fill="#12f01a"/>
<rect x="249.00" y="374.00" width="1.00" height="1.00" fill="#12f01a"/>
<rect x="251.00" y="363.00" width="1.00" height="2.00" fill="#12f01a"/>
<rect x="253.00" y="363.00" width="1.00" height="2.00" fill="#12f01a"/>
<rect x="253.00" y="374.00" width="1.00" height="1.00" fill="#12f01a"/>
<rect x="256.00" y="374.00" width="1.00" height="1.00" fill="#12f01a"/>
<rect x="257.00" y="374.00" width="1.00" height="1.00" fill="#12f01a"/>
<rect x="259.00" y="374.00" width="1.00" height="1.00" fill="#12f01a"/>
<rect x="260.00" y="364.00" width="1.00" height="1.00" fill="#12f01a"/>
<rect x="262.00" y="364.00" width="1.00" height="1.00" fill="#12f01a"/>
<rect x="262.00" y="374.00" width="1.00" height="1.00" fill="#12f01a"/>
<rect x="263.00" y="363.00" width="1.00" height="2.00" fill="#12f01a"/>
<rect x="264.00" y="374.00" width="1.00" height="1.00" fill="#12f01a"/>
<rect x="265.00" y="363.00" width="1.00" height="2.00" fill="#12f01a"/>
<rect x="266.00" y="363.00" width="1.00" height="2.00" fill="#12f01a"/>
<rect x="267.00" y="364.00" width="1.00" height="1.00" fill="#12f01a"/>
<rect x="268.00" y="363.00" width="1.00" height="2.00" fill="#12f01a"/>
<rect x="268.00" y="374.00" width="1.00" height="1.00" fill="#12f01a"/>
<rect x="270.00" y="374.00" width="1.00" height="1.00" fill="#12f01a"/>
<rect x="271.00" y="363.00" width="1.00" height="2.00" fill="#12f01a"/>
<rect x="272.00" y="364.00" width="1.00" height="1.00" fill="#12f01a"/>
<rect x="273.00" y="362.00" width="1.00" height="3.00" fill="#12f01a"/>
<rect x="274.00" y="364.00" width="1.00" height="1.00" fill="#12f01a"/>
<rect x="274.00" y="374.00" width="1.00" height="1.00" fill="#12f01a"/>
<rect x="275.00" y="374.00" width="1.00" height="1.00" fill="#12f01a"/>
<rect x="276.00" y="364.00" width="1.00" height="1.00" fill="#12f01a"/>
<rect x="276.00" y="374.00" width="1.00" height="1.00" fill="#12f01a"/>
<rect x="277.00" y="362.00" width="1.00" height="3.00" fill="#12f01a"/>
<rect x="277.00" y="374.00" width="1.00" height="1.00" fill="#12f01a"/>
<rect x="278.00" y="374.00" width="1.00" height="1.00" fill="#12f01a"/>
<rect x="281.00" y="374.00" width="1.00" height="1.00" fill="#12f01a"/>
<rect x="282.00" y="364.00" width="1.00" height="1.00" fill="#12f01a"/>
<rect x="282.00" y="374.00" width="1.00" height="1.00" fill="#12f01a"/>
<rect x="283.00" y="364.00" width="1.00" height="1.00" fill="#12f01a"/>
<rect x="283.00" y="374.00" width="1.00" height="1.00" fill="#12f01a"/>
<rect x="285.00" y="374.00" width="1.00" height="1.00" fill="#12f01a"/>
<rect x="286.00" y="363.00" width="1.00" height="2.00" fill="#12f01a"/>
<rect x="288.00" y="374.00" width="1.00" height="1.00" fill="#12f01a"/>
<rect x="289.00" y="362.00" width="1.00" height="3.00" fill="#12f01a"/>
<rect x="290.00" y="374.00" width="1.00" height="1.00" fill="#12f01a"/>
<rect x="291.00" y="374.00" width="1.00" height="1.00" fill="#12f01a"/>
<rect x="293.00" y="363.00" width="1.00" height="2.00" fill="#12f01a"/>
<rect x="294.00" y="363.00" width="1.00" height="2.00" fill="#12f01a"/>
<rect x="295.00" y="374.00" width="1.00" height="1.00" fill="#12f01a"/>
<rect x="296.00" y="364.00" width="1.00" height="1.00" fill="#12f01a"/>
<rect x="297.00" y="362.00" width="1.00" height="3.00" fill="#12f01a"/>
<rect x="297.00" y="374.00" width="1.00" height="1.00" fill="#12f01a"/>
<rect x="298.00" y="362.00" width="1.00" height="3.00" fill="#12f01a"/>
<rect x="298.00" y="374.00" width="1.00" height="1.00" fill="#12f01a"/>
<rect x="299.00" y="363.00" width="1.00" height="2.00" fill="#12f01a"/>
<rect x="299.00" y="374.00" width="1.00" height="1.00" fill="#12f01a"/>
<rect x="300.00" y="363.00" width="1.00" height="2.00" fill="#12f01a"/>
<rect x="302.00" y="364.00" width="1.00" height="1.00" fill="#12f01a"/>
<rect x="302.00" y="374.00" width="1.00" height="1.00" fill="#12f01a"/>
<rect x="303.00" y="362.00" width="1.00" height="3.00" fill="#12f01a"/>
<rect x="303.00" y="374.00" width="1.00" height="1.00" fill="#12f01a"/>
<rect x="304.00" y="374.00" width="1.00" height="1.00" fill="#12f01a"/>
<rect x="305.00" y="364.00" width="1.00" height="1.00" fill="#12f01a"/>
<rect x="306.00" y="362.00" width="1.00" height="3.00" fill="#12f01a"/>
<rect x="307.00" y="374.00" width="1.00" height="1.00" fill="#12f01a"/>
<rect x="310.00" y="374.00" width="1.00" height="1.00" fill="#12f01a"/>
<rect x="311.00" y="374.00" width="1.00" height="1.00" fill="#12f01a"/>
<rect x="312.00" y="362.00" width="1.00" height="3.00" fill="#12f01a"/>
<rect x="313.00" y="363.00" width="1.00" height="2.00" fill="#12f01a"/>
<rect x="190.90" y="311.00" width="29.50" height="7.00" fill="#12f01a"/>
<rect x="191.00" y="310.00" width="1.00" height="1.00" fill="#12f01a"/>
<rect x="192.00" y="318.00" width="1.00" height="1.00" fill="#12f01a"/>
<rect x="193.00" y="318.00" width="1.00" height="3.00" fill="#12f01a"/>
<rect x="195.00" y="310.00" width="1.00" height="1.00" fill="#12f01a"/>
<rect x="195.00" y="318.00" width="1.00" height="2.00" fill="#12f01a"/>
<rect x="196.00" y="309.00" width="1.00" height="2.00" fill="#12f01a"/>
<rect x="196.00" y="318.00" width="1.00" height="2.00" fill="#12f01a"/>
<rect x="197.00" y="310.00" width="1.00" height="1.00" fill="#12f01a"/>
<rect x="200.00" y="309.00" width="1.00" height="2.00" fill="#12f01a"/>
<rect x="201.00" y="309.00" width="1.00" height="2.00" fill="#12f01a"/>
<rect x="201.00" y="318.00" width="1.00" height="1.00" fill="#12f01a"/>
<rect x="202.00" y="310.00" width="1.00" height="1.00" fill="#12f01a"/>
<rect x="202.00" y="318.00" width="1.00" height="3.00" fill="#12f01a"/>
<rect x="203.00" y="318.00" width="1.00" height="2.00" fill="#12f01a"/>
<rect x="204.00" y="310.00" width="1.00" height="1.00" fill="#12f01a"/>
<rect x="205.00" y="310.00" width="1.00" height="1.00" fill="#12f01a"/>
<rect x="206.00" y="310.00" width="1.00" height="1.00" fill="#12f01a"/>
<rect x="206.00" y="318.00" width="1.00" height="1.00" fill="#12f01a"/>
<rect x="207.00" y="309.00" width="1.00" height="2.00" fill="#12f01a"/>
<rect x="207.00" y="318.00" width="1.00" height="1.00" fill="#12f01a"/>
<rect x="209.00" y="309.00" width="1.00" height="2.00" fill="#12f01a"/>
<rect x="210.00" y="310.00" width="1.00" height="1.00" fill="#12f01a"/>
<rect x="210.00" y="318.00" width="1.00" height="3.00" fill="#12f01a"/>
<rect x="211.00" y="310.00" width="1.00" height="1.00" fill="#12f01a"/>
<rect x="212.00" y="310.00" width="1.00" height="1.00" fill="#12f01a"/>
<rect x="212.00" y="318.00" width="1.00" height="2.00" fill="#12f01a"/>
<rect x="213.00" y="318.00" width="1.00" height="1.00" fill="#12f01a"/>
<rect x="214.00" y="309.00" width="1.00" height="2.00" fill="#12f01a"/>
<rect x="214.00" y="318.00" width="1.00" height="2.00" fill="#12f01a"/>
<rect x="215.00" y="310.00" width="1.00" height="1.00" fill="#12f01a"/>
<rect x="215.00" y="318.00" width="1.00" height="2.00" fill="#12f01a"/>
<rect x="216.00" y="310.00" width="1.00" height="1.00" fill="#12f01a"/>
<rect x="217.00" y="310.00" width="1.00" height="1.00" fill="#12f01a"/>
<rect x="218.00" y="310.00" width="1.00" height="1.00" fill="#12f01a"/>
<rect x="219.00" y="318.00" width="1.00" height="1.00" fill="#12f01a"/>
<rect x="348.60" y="365.00" width="92.70" height="9.00" fill="#12f01a"/>
<rect x="349.00" y="364.00" width="1.00" height="1.00" fill="#12f01a"/>
<rect x="349.00" y="374.00" width="1.00" height="1.00" fill="#12f01a"/>
<rect x="350.00" y="364.00" width="1.00" height="1.00" fill="#12f01a"/>
<rect x="350.00" y="374.00" width="1.00" height="1.00" fill="#12f01a"/>
<rect x="351.00" y="363.00" width="1.00" height="2.00" fill="#12f01a"/>
<rect x="351.00" y="374.00" width="1.00" height="1.00" fill="#12f01a"/>
<rect x="352.00" y="364.00" width="1.00" height="1.00" fill="#12f01a"/>
<rect x="353.00" y="363.00" width="1.00" height="2.00" fill="#12f01a"/>
<rect x="353.00" y="374.00" width="1.00" height="1.00" fill="#12f01a"/>
<rect x="354.00" y="374.00" width="1.00" height="1.00" fill="#12f01a"/>
<rect x="355.00" y="374.00" width="1.00" height="1.00" fill="#12f01a"/>
<rect x="356.00" y="363.00" width="1.00" height="2.00" fill="#12f01a"/>
<rect x="356.00" y="374.00" width="1.00" height="1.00" fill="#12f01a"/>
<rect x="357.00" y="362.00" width="1.00" height="3.00" fill="#12f01a"/>
<rect x="357.00" y="374.00" width="1.00" height="1.00" fill="#12f01a"/>
<rect x="358.00" y="374.00" width="1.00" height="1.00" fill="#12f01a"/>
<rect x="359.00" y="364.00" width="1.00" height="1.00" fill="#12f01a"/>
<rect x="360.00" y="363.00" width="1.00" height="2.00" fill="#12f01a"/>
<rect x="360.00" y="374.00" width="1.00" height="1.00" fill="#12f01a"/>
<rect x="361.00" y="364.00" width="1.00" height="1.00" fill="#12f01a"/>
<rect x="361.00" y="374.00" width="1.00" height="1.00" fill="#12f01a"/>
<rect x="362.00" y="374.00" width="1.00" height="1.00" fill="#12f01a"/>
<rect x="364.00" y="364.00" width="1.00" height="1.00" fill="#12f01a"/>
<rect x="364.00" y="374.00" width="1.00" height="1.00" fill="#12f01a"/>
<rect x="365.00" y="364.00" width="1.00" height="1.00" fill="#12f01a"/>
<rect x="366.00" y="374.00" width="1.00" height="1.00" fill="#12f01a"/>
<rect x="367.00" y="363.00" width="1.00" height="2.00" fill="#12f01a"/>
<rect x="367.00" y="374.00" width="1.00" height="1.00" fill="#12f01a"/>
<rect x="368.00" y="364.00" width="1.00" height="1.00" fill="#12f01a"/>
<rect x="368.00" y="374.00" width="1.00" height="1.00" fill="#12f01a"/>
<rect x="370.00" y="363.00" width="1.00" height="2.00" fill="#12f01a"/>
<rect x="371.00" y="363.00" width="1.00" height="2.00" fill="#12f01a"/>
<rect x="371.00" y="374.00" width="1.00" height="1.00" fill="#12f01a"/>
<rect x="372.00" y="364.00" width="1.00" height="1.00" fill="#12f01a"/>
<rect x="373.00" y="363.00" width="1.00" height="2.00" fill="#12f01a"/>
<rect x="374.00" y="362.00" width="1.00" height="3.00" fill="#12f01a"/>
<rect x="377.00" y="374.00" width="1.00" height="1.00" fill="#12f01a"/>
<rect x="378.00" y="363.00" width="1.00" height="2.00" fill="#12f01a"/>
<rect x="378.00" y="374.00" width="1.00" height="1.00" fill="#12f01a"/>
<rect x="379.00" y="362.00" width="1.00" height="3.00" fill="#12f01a"/>
<rect x="381.00" y="364.00" width="1.00" height="1.00" fill="#12f01a"/>
<rect x="381.00" y="374.00" width="1.00" height="1.00" fill="#12f01a"/>
<rect x="382.00" y="363.00" width="1.00" height="2.00" fill="#12f01a"/>
<rect x="382.00" y="374.00" width="1.00" height="1.00" fill="#12f01a"/>
<rect x="383.00" y="374.00" width="1.00" height="1.00" fill="#12f01a"/>
<rect x="385.00" y="362.00" width="1.00" height="3.00" fill="#12f01a"/>
<rect x="385.00" y="374.00" width="1.00" height="1.00" fill="#12f01a"/>
<rect x="386.00" y="374.00" width="1.00" height="1.00" fill="#12f01a"/>
<rect x="387.00" y="364.00" width="1.00" height="1.00" fill="#12f01a"/>
<rect x="389.00" y="364.00" width="1.00" height="1.00" fill="#12f01a"/>
<rect x="390.00" y="374.00" width="1.00" height="1.00" fill="#12f01a"/>
<rect x="391.00" y="374.00" width="1.00" height="1.00" fill="#12f01a"/>
<rect x="393.00" y="364.00" width="1.00" height="1.00" fill="#12f01a"/>
<rect x="393.00" y="374.00" width="1.00" height="1.00" fill="#12f01a"/>
<rect x="394.00" y="362.00" width="1.00" height="3.00" fill="#12f01a"/>
<rect x="394.00" y="374.00" width="1.00" height="1.00" fill="#12f01a"/>
<rect x="395.00" y="374.00" width="1.00" height="1.00" fill="#12f01a"/>
<rect x="396.00" y="364.00" width="1.00" height="1.00" fill="#12f01a"/>
<rect x="396.00" y="374.00" width="1.00" height="1.00" fill="#12f01a"/>
<rect x="397.00" y="363.00" width="1.00" height="2.00" fill="#12f01a"/>
<rect x="397.00" y="374.00" width="1.00" height="1.00" fill="#12f01a"/>
<rect x="399.00" y="374.00" width="1.00" height="1.00" fill="#12f01a"/>
<rect x="400.00" y="364.00" width="1.00" height="1.00" fill="#12f01a"/>
<rect x="401.00" y="364.00" width="1.00" height="1.00" fill="#12f01a"/>
<rect x="401.00" y="374.00" width="1.00" height="1.00" fill="#12f01a"/>
<rect x="403.00" y="364.00" width="1.00" height="1.00" fill="#12f01a"/>
<rect x="404.00" y="364.00" width="1.00" height="1.00" fill="#12f01a"/>
<rect x="404.00" y="374.00" width="1.00" height="1.00" fill="#12f01a"/>
<rect x="405.00" y="364.00" width="1.00" height="1.00" fill="#12f01a"/>
<rect x="406.00" y="363.00" width="1.00" height="2.00" fill="#12f01a"/>
<rect x="408.00" y="364.00" width="1.00" height="1.00" fill="#12f01a"/>
<rect x="408.00" y="374.00" width="1.00" height="1.00" fill="#12f01a"/>
<rect x="409.00" y="374.00" width="1.00" height="1.00" fill="#12f01a"/>
<rect x="410.00" y="364.00" width="1.00" height="1.00" fill="#12f01a"/>
<rect x="411.00" y="364.00" width="1.00" height="1.00" fill="#12f01a"/>
<rect x="412.00" y="374.00" width="1.00" height="1.00" fill="#12f01a"/>
<rect x="413.00" y="364.00" width="1.00" height="1.00" fill="#12f01a"/>
<rect x="413.00" y="374.00" width="1.00" height="1.00" fill="#12f01a"/>
<rect x="414.00" y="362.00" width="1.00" height="3.00" fill="#12f01a"/>
<rect x="414.00" y="374.00" width="1.00" height="1.00" fill="#12f01a"/>
<rect x="415.00" y="364.00" width="1.00" height="1.00" fill="#12f01a"/>
<rect x="415.00" y="374.00" width="1.00" height="1.00" fill="#12f01a"/>
<rect x="416.00" y="363.00" width="1.00" height="2.00" fill="#12f01a"/>
<rect x="417.00" y="364.00" width="1.00" height="1.00" fill="#12f01a"/>
<rect x="417.00" y="374.00" width="1.00" height="1.00" fill="#12f01a"/>
<rect x="418.00" y="363.00" width="1.00" height="2.00" fill="#12f01a"/>
<rect x="418.00" y="374.00" width="1.00" height="1.00" fill="#12f01a"/>
<rect x="419.00" y="364.00" width="1.00" height="1.00" fill="#12f01a"/>
<rect x="419.00" y="374.00" width="1.00" height="1.00" fill="#12f01a"/>
<rect x="420.00" y="363.00" width="1.00" height="2.00" fill="#12f01a"/>
<rect x="420.00" y="374.00" width="1.00" height="1.00" fill="#12f01a"/>
<rect x="421.00" y="363.00" width="1.00" height="2.00" fill="#12f01a"/>
<rect x="421.00" y="374.00" width="1.00" height="1.00" fill="#12f01a"/>
<rect x="423.00" y="363.00" width="1.00" height="2.00" fill="#12f01a"/>
<rect x="423.00" y="374.00" width="1.00" height="1.00" fill="#12f01a"/>
<rect x="426.00" y="374.00" width="1.00" height="1.00" fill="#12f01a"/>
<rect x="427.00" y="374.00" width="1.00" height="1.00" fill="#12f01a"/>
<rect x="428.00" y="364.00" width="1.00" height="1.00" fill="#12f01a"/>
<rect x="428.00" y="374.00" width="1.00" height="1.00" fill="#12f01a"/>
<rect x="429.00" y="363.00" width="1.00" height="2.00" fill="#12f01a"/>
<rect x="429.00" y="374.00" width="1.00" height="1.00" fill="#12f01a"/>
<rect x="430.00" y="362.00" width="1.00" height="3.00" fill="#12f01a"/>
<rect x="430.00" y="374.00" width="1.00" height="1.00" fill="#12f01a"/>
<rect x="431.00" y="362.00" width="1.00" height="3.00" fill="#12f01a"/>
<rect x="431.00" y="374.00" width="1.00" height="1.00" fill="#12f01a"/>
<rect x="432.00" y="363.00" width="1.00" height="2.00" fill="#12f01a"/>
<rect x="433.00" y="374.00" width="1.00" height="1.00" fill="#12f01a"/>
<rect x="435.00" y="374.00" width="1.00" height="1.00" fill="#12f01a"/>
<rect x="436.00" y="364.00" width="1.00" height="1.00" fill="#12f01a"/>
<rect x="436.00" y="374.00" width="1.00" height="1.00" fill="#12f01a"/>
<rect x="437.00" y="363.00" width="1.00" height="2.00" fill="#12f01a"/>
<rect x="437.00" y="374.00" width="1.00" height="1.00" fill="#12f01a"/>
<rect x="438.00" y="364.00" width="1.00" height="1.00" fill="#12f01a"/>
<rect x="439.00" y="363.00" width="1.00" height="2.00" fill="#12f01a"/>
<rect x="439.00" y="374.00" width="1.00" height="1.00" fill="#12f01a"/>
<rect x="440.00" y="374.00" width="1.00" height="1.00" fill="#12f01a"/>
<rect x="316.70" y="311.00" width="29.50" height="7.00" fill="#12f01a"/>
<rect x="317.00" y="318.00" width="1.00" height="2.00" fill="#12f01a"/>
<rect x="318.00" y="309.00" width="1.00" height="2.00" fill="#12f01a"/>
<rect x="319.00" y="318.00" width="1.00" height="2.00" fill="#12f01a"/>
<rect x="320.00" y="318.00" width="1.00" height="1.00" fill="#12f01a"/>
<rect x="322.00" y="310.00" width="1.00" height="1.00" fill="#12f01a"/>
<rect x="324.00" y="318.00" width="1.00" height="3.00" fill="#12f01a"/>
<rect x="325.00" y="309.00" width="1.00" height="2.00" fill="#12f01a"/>
<rect x="326.00" y="309.00" width="1.00" height="2.00" fill="#12f01a"/>
<rect x="326.00" y="318.00" width="1.00" height="1.00" fill="#12f01a"/>
<rect x="327.00" y="310.00" width="1.00" height="1.00" fill="#12f01a"/>
<rect x="328.00" y="318.00" width="1.00" height="1.00" fill="#12f01a"/>
<rect x="329.00" y="318.00" width="1.00" height="2.00" fill="#12f01a"/>
<rect x="330.00" y="310.00" width="1.00" height="1.00" fill="#12f01a"/>
<rect x="331.00" y="318.00" width="1.00" height="3.00" fill="#12f01a"/>
<rect x="333.00" y="318.00" width="1.00" height="1.00" fill="#12f01a"/>
<rect x="334.00" y="310.00" width="1.00" height="1.00" fill="#12f01a"/>
<rect x="334.00" y="318.00" width="1.00" height="3.00" fill="#12f01a"/>
<rect x="335.00" y="310.00" width="1.00" height="1.00" fill="#12f01a"/>
<rect x="335.00" y="318.00" width="1.00" height="2.00" fill="#12f01a"/>
<rect x="336.00" y="310.00" width="1.00" height="1.00" fill="#12f01a"/>
<rect x="336.00" y="318.00" width="1.00" height="2.00" fill="#12f01a"/>
<rect x="337.00" y="318.00" width="1.00" height="2.00" fill="#12f01a"/>
<rect x="338.00" y="310.00" width="1.00" height="1.00" fill="#12f01a"/>
<rect x="338.00" y="318.00" width="1.00" height="1.00" fill="#12f01a"/>
<rect x="339.00" y="309.00" width="1.00" height="2.00" fill="#12f01a"/>
<rect x="340.00" y="310.00" width="1.00" height="1.00" fill="#12f01a"/>
<rect x="341.00" y="318.00" width="1.00" height="2.00" fill="#12f01a"/>
<rect x="342.00" y="318.00" width="1.00" height="1.00" fill="#12f01a"/>
<rect x="343.00" y="318.00" width="1.00" height="1.00" fill="#12f01a"/>
<rect x="345.00" y="310.00" width="1.00" height="1.00" fill="#12f01a"/>
<rect x="345.00" y="318.00" width="1.00" height="3.00" fill="#12f01a"/>
<rect x="474.40" y="365.00" width="92.70" height="9.00" fill="#12f01a"/>
<rect x="475.00" y="363.00" width="1.00" height="2.00" fill="#12f01a"/>
<rect x="476.00" y="374.00" width="1.00" height="1.00" fill="#12f01a"/>
<rect x="478.00" y="363.00" width="1.00" height="2.00" fill="#12f01a"/>
<rect x="478.00" y="374.00" width="1.00" height="1.00" fill="#12f01a"/>
<rect x="479.00" y="363.00" width="1.00" height="2.00" fill="#12f01a"/>
<rect x="480.00" y="362.00" width="1.00" height="3.00" fill="#12f01a"/>
<rect x="480.00" y="374.00" width="1.00" height="1.00" fill="#12f01a"/>
<rect x="481.00" y="363.00" width="1.00" height="2.00" fill="#12f01a"/>
<rect x="481.00" y="374.00" width="1.00" height="1.00" fill="#12f01a"/>
<rect x="482.00" y="363.00" width="1.00" height="2.00" fill="#12f01a"/>
<rect x="482.00" y="374.00" width="1.00" height="1.00" fill="#12f01a"/>
<rect x="483.00" y="364.00" width="1.00" height="1.00" fill="#12f01a"/>
<rect x="483.00" y="374.00" width="1.00" height="1.00" fill="#12f01a"/>
<rect x="484.00" y="374.00" width="1.00" height="1.00" fill="#12f01a"/>
<rect x="485.00" y="364.00" width="1.00" height="1.00" fill="#12f01a"/>
<rect x="485.00" y="374.00" width="1.00" height="1.00" fill="#12f01a"/>
<rect x="486.00" y="374.00" width="1.00" height="1.00" fill="#12f01a"/>
<rect x="488.00" y="364.00" width="1.00" height="1.00" fill="#12f01a"/>
<rect x="489.00" y="364.00" width="1.00" height="1.00" fill="#12f01a"/>
<rect x="491.00" y="364.00" width="1.00" height="1.00" fill="#12f01a"/>
<rect x="491.00" y="374.00" width="1.00" height="1.00" fill="#12f01a"/>
<rect x="493.00" y="374.00" width="1.00" height="1.00" fill="#12f01a"/>
<rect x="494.00" y="364.00" width="1.00" height="1.00" fill="#12f01a"/>
<rect x="494.00" y="374.00" width="1.00" height="1.00" fill="#12f01a"/>
<rect x="495.00" y="364.00" width="1.00" height="1.00" fill="#12f01a"/>
<rect x="495.00" y="374.00" width="1.00" height="1.00" fill="#12f01a"/>
<rect x="496.00" y="364.00" width="1.00" height="1.00" fill="#12f01a"/>
<rect x="496.00" y="374.00" width="1.00" height="1.00" fill="#12f01a"/>
<rect x="497.00" y="362.00" width="1.00" height="3.00" fill="#12f01a"/>
<rect x="497.00" y="374.00" width="1.00" height="1.00" fill="#12f01a"/>
<rect x="498.00" y="374.00" width="1.00" height="1.00" fill="#12f01a"/>
<rect x="499.00" y="364.00" width="1.00" height="1.00" fill="#12f01a"/>
<rect x="499.00" y="374.00" width="1.00" height="1.00" fill="#12f01a"/>
<rect x="500.00" y="364.00" width="1.00" height="1.00" fill="#12f01a"/>
<rect x="503.00" y="363.00" width="1.00" height="2.00" fill="#12f01a"/>
<rect x="503.00" y="374.00" width="1.00" height="1.00" fill="#12f01a"/>
<rect x="505.00" y="363.00" width="1.00" height="2.00" fill="#12f01a"/>
<rect x="505.00" y="374.00" width="1.00" height="1.00" fill="#12f01a"/>
<rect x="506.00" y="362.00" width="1.00" height="3.00" fill="#12f01a"/>
<rect x="507.00" y="364.00" width="1.00" height="1.00" fill="#12f01a"/>
<rect x="507.00" y="374.00" width="1.00" height="1.00" fill="#12f01a"/>
<rect x="508.00" y="364.00" width="1.00" height="1.00" fill="#12f01a"/>
<rect x="508.00" y="374.00" width="1.00" height="1.00" fill="#12f01a"/>
<rect x="509.00" y="363.00" width="1.00" height="2.00" fill="#12f01a"/>
<rect x="510.00" y="364.00" width="1.00" height="1.00" fill="#12f01a"/>
<rect x="511.00" y="374.00" width="1.00" height="1.00" fill="#12f01a"/>
<rect x="512.00" y="374.00" width="1.00" height="1.00" fill="#12f01a"/>
<rect x="513.00" y="363.00" width="1.00" height="2.00" fill="#12f01a"/>
<rect x="514.00" y="374.00" width="1.00" height="1.00" fill="#12f01a"/>
<rect x="515.00" y="363.00" width="1.00" height="2.00" fill="#12f01a"/>
<rect x="515.00" y="374.00" width="1.00" height="1.00" fill="#12f01a"/>
<rect x="516.00" y="363.00" width="1.00" height="2.00" fill="#12f01a"/>
<rect x="516.00" y="374.00" width="1.00" height="1.00" fill="#12f01a"/>
<rect x="518.00" y="363.00" width="1.00" height="2.00" fill="#12f01a"/>
<rect x="518.00" y="374.00" width="1.00" height="1.00" fill="#12f01a"/>
<rect x="520.00" y="364.00" width="1.00" height="1.00" fill="#12f01a"/>
<rect x="521.00" y="362.00" width="1.00" height="3.00" fill="#12f01a"/>
<rect x="522.00" y="374.00" width="1.00" height="1.00" fill="#12f01a"/>
<rect x="523.00" y="363.00" width="1.00" height="2.00" fill="#12f01a"/>
<rect x="524.00" y="364.00" width="1.00" height="1.00" fill="#12f01a"/>
<rect x="524.00" y="374.00" width="1.00" height="1.00" fill="#12f01a"/>
<rect x="526.00" y="364.00" width="1.00" height="1.00" fill="#12f01a"/>
<rect x="527.00" y="364.00" width="1.00" height="1.00" fill="#12f01a"/>
<rect x="527.00" y="374.00" width="1.00" height="1.00" fill="#12f01a"/>
<rect x="529.00" y="363.00" width="1.00" height="2.00" fill="#12f01a"/>
<rect x="530.00" y="364.00" width="1.00" height="1.00" fill="#12f01a"/>
<rect x="530.00" y="374.00" width="1.00" height="1.00" fill="#12f01a"/>
<rect x="531.00" y="364.00" width="1.00" height="1.00" fill="#12f01a"/>
<rect x="531.00" y="374.00" width="1.00" height="1.00" fill="#12f01a"/>
<rect x="532.00" y="362.00" width="1.00" height="3.00" fill="#12f01a"/>
<rect x="533.00" y="364.00" width="1.00" height="1.00" fill="#12f01a"/>
<rect x="534.00" y="363.00" width="1.00" height="2.00" fill="#12f01a"/>
<rect x="534.00" y="374.00" width="1.00" height="1.00" fill="#12f01a"/>
<rect x="537.00" y="374.00" width="1.00" height="1.00" fill="#12f01a"/>
<rect x="538.00" y="363.00" width="1.00" height="2.00" fill="#12f01a"/>
<rect x="538.00" y="374.00" width="1.00" height="1.00" fill="#12f01a"/>
<rect x="539.00" y="374.00" width="1.00" height="1.00" fill="#12f01a"/>
<rect x="540.00" y="363.00" width="1.00" height="2.00" fill="#12f01a"/>
<rect x="540.00" y="374.00" width="1.00" height="1.00" fill="#12f01a"/>
<rect x="542.00" y="374.00" width="1.00" height="1.00" fill="#12f01a"/>
<rect x="543.00" y="363.00" width="1.00" height="2.00" fill="#12f01a"/>
<rect x="544.00" y="364.00" width="1.00" height="1.00" fill="#12f01a"/>
<rect x="545.00" y="364.00" width="1.00" height="1.00" fill="#12f01a"/>
<rect x="546.00" y="374.00" width="1.00" height="1.00" fill="#12f01a"/>
<rect x="547.00" y="364.00" width="1.00" height="1.00" fill="#12f01a"/>
<rect x="549.00" y="374.00" width="1.00" height="1.00" fill="#12f01a"/>
<rect x="550.00" y="364.00" width="1.00" height="1.00" fill="#12f01a"/>
<rect x="550.00" y="374.00" width="1.00" height="1.00" fill="#12f01a"/>
<rect x="551.00" y="374.00" width="1.00" height="1.00" fill="#12f01a"/>
<rect x="552.00" y="364.00" width="1.00" height="1.00" fill="#12f01a"/>
<rect x="552.00" y="374.00" width="1.00" height="1.00" fill="#12f01a"/>
<rect x="555.00" y="363.00" width="1.00" height="2.00" fill="#12f01a"/>
<rect x="556.00" y="363.00" width="1.00" height="2.00" fill="#12f01a"/>
<rect x="557.00" y="364.00" width="1.00" height="1.00" fill="#12f01a"/>
<rect x="558.00" y="374.00" width="1.00" height="1.00" fill="#12f01a"/>
<rect x="559.00" y="364.00" width="1.00" height="1.00" fill="#12f01a"/>
<rect x="560.00" y="364.00" width="1.00" height="1.00" fill="#12f01a"/>
<rect x="561.00" y="363.00" width="1.00" height="2.00" fill="#12f01a"/>
<rect x="562.00" y="362.00" width="1.00" height="3.00" fill="#12f01a"/>
<rect x="562.00" y="374.00" width="1.00" height="1.00" fill="#12f01a"/>
<rect x="563.00" y="363.00" width="1.00" height="2.00" fill="#12f01a"/>
<rect x="563.00" y="374.00" width="1.00" height="1.00" fill="#12f01a"/>
<rect x="564.00" y="374.00" width="1.00" height="1.00" fill="#12f01a"/>
<rect x="565.00" y="374.00" width="1.00" height="1.00" fill="#12f01a"/>
<rect x="566.00" y="363.00" width="1.00" height="2.00" fill="#12f01a"/>
<rect x="566.00" y="374.00" width="1.00" height="1.00" fill="#12f01a"/>
<rect x="442.50" y="311.00" width="29.50" height="7.00" fill="#12f01a"/>
<rect x="443.00" y="318.00" width="1.00" height="2.00" fill="#12f01a"/>
<rect x="444.00" y="318.00" width="1.00" height="3.00" fill="#12f01a"/>
<rect x="447.00" y="310.00" width="1.00" height="1.00" fill="#12f01a"/>
<rect x="447.00" y="318.00" width="1.00" height="3.00" fill="#12f01a"/>
<rect x="449.00" y="318.00" width="1.00" height="1.00" fill="#12f01a"/>
<rect x="450.00" y="310.00" width="1.00" height="1.00" fill="#12f01a"/>
<rect x="450.00" y="318.00" width="1.00" height="1.00" fill="#12f01a"/>
<rect x="451.00" y="318.00" width="1.00" height="1.00" fill="#12f01a"/>
<rect x="452.00" y="309.00" width="1.00" height="2.00" fill="#12f01a"/>
<rect x="452.00" y="318.00" width="1.00" height="1.00" fill="#12f01a"/>
<rect x="453.00" y="318.00" width="1.00" height="2.00" fill="#12f01a"/>
<rect x="454.00" y="309.00" width="1.00" height="2.00" fill="#12f01a"/>
<rect x="454.00" y="318.00" width="1.00" height="3.00" fill="#12f01a"/>
<rect x="455.00" y="309.00" width="1.00" height="2.00" fill="#12f01a"/>
<rect x="455.00" y="318.00" width="1.00" height="1.00" fill="#12f01a"/>
<rect x="457.00" y="318.00" width="1.00" height="1.00" fill="#12f01a"/>
<rect x="458.00" y="310.00" width="1.00" height="1.00" fill="#12f01a"/>
<rect x="460.00" y="318.00" width="1.00" height="2.00" fill="#12f01a"/>
<rect x="461.00" y="309.00" width="1.00" height="2.00" fill="#12f01a"/>
<rect x="463.00" y="310.00" width="1.00" height="1.00" fill="#12f01a"/>
<rect x="463.00" y="318.00" width="1.00" height="1.00" fill="#12f01a"/>
<rect x="464.00" y="318.00" width="1.00" height="2.00" fill="#12f01a"/>
<rect x="465.00" y="310.00" width="1.00" height="1.00" fill="#12f01a"/>
<rect x="465.00" y="318.00" width="1.00" height="1.00" fill="#12f01a"/>
<rect x="466.00" y="318.00" width="1.00" height="2.00" fill="#12f01a"/>
<rect x="467.00" y="318.00" width="1.00" height="1.00" fill="#12f01a"/>
<rect x="468.00" y="309.00" width="1.00" height="2.00" fill="#12f01a"/>
<rect x="469.00" y="318.00" width="1.00" height="2.00" fill="#12f01a"/>
<rect x="470.00" y="309.00" width="1.00" height="2.00" fill="#12f01a"/>
<rect x="471.00" y="310.00" width="1.00" height="1.00" fill="#12f01a"/>
<rect x="471.00" y="318.00" width="1.00" height="1.00" fill="#12f01a"/>
<rect x="600.20" y="365.00" width="92.70" height="9.00" fill="#12f01a"/>
<rect x="601.00" y="364.00" width="1.00" height="1.00" fill="#12f01a"/>
<rect x="601.00" y="374.00" width="1.00" height="1.00" fill="#12f01a"/>
<rect x="602.00" y="374.00" width="1.00" height="1.00" fill="#12f01a"/>
<rect x="603.00" y="364.00" width="1.00" height="1.00" fill="#12f01a"/>
<rect x="604.00" y="364.00" width="1.00" height="1.00" fill="#12f01a"/>
<rect x="605.00" y="362.00" width="1.00" height="3.00" fill="#12f01a"/>
<rect x="605.00" y="374.00" width="1.00" height="1.00" fill="#12f01a"/>
<rect x="606.00" y="363.00" width="1.00" height="2.00" fill="#12f01a"/>
<rect x="606.00" y="374.00" width="1.00" height="1.00" fill="#12f01a"/>
<rect x="607.00" y="363.00" width="1.00" height="2.00" fill="#12f01a"/>
<rect x="607.00" y="374.00" width="1.00" height="1.00" fill="#12f01a"/>
<rect x="612.00" y="362.00" width="1.00" height="3.00" fill="#12f01a"/>
<rect x="612.00" y="374.00" width="1.00" height="1.00" fill="#12f01a"/>
<rect x="613.00" y="363.00" width="1.00" height="2.00" fill="#12f01a"/>
<rect x="616.00" y="374.00" width="1.00" height="1.00" fill="#12f01a"/>
<rect x="617.00" y="362.00" width="1.00" height="3.00" fill="#12f01a"/>
<rect x="617.00" y="374.00" width="1.00" height="1.00" fill="#12f01a"/>
<rect x="618.00" y="374.00" width="1.00" height="1.00" fill="#12f01a"/>
<rect x="619.00" y="364.00" width="1.00" height="1.00" fill="#12f01a"/>
<rect x="619.00" y="374.00" width="1.00" height="1.00" fill="#12f01a"/>
<rect x="620.00" y="363.00" width="1.00" height="2.00" fill="#12f01a"/>
<rect x="620.00" y="374.00" width="1.00" height="1.00" fill="#12f01a"/>
<rect x="621.00" y="374.00" width="1.00" height="1.00" fill="#12f01a"/>
<rect x="622.00" y="374.00" width="1.00" height="1.00" fill="#12f01a"/>
<rect x="623.00" y="364.00" width="1.00" height="1.00" fill="#12f01a"/>
<rect x="623.00" y="374.00" width="1.00" height="1.00" fill="#12f01a"/>
<rect x="624.00" y="363.00" width="1.00" height="2.00" fill="#12f01a"/>
<rect x="625.00" y="364.00" width="1.00" height="1.00" fill="#12f01a"/>
<rect x="625.00" y="374.00" width="1.00" height="1.00" fill="#12f01a"/>
<rect x="627.00" y="363.00" width="1.00" height="2.00" fill="#12f01a"/>
<rect x="628.00" y="364.00" width="1.00" height="1.00" fill="#12f01a"/>
<rect x="629.00" y="363.00" width="1.00" height="2.00" fill="#12f01a"/>
<rect x="629.00" y="374.00" width="1.00" height="1.00" fill="#12f01a"/>
<rect x="630.00" y="363.00" width="1.00" height="2.00" fill="#12f01a"/>
<rect x="631.00" y="364.00" width="1.00" height="1.00" fill="#12f01a"/>
<rect x="632.00" y="374.00" width="1.00" height="1.00" fill="#12f01a"/>
<rect x="635.00" y="363.00" width="1.00" height="2.00" fill="#12f01a"/>
<rect x="636.00" y="364.00" width="1.00" height="1.00" fill="#12f01a"/>
<rect x="636.00" y="374.00" width="1.00" height="1.00" fill="#12f01a"/>
<rect x="637.00" y="364.00" width="1.00" height="1.00" fill="#12f01a"/>
<rect x="637.00" y="374.00" width="1.00" height="1.00" fill="#12f01a"/>
<rect x="638.00" y="363.00" width="1.00" height="2.00" fill="#12f01a"/>
<rect x="639.00" y="374.00" width="1.00" height="1.00" fill="#12f01a"/>
<rect x="641.00" y="374.00" width="1.00" height="1.00" fill="#12f01a"/>
<rect x="642.00" y="374.00" width="1.00" height="1.00" fill="#12f01a"/>
<rect x="644.00" y="362.00" width="1.00" height="3.00" fill="#12f01a"/>
<rect x="644.00" y="374.00" width="1.00" height="1.00" fill="#12f01a"/>
<rect x="645.00" y="362.00" width="1.00" height="3.00" fill="#12f01a"/>
<rect x="646.00" y="362.00" width="1.00" height="3.00" fill="#12f01a"/>
<rect x="646.00" y="374.00" width="1.00" height="1.00" fill="#12f01a"/>
<rect x="648.00" y="374.00" width="1.00" height="1.00" fill="#12f01a"/>
<rect x="650.00" y="374.00" width="1.00" height="1.00" fill="#12f01a"/>
<rect x="651.00" y="362.00" width="1.00" height="3.00" fill="#12f01a"/>
<rect x="651.00" y="374.00" width="1.00" height="1.00" fill="#12f01a"/>
<rect x="652.00" y="374.00" width="1.00" height="1.00" fill="#12f01a"/>
<rect x="654.00" y="374.00" width="1.00" height="1.00" fill="#12f01a"/>
<rect x="655.00" y="374.00" width="1.00" height="1.00" fill="#12f01a"/>
<rect x="659.00" y="364.00" width="1.00" height="1.00" fill="#12f01a"/>
<rect x="659.00" y="374.00" width="1.00" height="1.00" fill="#12f01a"/>
<rect x="660.00" y="374.00" width="1.00" height="1.00" fill="#12f01a"/>
<rect x="661.00" y="362.00" width="1.00" height="3.00" fill="#12f01a"/>
<rect x="662.00" y="363.00" width="1.00" height="2.00" fill="#12f01a"/>
<rect x="662.00" y="374.00" width="1.00" height="1.00" fill="#12f01a"/>
<rect x="663.00" y="374.00" width="1.00" height="1.00" fill="#12f01a"/>
<rect x="664.00" y="364.00" width="1.00" height="1.00" fill="#12f01a"/>
<rect x="664.00" y="374.00" width="1.00" height="1.00" fill="#12f01a"/>
<rect x="665.00" y="364.00" width="1.00" height="1.00" fill="#12f01a"/>
<rect x="665.00" y="374.00" width="1.00" height="1.00" fill="#12f01a"/>
<rect x="666.00" y="374.00" width="1.00" height="1.00" fill="#12f01a"/>
<rect x="667.00" y="374.00" width="1.00" height="1.00" fill="#12f01a"/>
<rect x="668.00" y="364.00" width="1.00" height="1.00" fill="#12f01a"/>
<rect x="668.00" y="374.00" width="1.00" height="1.00" fill="#12f01a"/>
<rect x="669.00" y="364.00" width="1.00" height="1.00" fill="#12f01a"/>
<rect x="670.00" y="364.00" width="1.00" height="1.00" fill="#12f01a"/>
<rect x="670.00" y="374.00" width="1.00" height="1.00" fill="#12f01a"/>
<rect x="671.00" y="364.00" width="1.00" height="1.00" fill="#12f01a"/>
<rect x="673.00" y="374.00" width="1.00" height="1.00" fill="#12f01a"/>
<rect x="674.00" y="374.00" width="1.00" height="1.00" fill="#12f01a"/>
<rect x="676.00" y="374.00" width="1.00" height="1.00" fill="#12f01a"/>
<rect x="677.00" y="374.00" width="1.00" height="1.00" fill="#12f01a"/>
<rect x="678.00" y="374.00" width="1.00" height="1.00" fill="#12f01a"/>
<rect x="679.00" y="374.00" width="1.00" height="1.00" fill="#12f01a"/>
<rect x="680.00" y="374.00" width="1.00" height="1.00" fill="#12f01a"/>
<rect x="683.00" y="363.00" width="1.00" height="2.00" fill="#12f01a"/>
<rect x="683.00" y="374.00" width="1.00" height="1.00" fill="#12f01a"/>
<rect x="684.00" y="364.00" width="1.00" height="1.00" fill="#12f01a"/>
<rect x="684.00" y="374.00" width="1.00" height="1.00" fill="#12f01a"/>
<rect x="685.00" y="374.00" width="1.00" height="1.00" fill="#12f01a"/>
<rect x="686.00" y="364.00" width="1.00" height="1.00" fill="#12f01a"/>
<rect x="686.00" y="374.00" width="1.00" height="1.00" fill="#12f01a"/>
<rect x="687.00" y="374.00" width="1.00" height="1.00" fill="#12f01a"/>
<rect x="688.00" y="363.00" width="1.00" height="2.00" fill="#12f01a"/>
<rect x="688.00" y="374.00" width="1.00" height="1.00" fill="#12f01a"/>
<rect x="689.00" y="374.00" width="1.00" height="1.00" fill="#12f01a"/>
<rect x="690.00" y="374.00" width="1.00" height="1.00" fill="#12f01a"/>
<rect x="691.00" y="374.00" width="1.00" height="1.00" fill="#12f01a"/>
<rect x="568.30" y="311.00" width="29.50" height="7.00" fill="#12f01a"/>
<rect x="569.00" y="310.00" width="1.00" height="1.00" fill="#12f01a"/>
<rect x="569.00" y="318.00" width="1.00" height="2.00" fill="#12f01a"/>
<rect x="570.00" y="310.00" width="1.00" height="1.00" fill="#12f01a"/>
<rect x="571.00" y="318.00" width="1.00" height="2.00" fill="#12f01a"/>
<rect x="572.00" y="318.00" width="1.00" height="1.00" fill="#12f01a"/>
<rect x="573.00" y="309.00" width="1.00" height="2.00" fill="#12f01a"/>
<rect x="574.00" y="309.00" width="1.00" height="2.00" fill="#12f01a"/>
<rect x="574.00" y="318.00" width="1.00" height="1.00" fill="#12f01a"/>
<rect x="575.00" y="310.00" width="1.00" height="1.00" fill="#12f01a"/>
<rect x="575.00" y="318.00" width="1.00" height="1.00" fill="#12f01a"/>
<rect x="576.00" y="318.00" width="1.00" height="2.00" fill="#12f01a"/>
<rect x="578.00" y="310.00" width="1.00" height="1.00" fill="#12f01a"/>
<rect x="579.00" y="318.00" width="1.00" height="2.00" fill="#12f01a"/>
<rect x="580.00" y="318.00" width="1.00" height="3.00" fill="#12f01a"/>
<rect x="581.00" y="309.00" width="1.00" height="2.00" fill="#12f01a"/>
<rect x="581.00" y="318.00" width="1.00" height="2.00" fill="#12f01a"/>
<rect x="582.00" y="309.00" width="1.00" height="2.00" fill="#12f01a"/>
<rect x="583.00" y="318.00" width="1.00" height="2.00" fill="#12f01a"/>
<rect x="585.00" y="310.00" width="1.00" height="1.00" fill="#12f01a"/>
<rect x="585.00" y="318.00" width="1.00" height="3.00" fill="#12f01a"/>
<rect x="586.00" y="318.00" width="1.00" height="1.00" fill="#12f01a"/>
<rect x="587.00" y="310.00" width="1.00" height="1.00" fill="#12f01a"/>
<rect x="587.00" y="318.00" width="1.00" height="2.00" fill="#12f01a"/>
<rect x="589.00" y="318.00" width="1.00" height="1.00" fill="#12f01a"/>
<rect x="590.00" y="310.00" width="1.00" height="1.00" fill="#12f01a"/>
<rect x="590.00" y="318.00" width="1.00" height="3.00" fill="#12f01a"/>
<rect x="592.00" y="309.00" width="1.00" height="2.00" fill="#12f01a"/>
<rect x="592.00" y="318.00" width="1.00" height="1.00" fill="#12f01a"/>
<rect x="593.00" y="309.00" width="1.00" height="2.00" fill="#12f01a"/>
<rect x="593.00" y="318.00" width="1.00" height="3.00" fill="#12f01a"/>
<rect x="726.00" y="365.00" width="45.00" height="9.00" fill="#12f01a"/>
<rect x="726.00" y="362.00" width="1.00" height="3.00" fill="#12f01a"/>
<rect x="726.00" y="374.00" width="1.00" height="1.00" fill="#12f01a"/>
<rect x="727.00" y="363.00" width="1.00" height="2.00" fill="#12f01a"/>
<rect x="727.00" y="374.00" width="1.00" height="1.00" fill="#12f01a"/>
<rect x="728.00" y="374.00" width="1.00" height="1.00" fill="#12f01a"/>
<rect x="729.00" y="374.00" width="1.00" height="1.00" fill="#12f01a"/>
<rect x="730.00" y="374.00" width="1.00" height="1.00" fill="#12f01a"/>
<rect x="732.00" y="363.00" width="1.00" height="2.00" fill="#12f01a"/>
<rect x="732.00" y="374.00" width="1.00" height="1.00" fill="#12f01a"/>
<rect x="733.00" y="364.00" width="1.00" height="1.00" fill="#12f01a"/>
<rect x="734.00" y="364.00" width="1.00" height="1.00" fill="#12f01a"/>
<rect x="735.00" y="362.00" width="1.00" height="3.00" fill="#12f01a"/>
<rect x="736.00" y="364.00" width="1.00" height="1.00" fill="#12f01a"/>
<rect x="736.00" y="374.00" width="1.00" height="1.00" fill="#12f01a"/>
<rect x="737.00" y="374.00" width="1.00" height="1.00" fill="#12f01a"/>
<rect x="738.00" y="363.00" width="1.00" height="2.00" fill="#12f01a"/>
<rect x="738.00" y="374.00" width="1.00" height="1.00" fill="#12f01a"/>
<rect x="739.00" y="374.00" width="1.00" height="1.00" fill="#12f01a"/>
<rect x="740.00" y="374.00" width="1.00" height="1.00" fill="#12f01a"/>
<rect x="741.00" y="363.00" width="1.00" height="2.00" fill="#12f01a"/>
<rect x="743.00" y="363.00" width="1.00" height="2.00" fill="#12f01a"/>
<rect x="744.00" y="363.00" width="1.00" height="2.00" fill="#12f01a"/>
<rect x="745.00" y="374.00" width="1.00" height="1.00" fill="#12f01a"/>
<rect x="746.00" y="374.00" width="1.00" height="1.00" fill="#12f01a"/>
<rect x="747.00" y="363.00" width="1.00" height="2.00" fill="#12f01a"/>
<rect x="748.00" y="363.00" width="1.00" height="2.00" fill="#12f01a"/>
<rect x="748.00" y="374.00" width="1.00" height="1.00" fill="#12f01a"/>
<rect x="749.00" y="374.00" width="1.00" height="1.00" fill="#12f01a"/>
<rect x="750.00" y="374.00" width="1.00" height="1.00" fill="#12f01a"/>
<rect x="752.00" y="374.00" width="1.00" height="1.00" fill="#12f01a"/>
<rect x="756.00" y="363.00" width="1.00" height="2.00" fill="#12f01a"/>
<rect x="758.00" y="364.00" width="1.00" height="1.00" fill="#12f01a"/>
<rect x="758.00" y="374.00" width="1.00" height="1.00" fill="#12f01a"/>
<rect x="759.00" y="364.00" width="1.00" height="1.00" fill="#12f01a"/>
<rect x="760.00" y="364.00" width="1.00" height="1.00" fill="#12f01a"/>
<rect x="761.00" y="362.00" width="1.00" height="3.00" fill="#12f01a"/>
<rect x="762.00" y="362.00" width="1.00" height="3.00" fill="#12f01a"/>
<rect x="762.00" y="374.00" width="1.00" height="1.00" fill="#12f01a"/>
<rect x="763.00" y="374.00" width="1.00" height="1.00" fill="#12f01a"/>
<rect x="764.00" y="364.00" width="1.00" height="1.00" fill="#12f01a"/>
<rect x="764.00" y="374.00" width="1.00" height="1.00" fill="#12f01a"/>
<rect x="765.00" y="374.00" width="1.00" height="1.00" fill="#12f01a"/>
<rect x="766.00" y="363.00" width="1.00" height="2.00" fill="#12f01a"/>
<rect x="766.00" y="374.00" width="1.00" height="1.00" fill="#12f01a"/>
<rect x="767.00" y="374.00" width="1.00" height="1.00" fill="#12f01a"/>
<rect x="768.00" y="363.00" width="1.00" height="2.00" fill="#12f01a"/>
<rect x="769.00" y="362.00" width="1.00" height="3.00" fill="#12f01a"/>
<rect x="769.00" y="374.00" width="1.00" height="1.00" fill="#12f01a"/>
<rect x="770.00" y="364.00" width="1.00" height="1.00" fill="#12f01a"/>
<rect x="770.00" y="374.00" width="1.00" height="1.00" fill="#12f01a"/>
<rect x="694.10" y="311.00" width="29.50" height="7.00" fill="#12f01a"/>
<rect x="695.00" y="318.00" width="1.00" height="2.00" fill="#12f01a"/>
<rect x="696.00" y="309.00" width="1.00" height="2.00" fill="#12f01a"/>
<rect x="696.00" y="318.00" width="1.00" height="3.00" fill="#12f01a"/>
<rect x="697.00" y="318.00" width="1.00" height="1.00" fill="#12f01a"/>
<rect x="698.00" y="309.00" width="1.00" height="2.00" fill="#12f01a"/>
<rect x="698.00" y="318.00" width="1.00" height="3.00" fill="#12f01a"/>
<rect x="699.00" y="309.00" width="1.00" height="2.00" fill="#12f01a"/>
<rect x="699.00" y="318.00" width="1.00" height="2.00" fill="#12f01a"/>
<rect x="700.00" y="309.00" width="1.00" height="2.00" fill="#12f01a"/>
<rect x="700.00" y="318.00" width="1.00" height="1.00" fill="#12f01a"/>
<rect x="701.00" y="309.00" width="1.00" height="2.00" fill="#12f01a"/>
<rect x="702.00" y="309.00" width="1.00" height="2.00" fill="#12f01a"/>
<rect x="703.00" y="309.00" width="1.00" height="2.00" fill="#12f01a"/>
<rect x="704.00" y="310.00" width="1.00" height="1.00" fill="#12f01a"/>
<rect x="705.00" y="310.00" width="1.00" height="1.00" fill="#12f01a"/>
<rect x="705.00" y="318.00" width="1.00" height="2.00" fill="#12f01a"/>
<rect x="706.00" y="309.00" width="1.00" height="2.00" fill="#12f01a"/>
<rect x="706.00" y="318.00" width="1.00" height="1.00" fill="#12f01a"/>
<rect x="707.00" y="310.00" width="1.00" height="1.00" fill="#12f01a"/>
<rect x="707.00" y="318.00" width="1.00" height="2.00" fill="#12f01a"/>
<rect x="708.00" y="309.00" width="1.00" height="2.00" fill="#12f01a"/>
<rect x="708.00" y="318.00" width="1.00" height="2.00" fill="#12f01a"/>
<rect x="709.00" y="309.00" width="1.00" height="2.00" fill="#12f01a"/>
<rect x="709.00" y="318.00" width="1.00" height="3.00" fill="#12f01a"/>
<rect x="711.00" y="318.00" width="1.00" height="1.00" fill="#12f01a"/>
<rect x="712.00" y="318.00" width="1.00" height="1.00" fill="#12f01a"/>
<rect x="713.00" y="318.00" width="1.00" height="1.00" fill="#12f01a"/>
<rect x="714.00" y="318.00" width="1.00" height="2.00" fill="#12f01a"/>
<rect x="715.00" y="309.00" width="1.00" height="2.00" fill="#12f01a"/>
<rect x="715.00" y="318.00" width="1.00" height="2.00" fill="#12f01a"/>
<rect x="716.00" y="318.00" width="1.00" height="3.00" fill="#12f01a"/>
<rect x="717.00" y="310.00" width="1.00" height="1.00" fill="#12f01a"/>
<rect x="718.00" y="310.00" width="1.00" height="1.00" fill="#12f01a"/>
<rect x="719.00" y="310.00" width="1.00" height="1.00" fill="#12f01a"/>
<rect x="719.00" y="318.00" width="1.00" height="3.00" fill="#12f01a"/>
<rect x="720.00" y="318.00" width="1.00" height="1.00" fill="#12f01a"/>
<rect x="721.00" y="310.00" width="1.00" height="1.00" fill="#12f01a"/>
<rect x="721.00" y="318.00" width="1.00" height="2.00" fill="#12f01a"/>
<rect x="722.00" y="318.00" width="1.00" height="2.00" fill="#12f01a"/>
<path d="M-61.90,385.00 L-61.40,301.00" stroke="#12f01a" stroke-width="1.3" fill="none"/>
<path d="M-31.60,311.00 L-30.60,387.00" stroke="#12f01a" stroke-width="1.3" fill="none"/>
<path d="M-29.00,352.00 L-28.30,386.00" stroke="#12f01a" stroke-width="1.0" fill="none"/>
<rect x="-60.80" y="306.60" width="1.00" height="4.40" fill="#12f01a"/>
<rect x="-59.80" y="307.70" width="1.00" height="3.30" fill="#12f01a"/>
<rect x="-58.80" y="308.80" width="1.00" height="2.20" fill="#12f01a"/>
<rect x="-57.80" y="309.90" width="1.00" height="1.10" fill="#12f01a"/>
<rect x="-29.20" y="374.00" width="1.00" height="6.87" fill="#12f01a"/>
<rect x="-29.20" y="360.88" width="1.00" height="4.12" fill="#12f01a"/>
<rect x="-28.20" y="374.00" width="1.00" height="3.43" fill="#12f01a"/>
<rect x="-28.20" y="362.94" width="1.00" height="2.06" fill="#12f01a"/>
<rect x="-27.20" y="374.00" width="1.00" height="4.22" fill="#12f01a"/>
<rect x="-27.20" y="362.47" width="1.00" height="2.53" fill="#12f01a"/>
<rect x="-26.20" y="374.00" width="1.00" height="1.51" fill="#12f01a"/>
<rect x="-26.20" y="364.10" width="1.00" height="0.90" fill="#12f01a"/>
<rect x="-25.20" y="374.00" width="1.00" height="2.96" fill="#12f01a"/>
<rect x="-25.20" y="363.22" width="1.00" height="1.78" fill="#12f01a"/>
<rect x="-24.20" y="374.00" width="1.00" height="1.24" fill="#12f01a"/>
<rect x="-24.20" y="364.26" width="1.00" height="0.74" fill="#12f01a"/>
<rect x="-23.20" y="374.00" width="1.00" height="2.86" fill="#12f01a"/>
<rect x="-23.20" y="363.28" width="1.00" height="1.72" fill="#12f01a"/>
<rect x="-22.20" y="374.00" width="1.00" height="1.82" fill="#12f01a"/>
<rect x="-22.20" y="363.91" width="1.00" height="1.09" fill="#12f01a"/>
<rect x="-21.20" y="374.00" width="1.00" height="0.91" fill="#12f01a"/>
<rect x="-21.20" y="364.45" width="1.00" height="0.55" fill="#12f01a"/>
<rect x="-20.20" y="374.00" width="1.00" height="0.78" fill="#12f01a"/>
<rect x="-20.20" y="364.53" width="1.00" height="0.47" fill="#12f01a"/>
<path d="M63.90,385.00 L64.40,301.00" stroke="#12f01a" stroke-width="1.3" fill="none"/>
<path d="M94.20,311.00 L95.20,387.00" stroke="#12f01a" stroke-width="1.3" fill="none"/>
<path d="M96.80,352.00 L97.50,386.00" stroke="#12f01a" stroke-width="1.0" fill="none"/>
<rect x="65.00" y="306.60" width="1.00" height="4.40" fill="#12f01a"/>
<rect x="66.00" y="307.70" width="1.00" height="3.30" fill="#12f01a"/>
<rect x="67.00" y="308.80" width="1.00" height="2.20" fill="#12f01a"/>
<rect x="68.00" y="309.90" width="1.00" height="1.10" fill="#12f01a"/>
<rect x="96.60" y="374.00" width="1.00" height="7.68" fill="#12f01a"/>
<rect x="96.60" y="360.39" width="1.00" height="4.61" fill="#12f01a"/>
<rect x="97.60" y="374.00" width="1.00" height="6.97" fill="#12f01a"/>
<rect x="97.60" y="360.82" width="1.00" height="4.18" fill="#12f01a"/>
<rect x="98.60" y="374.00" width="1.00" height="2.00" fill="#12f01a"/>
<rect x="98.60" y="363.80" width="1.00" height="1.20" fill="#12f01a"/>
<rect x="99.60" y="374.00" width="1.00" height="4.36" fill="#12f01a"/>
<rect x="99.60" y="362.39" width="1.00" height="2.61" fill="#12f01a"/>
<rect x="100.60" y="374.00" width="1.00" height="3.82" fill="#12f01a"/>
<rect x="100.60" y="362.71" width="1.00" height="2.29" fill="#12f01a"/>
<rect x="101.60" y="374.00" width="1.00" height="2.82" fill="#12f01a"/>
<rect x="101.60" y="363.31" width="1.00" height="1.69" fill="#12f01a"/>
<rect x="102.60" y="374.00" width="1.00" height="0.84" fill="#12f01a"/>
<rect x="102.60" y="364.50" width="1.00" height="0.50" fill="#12f01a"/>
<rect x="103.60" y="374.00" width="1.00" height="2.26" fill="#12f01a"/>
<rect x="103.60" y="363.64" width="1.00" height="1.36" fill="#12f01a"/>
<rect x="104.60" y="374.00" width="1.00" height="0.93" fill="#12f01a"/>
<rect x="104.60" y="364.44" width="1.00" height="0.56" fill="#12f01a"/>
<rect x="105.60" y="374.00" width="1.00" height="0.56" fill="#12f01a"/>
<rect x="105.60" y="364.67" width="1.00" height="0.33" fill="#12f01a"/>
<path d="M189.70,385.00 L190.20,301.00" stroke="#12f01a" stroke-width="1.3" fill="none"/>
<path d="M220.00,311.00 L221.00,387.00" stroke="#12f01a" stroke-width="1.3" fill="none"/>
<path d="M222.60,352.00 L223.30,386.00" stroke="#12f01a" stroke-width="1.0" fill="none"/>
<rect x="190.80" y="306.60" width="1.00" height="4.40" fill="#12f01a"/>
<rect x="191.80" y="307.70" width="1.00" height="3.30" fill="#12f01a"/>
<rect x="192.80" y="308.80" width="1.00" height="2.20" fill="#12f01a"/>
<rect x="193.80" y="309.90" width="1.00" height="1.10" fill="#12f01a"/>
<rect x="222.40" y="374.00" width="1.00" height="6.89" fill="#12f01a"/>
<rect x="222.40" y="360.87" width="1.00" height="4.13" fill="#12f01a"/>
<rect x="223.40" y="374.00" width="1.00" height="3.29" fill="#12f01a"/>
<rect x="223.40" y="363.03" width="1.00" height="1.97" fill="#12f01a"/>
<rect x="224.40" y="374.00" width="1.00" height="1.74" fill="#12f01a"/>
<rect x="224.40" y="363.96" width="1.00" height="1.04" fill="#12f01a"/>
<rect x="225.40" y="374.00" width="1.00" height="5.28" fill="#12f01a"/>
<rect x="225.40" y="361.83" width="1.00" height="3.17" fill="#12f01a"/>
<rect x="226.40" y="374.00" width="1.00" height="2.17" fill="#12f01a"/>
<rect x="226.40" y="363.70" width="1.00" height="1.30" fill="#12f01a"/>
<rect x="227.40" y="374.00" width="1.00" height="1.12" fill="#12f01a"/>
<rect x="227.40" y="364.33" width="1.00" height="0.67" fill="#12f01a"/>
<rect x="228.40" y="374.00" width="1.00" height="1.13" fill="#12f01a"/>
<rect x="228.40" y="364.32" width="1.00" height="0.68" fill="#12f01a"/>
<rect x="229.40" y="374.00" width="1.00" height="2.39" fill="#12f01a"/>
<rect x="229.40" y="363.57" width="1.00" height="1.43" fill="#12f01a"/>
<rect x="230.40" y="374.00" width="1.00" height="1.29" fill="#12f01a"/>
<rect x="230.40" y="364.23" width="1.00" height="0.77" fill="#12f01a"/>
<rect x="231.40" y="374.00" width="1.00" height="0.33" fill="#12f01a"/>
<rect x="231.40" y="364.80" width="1.00" height="0.20" fill="#12f01a"/>
<path d="M315.50,385.00 L316.00,301.00" stroke="#12f01a" stroke-width="1.3" fill="none"/>
<path d="M345.80,311.00 L346.80,387.00" stroke="#12f01a" stroke-width="1.3" fill="none"/>
<path d="M348.40,352.00 L349.10,386.00" stroke="#12f01a" stroke-width="1.0" fill="none"/>
<rect x="316.60" y="306.60" width="1.00" height="4.40" fill="#12f01a"/>
<rect x="317.60" y="307.70" width="1.00" height="3.30" fill="#12f01a"/>
<rect x="318.60" y="308.80" width="1.00" height="2.20" fill="#12f01a"/>
<rect x="319.60" y="309.90" width="1.00" height="1.10" fill="#12f01a"/>
<rect x="348.20" y="374.00" width="1.00" height="2.88" fill="#12f01a"/>
<rect x="348.20" y="363.27" width="1.00" height="1.73" fill="#12f01a"/>
<rect x="349.20" y="374.00" width="1.00" height="6.65" fill="#12f01a"/>
<rect x="349.20" y="361.01" width="1.00" height="3.99" fill="#12f01a"/>
<rect x="350.20" y="374.00" width="1.00" height="4.79" fill="#12f01a"/>
<rect x="350.20" y="362.13" width="1.00" height="2.87" fill="#12f01a"/>
<rect x="351.20" y="374.00" width="1.00" height="3.85" fill="#12f01a"/>
<rect x="351.20" y="362.69" width="1.00" height="2.31" fill="#12f01a"/>
<rect x="352.20" y="374.00" width="1.00" height="1.67" fill="#12f01a"/>
<rect x="352.20" y="364.00" width="1.00" height="1.00" fill="#12f01a"/>
<rect x="353.20" y="374.00" width="1.00" height="2.24" fill="#12f01a"/>
<rect x="353.20" y="363.66" width="1.00" height="1.34" fill="#12f01a"/>
<rect x="354.20" y="374.00" width="1.00" height="3.07" fill="#12f01a"/>
<rect x="354.20" y="363.16" width="1.00" height="1.84" fill="#12f01a"/>
<rect x="355.20" y="374.00" width="1.00" height="0.61" fill="#12f01a"/>
<rect x="355.20" y="364.64" width="1.00" height="0.36" fill="#12f01a"/>
<rect x="356.20" y="374.00" width="1.00" height="0.90" fill="#12f01a"/>
<rect x="356.20" y="364.46" width="1.00" height="0.54" fill="#12f01a"/>
<rect x="357.20" y="374.00" width="1.00" height="0.23" fill="#12f01a"/>
<rect x="357.20" y="364.86" width="1.00" height="0.14" fill="#12f01a"/>
<path d="M441.30,385.00 L441.80,301.00" stroke="#12f01a" stroke-width="1.3" fill="none"/>
<path d="M471.60,311.00 L472.60,387.00" stroke="#12f01a" stroke-width="1.3" fill="none"/>
<path d="M474.20,352.00 L474.90,386.00" stroke="#12f01a" stroke-width="1.0" fill="none"/>
<rect x="442.40" y="306.60" width="1.00" height="4.40" fill="#12f01a"/>
<rect x="443.40" y="307.70" width="1.00" height="3.30" fill="#12f01a"/>
<rect x="444.40" y="308.80" width="1.00" height="2.20" fill="#12f01a"/>
<rect x="445.40" y="309.90" width="1.00" height="1.10" fill="#12f01a"/>
<rect x="474.00" y="374.00" width="1.00" height="7.99" fill="#12f01a"/>
<rect x="474.00" y="360.21" width="1.00" height="4.79" fill="#12f01a"/>
<rect x="475.00" y="374.00" width="1.00" height="2.36" fill="#12f01a"/>
<rect x="475.00" y="363.58" width="1.00" height="1.42" fill="#12f01a"/>
<rect x="476.00" y="374.00" width="1.00" height="6.18" fill="#12f01a"/>
<rect x="476.00" y="361.29" width="1.00" height="3.71" fill="#12f01a"/>
<rect x="477.00" y="374.00" width="1.00" height="4.93" fill="#12f01a"/>
<rect x="477.00" y="362.04" width="1.00" height="2.96" fill="#12f01a"/>
<rect x="478.00" y="374.00" width="1.00" height="3.83" fill="#12f01a"/>
<rect x="478.00" y="362.70" width="1.00" height="2.30" fill="#12f01a"/>
<rect x="479.00" y="374.00" width="1.00" height="1.13" fill="#12f01a"/>
<rect x="479.00" y="364.32" width="1.00" height="0.68" fill="#12f01a"/>
<rect x="480.00" y="374.00" width="1.00" height="2.47" fill="#12f01a"/>
<rect x="480.00" y="363.52" width="1.00" height="1.48" fill="#12f01a"/>
<rect x="481.00" y="374.00" width="1.00" height="1.49" fill="#12f01a"/>
<rect x="481.00" y="364.11" width="1.00" height="0.89" fill="#12f01a"/>
<rect x="482.00" y="374.00" width="1.00" height="0.99" fill="#12f01a"/>
<rect x="482.00" y="364.41" width="1.00" height="0.59" fill="#12f01a"/>
<rect x="483.00" y="374.00" width="1.00" height="0.29" fill="#12f01a"/>
<rect x="483.00" y="364.83" width="1.00" height="0.17" fill="#12f01a"/>
<path d="M567.10,385.00 L567.60,301.00" stroke="#12f01a" stroke-width="1.3" fill="none"/>
<path d="M597.40,311.00 L598.40,387.00" stroke="#12f01a" stroke-width="1.3" fill="none"/>
<path d="M600.00,352.00 L600.70,386.00" stroke="#12f01a" stroke-width="1.0" fill="none"/>
<rect x="568.20" y="306.60" width="1.00" height="4.40" fill="#12f01a"/>
<rect x="569.20" y="307.70" width="1.00" height="3.30" fill="#12f01a"/>
<rect x="570.20" y="308.80" width="1.00" height="2.20" fill="#12f01a"/>
<rect x="571.20" y="309.90" width="1.00" height="1.10" fill="#12f01a"/>
<rect x="599.80" y="374.00" width="1.00" height="5.07" fill="#12f01a"/>
<rect x="599.80" y="361.96" width="1.00" height="3.04" fill="#12f01a"/>
<rect x="600.80" y="374.00" width="1.00" height="6.13" fill="#12f01a"/>
<rect x="600.80" y="361.32" width="1.00" height="3.68" fill="#12f01a"/>
<rect x="601.80" y="374.00" width="1.00" height="2.23" fill="#12f01a"/>
<rect x="601.80" y="363.66" width="1.00" height="1.34" fill="#12f01a"/>
<rect x="602.80" y="374.00" width="1.00" height="5.08" fill="#12f01a"/>
<rect x="602.80" y="361.95" width="1.00" height="3.05" fill="#12f01a"/>
<rect x="603.80" y="374.00" width="1.00" height="2.71" fill="#12f01a"/>
<rect x="603.80" y="363.37" width="1.00" height="1.63" fill="#12f01a"/>
<rect x="604.80" y="374.00" width="1.00" height="1.80" fill="#12f01a"/>
<rect x="604.80" y="363.92" width="1.00" height="1.08" fill="#12f01a"/>
<rect x="605.80" y="374.00" width="1.00" height="1.37" fill="#12f01a"/>
<rect x="605.80" y="364.18" width="1.00" height="0.82" fill="#12f01a"/>
<rect x="606.80" y="374.00" width="1.00" height="1.43" fill="#12f01a"/>
<rect x="606.80" y="364.14" width="1.00" height="0.86" fill="#12f01a"/>
<rect x="607.80" y="374.00" width="1.00" height="1.18" fill="#12f01a"/>
<rect x="607.80" y="364.29" width="1.00" height="0.71" fill="#12f01a"/>
<rect x="608.80" y="374.00" width="1.00" height="0.54" fill="#12f01a"/>
<rect x="608.80" y="364.67" width="1.00" height="0.33" fill="#12f01a"/>
<path d="M692.90,385.00 L693.40,301.00" stroke="#12f01a" stroke-width="1.3" fill="none"/>
<path d="M723.20,311.00 L724.20,387.00" stroke="#12f01a" stroke-width="1.3" fill="none"/>
<path d="M725.80,352.00 L726.50,386.00" stroke="#12f01a" stroke-width="1.0" fill="none"/>
<rect x="694.00" y="306.60" width="1.00" height="4.40" fill="#12f01a"/>
<rect x="695.00" y="307.70" width="1.00" height="3.30" fill="#12f01a"/>
<rect x="696.00" y="308.80" width="1.00" height="2.20" fill="#12f01a"/>
<rect x="697.00" y="309.90" width="1.00" height="1.10" fill="#12f01a"/>
<rect x="725.60" y="374.00" width="1.00" height="7.34" fill="#12f01a"/>
<rect x="725.60" y="360.60" width="1.00" height="4.40" fill="#12f01a"/>
<rect x="726.60" y="374.00" width="1.00" height="4.56" fill="#12f01a"/>
<rect x="726.60" y="362.26" width="1.00" height="2.74" fill="#12f01a"/>
<rect x="727.60" y="374.00" width="1.00" height="4.06" fill="#12f01a"/>
<rect x="727.60" y="362.56" width="1.00" height="2.44" fill="#12f01a"/>
<rect x="728.60" y="374.00" width="1.00" height="5.55" fill="#12f01a"/>
<rect x="728.60" y="361.67" width="1.00" height="3.33" fill="#12f01a"/>
<rect x="729.60" y="374.00" width="1.00" height="1.97" fill="#12f01a"/>
<rect x="729.60" y="363.82" width="1.00" height="1.18" fill="#12f01a"/>
<rect x="730.60" y="374.00" width="1.00" height="1.05" fill="#12f01a"/>
<rect x="730.60" y="364.37" width="1.00" height="0.63" fill="#12f01a"/>
<rect x="731.60" y="374.00" width="1.00" height="1.59" fill="#12f01a"/>
<rect x="731.60" y="364.05" width="1.00" height="0.95" fill="#12f01a"/>
<rect x="732.60" y="374.00" width="1.00" height="1.16" fill="#12f01a"/>
<rect x="732.60" y="364.30" width="1.00" height="0.70" fill="#12f01a"/>
<rect x="733.60" y="374.00" width="1.00" height="0.55" fill="#12f01a"/>
<rect x="733.60" y="364.67" width="1.00" height="0.33" fill="#12f01a"/>
<rect x="734.60" y="374.00" width="1.00" height="0.45" fill="#12f01a"/>
<rect x="734.60" y="364.73" width="1.00" height="0.27" fill="#12f01a"/>
<path d="M818.70,385.00 L819.20,301.00" stroke="#12f01a" stroke-width="1.3" fill="none"/>
<path d="M849.00,311.00 L850.00,387.00" stroke="#12f01a" stroke-width="1.3" fill="none"/>
<path d="M851.60,352.00 L852.30,386.00" stroke="#12f01a" stroke-width="1.0" fill="none"/>
<rect x="819.80" y="306.60" width="1.00" height="4.40" fill="#12f01a"/>
<rect x="820.80" y="307.70" width="1.00" height="3.30" fill="#12f01a"/>
<rect x="821.80" y="308.80" width="1.00" height="2.20" fill="#12f01a"/>
<rect x="822.80" y="309.90" width="1.00" height="1.10" fill="#12f01a"/>
<rect x="851.40" y="374.00" width="1.00" height="2.21" fill="#12f01a"/>
<rect x="851.40" y="363.68" width="1.00" height="1.32" fill="#12f01a"/>
<rect x="852.40" y="374.00" width="1.00" height="6.77" fill="#12f01a"/>
<rect x="852.40" y="360.94" width="1.00" height="4.06" fill="#12f01a"/>
<rect x="853.40" y="374.00" width="1.00" height="3.92" fill="#12f01a"/>
<rect x="853.40" y="362.65" width="1.00" height="2.35" fill="#12f01a"/>
<rect x="854.40" y="374.00" width="1.00" height="5.09" fill="#12f01a"/>
<rect x="854.40" y="361.95" width="1.00" height="3.05" fill="#12f01a"/>
<rect x="855.40" y="374.00" width="1.00" height="3.71" fill="#12f01a"/>
<rect x="855.40" y="362.77" width="1.00" height="2.23" fill="#12f01a"/>
<rect x="856.40" y="374.00" width="1.00" height="3.19" fill="#12f01a"/>
<rect x="856.40" y="363.09" width="1.00" height="1.91" fill="#12f01a"/>
<rect x="857.40" y="374.00" width="1.00" height="2.62" fill="#12f01a"/>
<rect x="857.40" y="363.43" width="1.00" height="1.57" fill="#12f01a"/>
<rect x="858.40" y="374.00" width="1.00" height="1.14" fill="#12f01a"/>
<rect x="858.40" y="364.31" width="1.00" height="0.69" fill="#12f01a"/>
<rect x="859.40" y="374.00" width="1.00" height="1.27" fill="#12f01a"/>
<rect x="859.40" y="364.24" width="1.00" height="0.76" fill="#12f01a"/>
<rect x="860.40" y="374.00" width="1.00" height="0.32" fill="#12f01a"/>
<rect x="860.40" y="364.81" width="1.00" height="0.19" fill="#12f01a"/>
</g>
<text x="0" y="14.5" font-family="Liberation Serif" font-weight="bold" font-size="20" fill="#040418" stroke="#040418" stroke-width="0.5" letter-spacing="-0.7">Tek</text>
<g fill="none" stroke="#e8e8ff" stroke-width="1.1" shape-rendering="auto">
<path d="M37.7,0.5 V16"/><path d="M35.2,6.5 L37.6,3.5"/>
<path d="M44.5,0.3 V2"/><path d="M40.3,2.4 H50.8"/>
<path d="M42.2,4.6 H48.5 V6.7 H42.2 Z"/>
<path d="M40.2,10 V8.8 H50.7 V10"/><path d="M40,10.6 H50.5"/>
<path d="M45,10.6 V15.2 L43.6,14.4"/>
<path d="M61.5,0.3 V15.6"/><path d="M56.5,4.3 V15.6"/><path d="M61.5,7.5 H67.7"/><path d="M53.2,15.6 H68"/>
</g>
<g shape-rendering="auto">
<path d="M261,1.2 H267.6 L264.3,5.6 Z" fill="#f0b878"/>
<path d="M260.3,6.2 Q260.3,5.2 261.3,5.2 H267.2 Q268.2,5.2 268.2,6.2 V12.3 Q268.2,15.6 264.25,15.6 Q260.3,15.6 260.3,12.3 Z" fill="#f0a028"/>
<path d="M262.3,6.9 H266.3 M264.3,6.9 V13.2" stroke="#1a1000" stroke-width="1.3"/>
<path d="M277.6,1.6 H279.6 V14.6 H277.6" fill="none" stroke="#a8a8b8" stroke-width="1.2"/>
</g>
<g shape-rendering="auto">
<path d="M90.8,17 H102 L96.4,23.2 Z" fill="#f0a028"/>
<path d="M90,24 H102.5 V35.3 L96.2,39 L90,35.3 Z" fill="#f0a028"/>
<path d="M91.2,26.3 H101.3 M96.2,26.3 V36" stroke="#0a0500" stroke-width="1.8"/>
</g>
<g shape-rendering="auto">
<path d="M2.5,259.3 H13 L19.5,267.2 L13,275.2 H2.5 Q0.3,275.2 0.3,273 V261.5 Q0.3,259.3 2.5,259.3 Z" fill="#c818c8" stroke="#d050d0" stroke-width="0.8"/>
<text x="7.5" y="272.6" font-family="Liberation Sans" font-weight="bold" font-size="14.5" fill="#34043a" text-anchor="middle">3</text>
<path d="M2.5,280.6 H13.8 L20.2,288.4 L13.8,296.3 H2.5 Q0.6,296.3 0.6,294.3 V282.6 Q0.6,280.6 2.5,280.6 Z" fill="#000" stroke="#e8e850" stroke-width="1.2"/>
<path d="M5.2,286 L8.3,283.4 V294" fill="none" stroke="#f0f060" stroke-width="2"/>
<path d="M2.5,362.6 H13 L19.2,370.6 L13,378.6 H2.5 Q0.6,378.6 0.6,376.6 V364.6 Q0.6,362.6 2.5,362.6 Z" fill="#000" stroke="#20a028" stroke-width="1.2"/>
<text x="7.8" y="376.2" font-family="Liberation Sans" font-weight="bold" font-size="14.5" fill="#28b030" text-anchor="middle">4</text>
<path d="M760,257.5 L766.3,251.8 V263.2 Z" fill="#f0f030"/><rect x="766" y="257" width="5" height="1.1" fill="#f0f0a0"/>
</g>
<g shape-rendering="auto" fill="#000" stroke="#d8d8f8" stroke-width="1.05">
<rect x="20.8" y="420.5" width="320.2" height="38" rx="5"/>
<rect x="344.5" y="420.5" width="338.8" height="38" rx="5"/>
<rect x="686.7" y="420.5" width="111" height="38" rx="5"/>
</g>
<rect x="26" y="423.2" width="25" height="15.8" rx="7.9" fill="#f0f028" shape-rendering="auto"/><path d="M35.90,427.80 L38.90,425.80 V436.40" fill="none" stroke="#101000" stroke-width="2.1" shape-rendering="auto"/>
<rect x="26" y="440.6" width="25" height="16" rx="8.0" fill="#a018b0" shape-rendering="auto"/><text x="38.5" y="453.40000000000003" font-family="Liberation Sans" font-weight="bold" font-size="14" fill="#48084c" text-anchor="middle">3</text>
<rect x="186" y="440.6" width="25.2" height="16" rx="8.0" fill="#20a028" shape-rendering="auto"/><text x="198.6" y="453.40000000000003" font-family="Liberation Sans" font-weight="bold" font-size="14" fill="#082808" text-anchor="middle">4</text>
<rect x="616" y="423.3" width="25" height="15.2" rx="7.6" fill="#f0f028" shape-rendering="auto"/><path d="M625.90,427.90 L628.90,425.90 V435.90" fill="none" stroke="#101000" stroke-width="2.1" shape-rendering="auto"/>
<text x="67.70 77.50 83.40 93.20 108.90" y="435.7" font-family="Liberation Sans" font-size="14" fill="#f0f048" stroke="#f0f048" stroke-width="0.35">5.00V</text>
<text x="68.30 78.28 84.36 94.34 110.40" y="454" font-family="Liberation Sans" font-size="14" fill="#a040b0" stroke="#a040b0" stroke-width="0.35">3.00A</text>
<path d="M130.2,453.6 H133.6 L133.3,451.3 Q130.6,449.6 130.6,447.6 Q130.6,443.7 135.9,443.7 Q141.2,443.7 141.2,447.6 Q141.2,449.6 138.5,451.3 L138.2,453.6 H141.6" fill="none" stroke="#a040b0" stroke-width="1.5" shape-rendering="auto"/>
<text x="227.80 237.50 243.30 253.00 268.50" y="454" font-family="Liberation Sans" font-size="14" fill="#30a830" stroke="#30a830" stroke-width="0.35">5.00V</text>
<path d="M304.5,443.3 V449.8 H307.2 Q308.3,449.8 308.3,448.1 Q308.3,446.5 306.8,446.5 H304.5 M304.5,443.3 H306.6 Q307.8,443.3 307.8,444.9 Q307.8,446.5 306.6,446.5 M308.6,447.2 V453.6 H312.6 V447.2 M310.6,448.5 V453.6" fill="none" stroke="#32a032" stroke-width="1.05" shape-rendering="auto"/>
<text x="350.20 360.36 366.63 376.79 386.96 397.40" y="435.5" font-family="Liberation Sans" font-size="14" fill="#ffffff" stroke="#ffffff" stroke-width="0.35">2.00µs</text>
<rect x="349" y="442.5" width="11.7" height="12.2" rx="1" fill="#f0a028"/><path d="M351.5,445 H358.3 M354.9,445 V453" stroke="#000" stroke-width="1.6"/>
<text x="377.05 386.30 391.65 400.90 415.50" y="454" font-family="Liberation Sans" font-size="14" fill="#f0a040" stroke="#f0a040" stroke-width="0.35">0.00%</text><path d="M369.05,446.10 L371.95,443.90 V454.00" fill="none" stroke="#f0a040" stroke-width="1.7" shape-rendering="auto"/>
<text x="488.20 497.65 503.20 512.65 522.10" y="435.5" font-family="Liberation Sans" font-size="14" fill="#ffffff" stroke="#ffffff" stroke-width="0.35">2.50G</text>
<text x="499.20" y="453.8" font-family="Liberation Sans" font-size="14" fill="#ffffff" stroke="#ffffff" stroke-width="0.35">M</text><path d="M489.85,445.90 L492.75,443.70 V453.80" fill="none" stroke="#ffffff" stroke-width="1.7" shape-rendering="auto"/>
<text x="623.30 632.94 648.32 663.70" y="453.8" font-family="Liberation Sans" font-size="14" fill="#ffffff" stroke="#ffffff" stroke-width="0.35">3.0V</text><path d="M639.93,445.90 L642.83,443.70 V453.80" fill="none" stroke="#ffffff" stroke-width="1.7" shape-rendering="auto"/>
<text x="701.30" y="435.5" font-family="Liberation Sans" font-size="14" fill="#ffffff" stroke="#ffffff" stroke-width="0.35">5</text>
<path d="M717.8,428 L720.8,425.8 V435.5" fill="none" stroke="#ffffff" stroke-width="1.7" shape-rendering="auto"/>
<text x="754.30 764.17 783.90" y="435.5" font-family="Liberation Sans" font-size="14" fill="#ffffff" stroke="#ffffff" stroke-width="0.35">207</text><path d="M775.28,427.60 L778.18,425.40 V435.50" fill="none" stroke="#ffffff" stroke-width="1.7" shape-rendering="auto"/>
<text x="701.38 711.07 716.86 726.54 736.23" y="453.6" font-family="Liberation Sans" font-size="14" fill="#ffffff" stroke="#ffffff" stroke-width="0.35">2:39:</text><path d="M692.95,445.70 L695.85,443.50 V453.60 M743.27,445.70 L746.17,443.50 V453.60 M752.95,445.70 L755.85,443.50 V453.60" fill="none" stroke="#ffffff" stroke-width="1.7" shape-rendering="auto"/>
<g fill="none" stroke="#ffffff" stroke-width="1.15" shape-rendering="auto">
<path d="M535.3,425.3 L537,427.8"/><path d="M534.6,438.3 L537.9,432"/>
<path d="M542.8,423.6 L540.3,428.3"/><path d="M541.2,427.5 H549.5 L547.6,429.8"/>
<path d="M545.5,428.2 Q544.5,434.5 539.8,438.5"/><path d="M545.8,432 Q547.5,436.2 550.8,438.5"/>
<path d="M568,423.5 L562,425.6"/><path d="M561.8,429.5 H568.6"/><path d="M565.5,424.3 V438.6"/>
<path d="M565.2,430.2 L561.8,435.8"/><path d="M566.2,431.2 L568.4,433.4"/>
<path d="M574.5,423.3 V432.3 L573.5,431.5"/><path d="M571.6,427.2 L570.4,431"/><path d="M576.8,426.4 L578.2,429.8"/>
<path d="M578,432 Q576.5,436.8 570.2,438.6"/>
<path d="M525.5,441.3 V446.3"/><path d="M525.5,444.5 H532.3"/>
<path d="M521.5,446.5 H531.5 V450.5 H521.5 Z"/>
<path d="M520.6,453.4 L519.2,456.8"/><path d="M524.5,453.4 L525.6,456.8"/><path d="M528.5,453.4 L529.8,456.8"/><path d="M532.4,453.4 L534.3,456.8"/>
<path d="M730.5,423.5 V432 Q730.3,436.2 727,438.8"/><path d="M730.5,423.5 H738.5 V437.6 L736.8,436.6"/>
<path d="M730.5,428.5 H738.5"/><path d="M730.5,432.5 H738.5"/>
</g>
<path d="M553.6,436 L559.4,425.3" stroke="#ffffff" stroke-width="1.8" fill="none" shape-rendering="auto"/>
<path d="M655,435.5 H659.8 L663.2,426.2 H667.5" fill="none" stroke="#ffffff" stroke-width="1.8" shape-rendering="auto"/>
<rect x="600" y="451" width="200" height="29" fill="#faf4ff" fill-opacity="0.315"/>
<text x="616.4" y="472.2" font-family="Liberation Sans" font-size="19" letter-spacing="0.18" fill="#445e88" stroke="#445e88" stroke-width="0.5" fill-opacity="0.9" stroke-opacity="0.9">www.cntronics.com</text>
<rect x="0" y="480" width="800" height="1" fill="#f4f4f8"/>
<rect x="20" y="16" width="752" height="1" fill="#ccd0ff"/>
<rect x="20" y="418" width="752" height="1" fill="#ccd0ff"/>
<rect x="20" y="16" width="1" height="403" fill="#ccd0ff"/>
<rect x="771" y="16" width="1" height="403" fill="#ccd0ff"/>
</svg>

</body></html>
